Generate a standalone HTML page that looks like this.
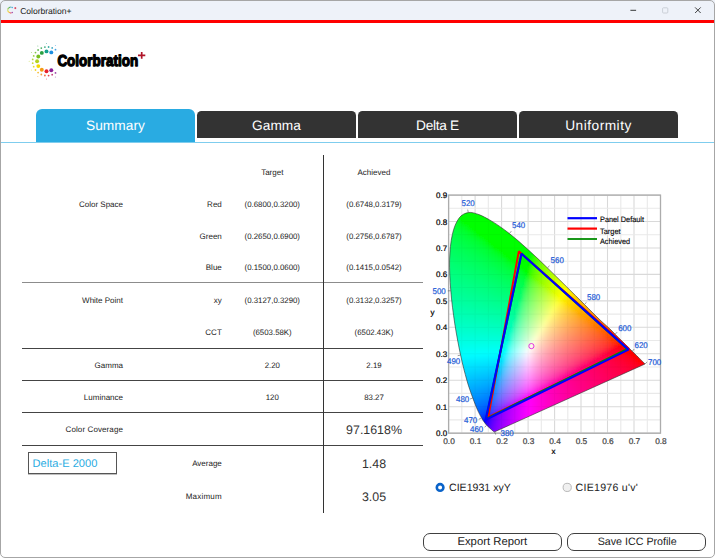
<!DOCTYPE html>
<html lang="en"><head><meta charset="utf-8"><title>Colorbration+</title>
<style>
*{box-sizing:border-box;margin:0;padding:0}
html,body{width:715px;height:559px;overflow:hidden;background:#fff}
body{font-family:"Liberation Sans",sans-serif;color:#222;position:relative;text-rendering:geometricPrecision}
.win{position:absolute;left:0;top:0;width:715px;height:559px;background:#fff;overflow:hidden}
.frame{position:absolute;left:0;top:0;width:714.6px;height:558.4px;border:1.2px solid #a6a6a6;border-radius:5px;pointer-events:none}
.titlebar{position:absolute;left:0;top:0;width:715px;height:20.2px;background:#eef2f9}
.redline{position:absolute;left:0;top:20.2px;width:715px;height:2.4px;background:#ff0000}
.title{position:absolute;left:20.2px;top:5.5px;font-size:8.6px;color:#222;letter-spacing:-0.05px;white-space:nowrap}
.abs{position:absolute;white-space:nowrap}
.tab{position:absolute;color:#fff;font-size:13.7px;letter-spacing:0.05px;text-align:center;border-radius:6px 6px 0 0}
.tab.on{left:36px;top:108.8px;width:159px;height:33.6px;background:#29abe2;line-height:33px}
.tab.off{top:110.8px;height:27.1px;background:#333;line-height:29px;border-radius:4.5px 4.5px 0 0}
.blueline{position:absolute;left:1px;top:141.7px;width:713px;height:1px;background:#7fcdee}
.t{position:absolute;font-size:8.0px;color:#1c1c1c;white-space:nowrap;line-height:11px}
.r1{text-align:right;width:120px;left:3px}
.r2{text-align:right;width:100px;left:121.8px}
.c3{text-align:center;width:100px;left:222.3px}
.c4{text-align:center;width:100px;left:324px}
.n{font-size:7.85px}
.big{font-size:12.4px;line-height:14px;color:#333}
.hl{position:absolute;left:22px;width:401px;height:1px;background:#444}
.vl{position:absolute;left:322.9px;top:155px;width:1.15px;height:357.6px;background:#333}
.debox{position:absolute;left:28px;top:452.4px;width:88.8px;height:21.2px;border:1px solid #555;color:#29abe2;font-size:11.1px;line-height:23px;padding-left:3.6px;box-shadow:0 0.5px 0.5px rgba(0,0,0,.25)}
.radio{position:absolute;font-size:10.6px;color:#222;white-space:nowrap}
.btn{position:absolute;top:532.5px;height:18.3px;border:1.6px solid #404040;border-radius:7px;font-size:11.3px;text-align:center;line-height:17px;color:#222;background:#fff}
svg.chart{position:absolute;left:0;top:0}
svg.chart text{font-family:"Liberation Sans",sans-serif;text-rendering:geometricPrecision}
.ax{font-size:8.0px;fill:#000;stroke:#000;stroke-width:0.22px}
.xg{fill:#444;stroke:#444;font-size:8.3px}
.wl{font-size:8.3px;fill:#1a58d6;stroke:#1a58d6;stroke-width:0.2px}
.lg{font-size:7.8px;fill:#000;stroke:#000;stroke-width:0.12px}
</style></head><body>
<div class="win">
<div class="titlebar"></div><div class="redline"></div>
<svg class="abs" style="left:0;top:0" width="24" height="20" viewBox="0 0 24 20"><circle cx="12.24" cy="7.54" r="0.7" fill="#1e8fe0" opacity="0.85"/><circle cx="10.78" cy="7.10" r="0.7" fill="#14a08c" opacity="0.85"/><circle cx="9.29" cy="7.46" r="0.7" fill="#2aa040" opacity="0.85"/><circle cx="8.20" cy="8.53" r="0.7" fill="#78be20" opacity="0.85"/><circle cx="7.80" cy="10.00" r="0.7" fill="#b4d21e" opacity="0.85"/><circle cx="8.20" cy="11.47" r="0.7" fill="#f5d800" opacity="0.85"/><circle cx="9.29" cy="12.54" r="0.7" fill="#f59a14" opacity="0.85"/><circle cx="10.78" cy="12.90" r="0.7" fill="#e8202a" opacity="0.85"/><circle cx="12.24" cy="12.46" r="0.7" fill="#8c1e96" opacity="0.85"/><path d="M14.3 8.1H16.3M15.3 7.1V9.1" stroke="#d01830" stroke-width="0.7" fill="none"/></svg>
<div class="title">Colorbration+</div>
<svg class="abs" style="left:615px;top:0" width="100" height="20" viewBox="615 0 100 20"><path d="M630.4 10.3H636.1" stroke="#222" stroke-width="0.9" fill="none"/><rect x="662.6" y="7.8" width="5.2" height="5.2" rx="0.8" fill="none" stroke="#c2c6ce" stroke-width="0.8"/><path d="M695.1 7.4L700.7 13M700.7 7.4L695.1 13" stroke="#222" stroke-width="0.85" fill="none"/></svg>
<svg class="abs" style="left:0;top:0" width="160" height="100" viewBox="0 0 160 100"><circle cx="51.3" cy="52.4" r="1.95" fill="#1e8fe0"/><circle cx="46.5" cy="51.4" r="1.95" fill="#14a08c"/><circle cx="41.8" cy="52.9" r="1.95" fill="#2aa040"/><circle cx="38.3" cy="56.5" r="1.95" fill="#78be20"/><circle cx="37.1" cy="61.3" r="1.95" fill="#b4d21e"/><circle cx="38.3" cy="66.1" r="1.95" fill="#f5d800"/><circle cx="41.8" cy="69.7" r="1.95" fill="#f59a14"/><circle cx="46.5" cy="71.2" r="1.95" fill="#e8202a"/><circle cx="51.3" cy="70.2" r="1.95" fill="#8c1e96"/><circle cx="55.5" cy="49.7" r="0.90" fill="#40a0e5"/><circle cx="52.2" cy="47.9" r="0.90" fill="#3ca7c3"/><circle cx="48.6" cy="47.0" r="0.90" fill="#38ada2"/><circle cx="44.9" cy="47.1" r="0.90" fill="#3fae83"/><circle cx="41.3" cy="48.1" r="0.90" fill="#47ae64"/><circle cx="38.1" cy="50.0" r="0.90" fill="#62b853"/><circle cx="35.5" cy="52.6" r="0.90" fill="#80c447"/><circle cx="33.7" cy="55.9" r="0.90" fill="#9ccd41"/><circle cx="32.7" cy="59.4" r="0.90" fill="#b3d440"/><circle cx="32.7" cy="63.2" r="0.90" fill="#ccda3a"/><circle cx="33.7" cy="66.7" r="0.90" fill="#e6dc2e"/><circle cx="35.5" cy="70.0" r="0.90" fill="#f6d42a"/><circle cx="38.1" cy="72.6" r="0.90" fill="#f6bc31"/><circle cx="41.3" cy="74.5" r="0.90" fill="#f59d3a"/><circle cx="44.9" cy="75.5" r="0.90" fill="#f06c42"/><circle cx="48.6" cy="75.6" r="0.90" fill="#e7414f"/><circle cx="52.2" cy="74.7" r="0.90" fill="#c2417a"/><circle cx="55.5" cy="72.9" r="0.90" fill="#9d40a6"/><circle cx="55.4" cy="45.6" r="0.50" fill="#78bcec"/><circle cx="46.5" cy="43.5" r="0.50" fill="#72c6ba"/><circle cx="37.8" cy="46.0" r="0.50" fill="#7fc68c"/><circle cx="31.5" cy="52.5" r="0.50" fill="#aed879"/><circle cx="29.2" cy="61.3" r="0.50" fill="#d2e478"/><circle cx="31.5" cy="70.1" r="0.50" fill="#f9e866"/><circle cx="37.8" cy="76.6" r="0.50" fill="#f9c272"/><circle cx="46.5" cy="79.1" r="0.50" fill="#f1797f"/><circle cx="55.4" cy="77.0" r="0.50" fill="#ba78c0"/><text x="57.4" y="66.3" font-family="Liberation Sans, sans-serif" font-weight="bold" font-size="15.8" textLength="80.8" lengthAdjust="spacingAndGlyphs" fill="#000" stroke="#000" stroke-width="1.3" stroke-linejoin="round">Colorbration</text><path d="M138 55.3H145.3M141.7 52V58.7" stroke="#b01428" stroke-width="1.7" fill="none"/></svg>
<div class="tab on">Summary</div>
<div class="tab off" style="left:197px;width:159px">Gamma</div>
<div class="tab off" style="left:358px;width:159px;letter-spacing:-0.3px">Delta E</div>
<div class="tab off" style="left:519px;width:159px;letter-spacing:0.5px">Uniformity</div>
<div class="blueline"></div>

<div class="t c3" style="top:167px">Target</div>
<div class="t c4" style="top:167px">Achieved</div>

<div class="t r1" style="top:199px">Color Space</div>
<div class="t r2" style="top:199px">Red</div>
<div class="t c3 n" style="top:199px">(0.6800,0.3200)</div>
<div class="t c4 n" style="top:199px">(0.6748,0.3179)</div>

<div class="t r2" style="top:231px">Green</div>
<div class="t c3 n" style="top:231px">(0.2650,0.6900)</div>
<div class="t c4 n" style="top:231px">(0.2756,0.6787)</div>

<div class="t r2" style="top:261.6px">Blue</div>
<div class="t c3 n" style="top:261.6px">(0.1500,0.0600)</div>
<div class="t c4 n" style="top:261.6px">(0.1415,0.0542)</div>

<div class="hl" style="top:282.1px;height:1.3px;background:#8c8c8c"></div>
<div class="t r1" style="top:295px">White Point</div>
<div class="t r2" style="top:295px">xy</div>
<div class="t c3 n" style="top:295px">(0.3127,0.3290)</div>
<div class="t c4 n" style="top:295px">(0.3132,0.3257)</div>

<div class="t r2" style="top:327px">CCT</div>
<div class="t c3 n" style="top:327px">(6503.58K)</div>
<div class="t c4 n" style="top:327px">(6502.43K)</div>

<div class="hl" style="top:347.6px"></div>
<div class="t r1" style="top:359.6px">Gamma</div>
<div class="t c3 n" style="top:359.6px">2.20</div>
<div class="t c4 n" style="top:359.6px">2.19</div>

<div class="hl" style="top:379.7px"></div>
<div class="t r1" style="top:391.7px">Luminance</div>
<div class="t c3 n" style="top:391.7px">120</div>
<div class="t c4 n" style="top:391.7px">83.27</div>

<div class="hl" style="top:412.2px"></div>
<div class="t r1" style="top:424.4px;letter-spacing:0.1px">Color Coverage</div>
<div class="t c4 big" style="top:422.6px">97.1618%</div>

<div class="hl" style="top:445.2px"></div>
<div class="debox">Delta-E 2000</div>
<div class="t r2" style="top:458.4px">Average</div>
<div class="t c4 big" style="top:457.2px">1.48</div>
<div class="t r2" style="top:491.1px;letter-spacing:0.2px">Maximum</div>
<div class="t c4 big" style="top:490.2px">3.05</div>
<div class="vl"></div>

<svg class="chart" width="715" height="559" viewBox="0 0 715 559">
<defs><clipPath id="lc"><path d="M494.7 431.8C494.7 431.8 494.7 431.8 494.6 431.8C494.6 431.8 494.6 431.8 494.5 431.8C494.5 431.8 494.4 431.8 494.3 431.8C494.2 431.8 494.2 431.8 494.0 431.8C493.8 431.7 493.7 431.5 493.3 431.3C493.0 431.0 492.7 430.7 492.1 430.2C491.6 429.7 491.0 429.2 490.1 428.4C489.2 427.6 487.7 426.2 486.7 425.2C485.8 424.3 485.4 423.8 484.5 422.5C483.6 421.3 482.6 419.9 481.5 417.8C480.3 415.7 479.1 413.4 477.6 410.1C476.2 406.8 474.6 403.0 472.8 398.0C471.0 393.0 468.8 387.2 466.8 380.0C464.8 372.9 462.6 364.4 460.6 355.1C458.6 345.7 456.5 334.7 454.8 323.9C453.2 313.2 451.6 301.4 450.8 290.7C449.9 280.0 449.4 269.2 449.6 259.9C449.9 250.6 450.7 241.6 452.3 234.7C453.8 227.7 456.2 222.0 458.9 218.3C461.6 214.6 465.0 213.2 468.3 212.6C471.6 211.9 475.3 213.3 478.9 214.6C482.4 215.8 486.1 218.0 489.6 219.9C493.1 221.9 496.4 224.1 499.7 226.4C503.0 228.6 506.2 231.1 509.4 233.6C512.6 236.1 515.8 238.8 519.0 241.5C522.2 244.3 525.3 247.1 528.5 250.0C531.7 252.9 534.8 255.8 538.0 258.8C541.1 261.8 544.3 264.9 547.4 267.9C550.6 271.0 553.7 274.1 556.9 277.2C560.0 280.2 563.1 283.3 566.2 286.4C569.3 289.4 572.4 292.5 575.4 295.5C578.5 298.5 581.4 301.5 584.4 304.4C587.3 307.3 590.1 310.2 592.9 312.9C595.7 315.7 598.3 318.4 601.0 320.9C603.6 323.4 606.4 325.6 608.7 327.8C611.1 330.0 613.1 332.2 615.1 334.2C617.1 336.2 619.0 338.1 620.7 339.8C622.4 341.5 623.5 342.5 625.4 344.4C627.3 346.3 630.3 349.3 632.2 351.2C634.0 353.0 635.3 354.3 636.5 355.5C637.7 356.7 638.7 357.6 639.5 358.4C640.3 359.2 640.8 359.7 641.3 360.2C641.8 360.7 642.0 361.0 642.4 361.3C642.7 361.6 642.8 361.7 643.3 362.2C643.7 362.6 644.7 363.7 645.0 364.0Z"/></clipPath><filter id="bl" x="-5%" y="-5%" width="110%" height="110%"><feGaussianBlur stdDeviation="1.6"/></filter></defs>
<g stroke-width="1.1"><line x1="448.6" y1="195.1" x2="448.6" y2="433.1" stroke="#d9d9d9"/><line x1="461.8" y1="195.1" x2="461.8" y2="433.1" stroke="#e9e9e9"/><line x1="475.1" y1="195.1" x2="475.1" y2="433.1" stroke="#d9d9d9"/><line x1="488.3" y1="195.1" x2="488.3" y2="433.1" stroke="#e9e9e9"/><line x1="501.6" y1="195.1" x2="501.6" y2="433.1" stroke="#d9d9d9"/><line x1="514.8" y1="195.1" x2="514.8" y2="433.1" stroke="#e9e9e9"/><line x1="528.1" y1="195.1" x2="528.1" y2="433.1" stroke="#d9d9d9"/><line x1="541.3" y1="195.1" x2="541.3" y2="433.1" stroke="#e9e9e9"/><line x1="554.6" y1="195.1" x2="554.6" y2="433.1" stroke="#d9d9d9"/><line x1="567.8" y1="195.1" x2="567.8" y2="433.1" stroke="#e9e9e9"/><line x1="581.0" y1="195.1" x2="581.0" y2="433.1" stroke="#d9d9d9"/><line x1="594.3" y1="195.1" x2="594.3" y2="433.1" stroke="#e9e9e9"/><line x1="607.5" y1="195.1" x2="607.5" y2="433.1" stroke="#d9d9d9"/><line x1="620.8" y1="195.1" x2="620.8" y2="433.1" stroke="#e9e9e9"/><line x1="634.0" y1="195.1" x2="634.0" y2="433.1" stroke="#d9d9d9"/><line x1="647.3" y1="195.1" x2="647.3" y2="433.1" stroke="#e9e9e9"/><line x1="660.5" y1="195.1" x2="660.5" y2="433.1" stroke="#d9d9d9"/><line x1="448.6" y1="433.1" x2="660.5" y2="433.1" stroke="#d9d9d9"/><line x1="448.6" y1="419.9" x2="660.5" y2="419.9" stroke="#e9e9e9"/><line x1="448.6" y1="406.7" x2="660.5" y2="406.7" stroke="#d9d9d9"/><line x1="448.6" y1="393.4" x2="660.5" y2="393.4" stroke="#e9e9e9"/><line x1="448.6" y1="380.2" x2="660.5" y2="380.2" stroke="#d9d9d9"/><line x1="448.6" y1="367.0" x2="660.5" y2="367.0" stroke="#e9e9e9"/><line x1="448.6" y1="353.8" x2="660.5" y2="353.8" stroke="#d9d9d9"/><line x1="448.6" y1="340.5" x2="660.5" y2="340.5" stroke="#e9e9e9"/><line x1="448.6" y1="327.3" x2="660.5" y2="327.3" stroke="#d9d9d9"/><line x1="448.6" y1="314.1" x2="660.5" y2="314.1" stroke="#e9e9e9"/><line x1="448.6" y1="300.9" x2="660.5" y2="300.9" stroke="#d9d9d9"/><line x1="448.6" y1="287.6" x2="660.5" y2="287.6" stroke="#e9e9e9"/><line x1="448.6" y1="274.4" x2="660.5" y2="274.4" stroke="#d9d9d9"/><line x1="448.6" y1="261.2" x2="660.5" y2="261.2" stroke="#e9e9e9"/><line x1="448.6" y1="248.0" x2="660.5" y2="248.0" stroke="#d9d9d9"/><line x1="448.6" y1="234.7" x2="660.5" y2="234.7" stroke="#e9e9e9"/><line x1="448.6" y1="221.5" x2="660.5" y2="221.5" stroke="#d9d9d9"/><line x1="448.6" y1="208.3" x2="660.5" y2="208.3" stroke="#e9e9e9"/><line x1="448.6" y1="195.1" x2="660.5" y2="195.1" stroke="#d9d9d9"/></g><rect x="448.6" y="195.1" width="211.9" height="238.1" fill="none" stroke="#acacac" stroke-width="1.3"/>
<g clip-path="url(#lc)"><g filter="url(#bl)"><rect x="463" y="210" width="16" height="4" fill="#00ff00"/><rect x="460" y="213" width="28" height="4" fill="#00ff00"/><rect x="457" y="216" width="37" height="4" fill="#00ff00"/><rect x="454" y="219" width="4" height="4" fill="#00ff1f"/><rect x="457" y="219" width="4" height="4" fill="#00ff13"/><rect x="460" y="219" width="37" height="4" fill="#00ff00"/><rect x="454" y="222" width="4" height="4" fill="#00ff29"/><rect x="457" y="222" width="4" height="4" fill="#00ff22"/><rect x="460" y="222" width="4" height="4" fill="#00ff17"/><rect x="463" y="222" width="40" height="4" fill="#00ff00"/><rect x="451" y="225" width="4" height="4" fill="#00ff36"/><rect x="454" y="225" width="4" height="4" fill="#00ff31"/><rect x="457" y="225" width="4" height="4" fill="#00ff2b"/><rect x="460" y="225" width="4" height="4" fill="#00ff24"/><rect x="463" y="225" width="4" height="4" fill="#00ff1b"/><rect x="466" y="225" width="4" height="4" fill="#00ff07"/><rect x="469" y="225" width="37" height="4" fill="#00ff00"/><rect x="451" y="228" width="4" height="4" fill="#00ff3c"/><rect x="454" y="228" width="4" height="4" fill="#00ff38"/><rect x="457" y="228" width="4" height="4" fill="#00ff33"/><rect x="460" y="228" width="4" height="4" fill="#00ff2d"/><rect x="463" y="228" width="4" height="4" fill="#00ff27"/><rect x="466" y="228" width="4" height="4" fill="#00ff1e"/><rect x="469" y="228" width="4" height="4" fill="#00ff10"/><rect x="472" y="228" width="40" height="4" fill="#00ff00"/><rect x="451" y="231" width="4" height="4" fill="#00ff42"/><rect x="454" y="231" width="4" height="4" fill="#00ff3e"/><rect x="457" y="231" width="4" height="4" fill="#00ff3a"/><rect x="460" y="231" width="4" height="4" fill="#00ff35"/><rect x="463" y="231" width="4" height="4" fill="#00ff30"/><rect x="466" y="231" width="4" height="4" fill="#00ff29"/><rect x="469" y="231" width="4" height="4" fill="#00ff21"/><rect x="472" y="231" width="4" height="4" fill="#00ff15"/><rect x="475" y="231" width="40" height="4" fill="#00ff00"/><rect x="448" y="234" width="4" height="4" fill="#00ff4a"/><rect x="451" y="234" width="4" height="4" fill="#00ff47"/><rect x="454" y="234" width="4" height="4" fill="#00ff44"/><rect x="457" y="234" width="4" height="4" fill="#00ff40"/><rect x="460" y="234" width="4" height="4" fill="#00ff3c"/><rect x="463" y="234" width="4" height="4" fill="#00ff37"/><rect x="466" y="234" width="4" height="4" fill="#00ff32"/><rect x="469" y="234" width="4" height="4" fill="#00ff2b"/><rect x="472" y="234" width="4" height="4" fill="#00ff24"/><rect x="475" y="234" width="4" height="4" fill="#00ff19"/><rect x="478" y="234" width="40" height="4" fill="#00ff00"/><rect x="448" y="237" width="4" height="4" fill="#00ff4f"/><rect x="451" y="237" width="4" height="4" fill="#00ff4c"/><rect x="454" y="237" width="4" height="4" fill="#00ff49"/><rect x="457" y="237" width="4" height="4" fill="#00ff45"/><rect x="460" y="237" width="4" height="4" fill="#00ff42"/><rect x="463" y="237" width="4" height="4" fill="#00ff3d"/><rect x="466" y="237" width="4" height="4" fill="#00ff39"/><rect x="469" y="237" width="4" height="4" fill="#00ff34"/><rect x="472" y="237" width="4" height="4" fill="#00ff2e"/><rect x="475" y="237" width="4" height="4" fill="#00ff26"/><rect x="478" y="237" width="4" height="4" fill="#00ff1d"/><rect x="481" y="237" width="4" height="4" fill="#00ff0a"/><rect x="484" y="237" width="37" height="4" fill="#00ff00"/><rect x="448" y="240" width="4" height="4" fill="#00ff54"/><rect x="451" y="240" width="4" height="4" fill="#00ff51"/><rect x="454" y="240" width="4" height="4" fill="#00ff4e"/><rect x="457" y="240" width="4" height="4" fill="#00ff4b"/><rect x="460" y="240" width="4" height="4" fill="#00ff47"/><rect x="463" y="240" width="4" height="4" fill="#00ff43"/><rect x="466" y="240" width="4" height="4" fill="#00ff3f"/><rect x="469" y="240" width="4" height="4" fill="#00ff3b"/><rect x="472" y="240" width="4" height="4" fill="#00ff36"/><rect x="475" y="240" width="4" height="4" fill="#00ff30"/><rect x="478" y="240" width="4" height="4" fill="#00ff29"/><rect x="481" y="240" width="4" height="4" fill="#00ff20"/><rect x="484" y="240" width="4" height="4" fill="#00ff12"/><rect x="487" y="240" width="37" height="4" fill="#00ff00"/><rect x="448" y="243" width="4" height="4" fill="#00ff58"/><rect x="451" y="243" width="4" height="4" fill="#00ff55"/><rect x="454" y="243" width="4" height="4" fill="#00ff53"/><rect x="457" y="243" width="4" height="4" fill="#00ff50"/><rect x="460" y="243" width="4" height="4" fill="#00ff4c"/><rect x="463" y="243" width="4" height="4" fill="#00ff49"/><rect x="466" y="243" width="4" height="4" fill="#00ff45"/><rect x="469" y="243" width="4" height="4" fill="#00ff41"/><rect x="472" y="243" width="4" height="4" fill="#00ff3d"/><rect x="475" y="243" width="4" height="4" fill="#00ff38"/><rect x="478" y="243" width="4" height="4" fill="#00ff32"/><rect x="481" y="243" width="4" height="4" fill="#00ff2c"/><rect x="484" y="243" width="4" height="4" fill="#00ff23"/><rect x="487" y="243" width="4" height="4" fill="#00ff17"/><rect x="490" y="243" width="40" height="4" fill="#00ff00"/><rect x="448" y="246" width="4" height="4" fill="#00ff5c"/><rect x="451" y="246" width="4" height="4" fill="#00ff5a"/><rect x="454" y="246" width="4" height="4" fill="#00ff57"/><rect x="457" y="246" width="4" height="4" fill="#00ff54"/><rect x="460" y="246" width="4" height="4" fill="#00ff51"/><rect x="463" y="246" width="4" height="4" fill="#00ff4e"/><rect x="466" y="246" width="4" height="4" fill="#00ff4b"/><rect x="469" y="246" width="4" height="4" fill="#00ff47"/><rect x="472" y="246" width="4" height="4" fill="#00ff43"/><rect x="475" y="246" width="4" height="4" fill="#00ff3f"/><rect x="478" y="246" width="4" height="4" fill="#00ff3a"/><rect x="481" y="246" width="4" height="4" fill="#00ff34"/><rect x="484" y="246" width="4" height="4" fill="#00ff2e"/><rect x="487" y="246" width="4" height="4" fill="#00ff26"/><rect x="490" y="246" width="4" height="4" fill="#00ff1b"/><rect x="493" y="246" width="40" height="4" fill="#00ff00"/><rect x="448" y="249" width="4" height="4" fill="#00ff60"/><rect x="451" y="249" width="4" height="4" fill="#00ff5e"/><rect x="454" y="249" width="4" height="4" fill="#00ff5c"/><rect x="457" y="249" width="4" height="4" fill="#00ff59"/><rect x="460" y="249" width="4" height="4" fill="#00ff56"/><rect x="463" y="249" width="4" height="4" fill="#00ff53"/><rect x="466" y="249" width="4" height="4" fill="#00ff50"/><rect x="469" y="249" width="4" height="4" fill="#00ff4d"/><rect x="472" y="249" width="4" height="4" fill="#00ff49"/><rect x="475" y="249" width="4" height="4" fill="#00ff45"/><rect x="478" y="249" width="4" height="4" fill="#00ff41"/><rect x="481" y="249" width="4" height="4" fill="#00ff3c"/><rect x="484" y="249" width="4" height="4" fill="#00ff37"/><rect x="487" y="249" width="4" height="4" fill="#00ff30"/><rect x="490" y="249" width="4" height="4" fill="#00ff29"/><rect x="493" y="249" width="4" height="4" fill="#00ff1f"/><rect x="496" y="249" width="4" height="4" fill="#00ff0c"/><rect x="499" y="249" width="37" height="4" fill="#00ff00"/><rect x="448" y="252" width="4" height="4" fill="#00ff65"/><rect x="451" y="252" width="4" height="4" fill="#00ff62"/><rect x="454" y="252" width="4" height="4" fill="#00ff60"/><rect x="457" y="252" width="4" height="4" fill="#00ff5d"/><rect x="460" y="252" width="4" height="4" fill="#00ff5b"/><rect x="463" y="252" width="4" height="4" fill="#00ff58"/><rect x="466" y="252" width="4" height="4" fill="#00ff55"/><rect x="469" y="252" width="4" height="4" fill="#00ff52"/><rect x="472" y="252" width="4" height="4" fill="#00ff4f"/><rect x="475" y="252" width="4" height="4" fill="#00ff4b"/><rect x="478" y="252" width="4" height="4" fill="#00ff47"/><rect x="481" y="252" width="4" height="4" fill="#00ff43"/><rect x="484" y="252" width="4" height="4" fill="#00ff3e"/><rect x="487" y="252" width="4" height="4" fill="#00ff39"/><rect x="490" y="252" width="4" height="4" fill="#00ff33"/><rect x="493" y="252" width="4" height="4" fill="#00ff2c"/><rect x="496" y="252" width="4" height="4" fill="#00ff22"/><rect x="499" y="252" width="4" height="4" fill="#00ff14"/><rect x="502" y="252" width="34" height="4" fill="#00ff00"/><rect x="535" y="252" width="4" height="4" fill="#3aff00"/><rect x="448" y="255" width="4" height="4" fill="#00ff69"/><rect x="451" y="255" width="4" height="4" fill="#00ff66"/><rect x="454" y="255" width="4" height="4" fill="#00ff64"/><rect x="457" y="255" width="4" height="4" fill="#00ff62"/><rect x="460" y="255" width="4" height="4" fill="#00ff5f"/><rect x="463" y="255" width="4" height="4" fill="#00ff5d"/><rect x="466" y="255" width="4" height="4" fill="#00ff5a"/><rect x="469" y="255" width="4" height="4" fill="#00ff57"/><rect x="472" y="255" width="4" height="4" fill="#00ff54"/><rect x="475" y="255" width="4" height="4" fill="#00ff51"/><rect x="478" y="255" width="4" height="4" fill="#00ff4d"/><rect x="481" y="255" width="4" height="4" fill="#00ff49"/><rect x="484" y="255" width="4" height="4" fill="#00ff45"/><rect x="487" y="255" width="4" height="4" fill="#00ff40"/><rect x="490" y="255" width="4" height="4" fill="#00ff3b"/><rect x="493" y="255" width="4" height="4" fill="#00ff35"/><rect x="496" y="255" width="4" height="4" fill="#00ff2e"/><rect x="499" y="255" width="4" height="4" fill="#00ff26"/><rect x="502" y="255" width="4" height="4" fill="#00ff19"/><rect x="505" y="255" width="28" height="4" fill="#00ff00"/><rect x="532" y="255" width="4" height="4" fill="#1aff00"/><rect x="535" y="255" width="4" height="4" fill="#43ff00"/><rect x="538" y="255" width="4" height="4" fill="#59ff00"/><rect x="448" y="258" width="4" height="4" fill="#00ff6d"/><rect x="451" y="258" width="4" height="4" fill="#00ff6b"/><rect x="454" y="258" width="4" height="4" fill="#00ff68"/><rect x="457" y="258" width="4" height="4" fill="#00ff66"/><rect x="460" y="258" width="4" height="4" fill="#00ff64"/><rect x="463" y="258" width="4" height="4" fill="#00ff61"/><rect x="466" y="258" width="4" height="4" fill="#00ff5f"/><rect x="469" y="258" width="4" height="4" fill="#00ff5c"/><rect x="472" y="258" width="4" height="4" fill="#00ff59"/><rect x="475" y="258" width="4" height="4" fill="#00ff56"/><rect x="478" y="258" width="4" height="4" fill="#00ff53"/><rect x="481" y="258" width="4" height="4" fill="#00ff4f"/><rect x="484" y="258" width="4" height="4" fill="#00ff4b"/><rect x="487" y="258" width="4" height="4" fill="#00ff47"/><rect x="490" y="258" width="4" height="4" fill="#00ff43"/><rect x="493" y="258" width="4" height="4" fill="#00ff3e"/><rect x="496" y="258" width="4" height="4" fill="#00ff38"/><rect x="499" y="258" width="4" height="4" fill="#00ff31"/><rect x="502" y="258" width="4" height="4" fill="#00ff29"/><rect x="505" y="258" width="4" height="4" fill="#00ff1d"/><rect x="508" y="258" width="25" height="4" fill="#00ff00"/><rect x="532" y="258" width="4" height="4" fill="#2bff00"/><rect x="535" y="258" width="4" height="4" fill="#4aff00"/><rect x="538" y="258" width="4" height="4" fill="#5fff00"/><rect x="541" y="258" width="4" height="4" fill="#70ff00"/><rect x="448" y="261" width="4" height="4" fill="#00ff71"/><rect x="451" y="261" width="4" height="4" fill="#00ff6f"/><rect x="454" y="261" width="4" height="4" fill="#00ff6c"/><rect x="457" y="261" width="4" height="4" fill="#00ff6a"/><rect x="460" y="261" width="4" height="4" fill="#00ff68"/><rect x="463" y="261" width="4" height="4" fill="#00ff66"/><rect x="466" y="261" width="4" height="4" fill="#00ff63"/><rect x="469" y="261" width="4" height="4" fill="#00ff61"/><rect x="472" y="261" width="4" height="4" fill="#00ff5e"/><rect x="475" y="261" width="4" height="4" fill="#00ff5b"/><rect x="478" y="261" width="4" height="4" fill="#00ff58"/><rect x="481" y="261" width="4" height="4" fill="#00ff55"/><rect x="484" y="261" width="4" height="4" fill="#00ff51"/><rect x="487" y="261" width="4" height="4" fill="#00ff4d"/><rect x="490" y="261" width="4" height="4" fill="#00ff49"/><rect x="493" y="261" width="4" height="4" fill="#00ff45"/><rect x="496" y="261" width="4" height="4" fill="#00ff40"/><rect x="499" y="261" width="4" height="4" fill="#00ff3a"/><rect x="502" y="261" width="4" height="4" fill="#00ff34"/><rect x="505" y="261" width="4" height="4" fill="#00ff2c"/><rect x="508" y="261" width="4" height="4" fill="#00ff21"/><rect x="511" y="261" width="4" height="4" fill="#00ff0e"/><rect x="514" y="261" width="19" height="4" fill="#00ff00"/><rect x="532" y="261" width="4" height="4" fill="#36ff00"/><rect x="535" y="261" width="4" height="4" fill="#51ff00"/><rect x="538" y="261" width="4" height="4" fill="#65ff00"/><rect x="541" y="261" width="4" height="4" fill="#75ff00"/><rect x="544" y="261" width="4" height="4" fill="#84ff00"/><rect x="448" y="264" width="4" height="4" fill="#00ff74"/><rect x="451" y="264" width="4" height="4" fill="#00ff73"/><rect x="454" y="264" width="4" height="4" fill="#00ff71"/><rect x="457" y="264" width="4" height="4" fill="#00ff6f"/><rect x="460" y="264" width="4" height="4" fill="#00ff6c"/><rect x="463" y="264" width="4" height="4" fill="#00ff6a"/><rect x="466" y="264" width="4" height="4" fill="#00ff68"/><rect x="469" y="264" width="4" height="4" fill="#00ff65"/><rect x="472" y="264" width="4" height="4" fill="#00ff63"/><rect x="475" y="264" width="4" height="4" fill="#00ff60"/><rect x="478" y="264" width="4" height="4" fill="#00ff5d"/><rect x="481" y="264" width="4" height="4" fill="#00ff5a"/><rect x="484" y="264" width="4" height="4" fill="#00ff57"/><rect x="487" y="264" width="4" height="4" fill="#00ff53"/><rect x="490" y="264" width="4" height="4" fill="#00ff50"/><rect x="493" y="264" width="4" height="4" fill="#00ff4c"/><rect x="496" y="264" width="4" height="4" fill="#00ff47"/><rect x="499" y="264" width="4" height="4" fill="#00ff42"/><rect x="502" y="264" width="4" height="4" fill="#00ff3d"/><rect x="505" y="264" width="4" height="4" fill="#00ff36"/><rect x="508" y="264" width="4" height="4" fill="#00ff2f"/><rect x="511" y="264" width="4" height="4" fill="#00ff25"/><rect x="514" y="264" width="4" height="4" fill="#00ff16"/><rect x="517" y="264" width="16" height="4" fill="#00ff00"/><rect x="532" y="264" width="4" height="4" fill="#40ff00"/><rect x="535" y="264" width="4" height="4" fill="#58ff00"/><rect x="538" y="264" width="4" height="4" fill="#6bff00"/><rect x="541" y="264" width="4" height="4" fill="#7bff00"/><rect x="544" y="264" width="4" height="4" fill="#89ff00"/><rect x="547" y="264" width="4" height="4" fill="#95ff00"/><rect x="448" y="267" width="4" height="4" fill="#00ff78"/><rect x="451" y="267" width="4" height="4" fill="#00ff76"/><rect x="454" y="267" width="4" height="4" fill="#00ff75"/><rect x="457" y="267" width="4" height="4" fill="#00ff73"/><rect x="460" y="267" width="4" height="4" fill="#00ff71"/><rect x="463" y="267" width="4" height="4" fill="#00ff6e"/><rect x="466" y="267" width="4" height="4" fill="#00ff6c"/><rect x="469" y="267" width="4" height="4" fill="#00ff6a"/><rect x="472" y="267" width="4" height="4" fill="#00ff67"/><rect x="475" y="267" width="4" height="4" fill="#00ff65"/><rect x="478" y="267" width="4" height="4" fill="#00ff62"/><rect x="481" y="267" width="4" height="4" fill="#00ff5f"/><rect x="484" y="267" width="4" height="4" fill="#00ff5c"/><rect x="487" y="267" width="4" height="4" fill="#00ff59"/><rect x="490" y="267" width="4" height="4" fill="#00ff56"/><rect x="493" y="267" width="4" height="4" fill="#00ff52"/><rect x="496" y="267" width="4" height="4" fill="#00ff4e"/><rect x="499" y="267" width="4" height="4" fill="#00ff4a"/><rect x="502" y="267" width="4" height="4" fill="#00ff45"/><rect x="505" y="267" width="4" height="4" fill="#00ff3f"/><rect x="508" y="267" width="4" height="4" fill="#00ff39"/><rect x="511" y="267" width="4" height="4" fill="#00ff32"/><rect x="514" y="267" width="4" height="4" fill="#00ff29"/><rect x="517" y="267" width="4" height="4" fill="#00ff1b"/><rect x="520" y="267" width="10" height="4" fill="#00ff00"/><rect x="529" y="267" width="4" height="4" fill="#23ff00"/><rect x="532" y="267" width="4" height="4" fill="#48ff00"/><rect x="535" y="267" width="4" height="4" fill="#5fff00"/><rect x="538" y="267" width="4" height="4" fill="#70ff00"/><rect x="541" y="267" width="4" height="4" fill="#80ff00"/><rect x="544" y="267" width="4" height="4" fill="#8eff00"/><rect x="547" y="267" width="4" height="4" fill="#9aff00"/><rect x="550" y="267" width="4" height="4" fill="#a6ff00"/><rect x="448" y="270" width="4" height="4" fill="#00ff7c"/><rect x="451" y="270" width="4" height="4" fill="#00ff7a"/><rect x="454" y="270" width="4" height="4" fill="#00ff79"/><rect x="457" y="270" width="4" height="4" fill="#00ff77"/><rect x="460" y="270" width="4" height="4" fill="#00ff75"/><rect x="463" y="270" width="4" height="4" fill="#00ff73"/><rect x="466" y="270" width="4" height="4" fill="#00ff71"/><rect x="469" y="270" width="4" height="4" fill="#00ff6e"/><rect x="472" y="270" width="4" height="4" fill="#00ff6c"/><rect x="475" y="270" width="4" height="4" fill="#00ff6a"/><rect x="478" y="270" width="4" height="4" fill="#00ff67"/><rect x="481" y="270" width="4" height="4" fill="#00ff64"/><rect x="484" y="270" width="4" height="4" fill="#00ff62"/><rect x="487" y="270" width="4" height="4" fill="#00ff5f"/><rect x="490" y="270" width="4" height="4" fill="#00ff5b"/><rect x="493" y="270" width="4" height="4" fill="#00ff58"/><rect x="496" y="270" width="4" height="4" fill="#00ff54"/><rect x="499" y="270" width="4" height="4" fill="#00ff50"/><rect x="502" y="270" width="4" height="4" fill="#00ff4c"/><rect x="505" y="270" width="4" height="4" fill="#00ff47"/><rect x="508" y="270" width="4" height="4" fill="#00ff42"/><rect x="511" y="270" width="4" height="4" fill="#00ff3c"/><rect x="514" y="270" width="4" height="4" fill="#00ff35"/><rect x="517" y="270" width="4" height="4" fill="#00ff2c"/><rect x="520" y="270" width="4" height="4" fill="#00ff20"/><rect x="523" y="270" width="7" height="4" fill="#00ff00"/><rect x="529" y="270" width="4" height="4" fill="#31ff00"/><rect x="532" y="270" width="4" height="4" fill="#50ff00"/><rect x="535" y="270" width="4" height="4" fill="#65ff00"/><rect x="538" y="270" width="4" height="4" fill="#76ff00"/><rect x="541" y="270" width="4" height="4" fill="#85ff00"/><rect x="544" y="270" width="4" height="4" fill="#93ff00"/><rect x="547" y="270" width="4" height="4" fill="#9fff00"/><rect x="550" y="270" width="4" height="4" fill="#abff00"/><rect x="553" y="270" width="4" height="4" fill="#b6ff00"/><rect x="448" y="273" width="4" height="4" fill="#00ff80"/><rect x="451" y="273" width="4" height="4" fill="#00ff7e"/><rect x="454" y="273" width="4" height="4" fill="#00ff7d"/><rect x="457" y="273" width="4" height="4" fill="#00ff7b"/><rect x="460" y="273" width="4" height="4" fill="#00ff79"/><rect x="463" y="273" width="4" height="4" fill="#00ff77"/><rect x="466" y="273" width="4" height="4" fill="#00ff75"/><rect x="469" y="273" width="4" height="4" fill="#00ff73"/><rect x="472" y="273" width="4" height="4" fill="#00ff71"/><rect x="475" y="273" width="4" height="4" fill="#00ff6e"/><rect x="478" y="273" width="4" height="4" fill="#00ff6c"/><rect x="481" y="273" width="4" height="4" fill="#00ff69"/><rect x="484" y="273" width="4" height="4" fill="#00ff67"/><rect x="487" y="273" width="4" height="4" fill="#00ff64"/><rect x="490" y="273" width="4" height="4" fill="#00ff61"/><rect x="493" y="273" width="4" height="4" fill="#00ff5e"/><rect x="496" y="273" width="4" height="4" fill="#00ff5a"/><rect x="499" y="273" width="4" height="4" fill="#00ff57"/><rect x="502" y="273" width="4" height="4" fill="#00ff53"/><rect x="505" y="273" width="4" height="4" fill="#00ff4e"/><rect x="508" y="273" width="4" height="4" fill="#00ff4a"/><rect x="511" y="273" width="4" height="4" fill="#00ff45"/><rect x="514" y="273" width="4" height="4" fill="#00ff3f"/><rect x="517" y="273" width="4" height="4" fill="#00ff38"/><rect x="520" y="273" width="4" height="4" fill="#00ff2f"/><rect x="523" y="273" width="4" height="4" fill="#00ff24"/><rect x="526" y="273" width="4" height="4" fill="#00ff11"/><rect x="529" y="273" width="4" height="4" fill="#3cff00"/><rect x="532" y="273" width="4" height="4" fill="#57ff00"/><rect x="535" y="273" width="4" height="4" fill="#6bff00"/><rect x="538" y="273" width="4" height="4" fill="#7cff00"/><rect x="541" y="273" width="4" height="4" fill="#8aff00"/><rect x="544" y="273" width="4" height="4" fill="#98ff00"/><rect x="547" y="273" width="4" height="4" fill="#a4ff00"/><rect x="550" y="273" width="4" height="4" fill="#b0ff00"/><rect x="553" y="273" width="4" height="4" fill="#bbff00"/><rect x="556" y="273" width="4" height="4" fill="#c6ff00"/><rect x="448" y="276" width="4" height="4" fill="#00ff84"/><rect x="451" y="276" width="4" height="4" fill="#00ff82"/><rect x="454" y="276" width="4" height="4" fill="#00ff81"/><rect x="457" y="276" width="4" height="4" fill="#00ff7f"/><rect x="460" y="276" width="4" height="4" fill="#00ff7d"/><rect x="463" y="276" width="4" height="4" fill="#00ff7b"/><rect x="466" y="276" width="4" height="4" fill="#00ff79"/><rect x="469" y="276" width="4" height="4" fill="#00ff77"/><rect x="472" y="276" width="4" height="4" fill="#00ff75"/><rect x="475" y="276" width="4" height="4" fill="#00ff73"/><rect x="478" y="276" width="4" height="4" fill="#00ff71"/><rect x="481" y="276" width="4" height="4" fill="#00ff6e"/><rect x="484" y="276" width="4" height="4" fill="#00ff6c"/><rect x="487" y="276" width="4" height="4" fill="#00ff69"/><rect x="490" y="276" width="4" height="4" fill="#00ff66"/><rect x="493" y="276" width="4" height="4" fill="#00ff63"/><rect x="496" y="276" width="4" height="4" fill="#00ff60"/><rect x="499" y="276" width="4" height="4" fill="#00ff5d"/><rect x="502" y="276" width="4" height="4" fill="#00ff59"/><rect x="505" y="276" width="4" height="4" fill="#00ff55"/><rect x="508" y="276" width="4" height="4" fill="#00ff51"/><rect x="511" y="276" width="4" height="4" fill="#00ff4c"/><rect x="514" y="276" width="4" height="4" fill="#00ff47"/><rect x="517" y="276" width="4" height="4" fill="#00ff41"/><rect x="520" y="276" width="4" height="4" fill="#00ff3b"/><rect x="523" y="276" width="4" height="4" fill="#00ff33"/><rect x="526" y="276" width="4" height="4" fill="#17ff28"/><rect x="529" y="276" width="4" height="4" fill="#46ff19"/><rect x="532" y="276" width="4" height="4" fill="#5eff00"/><rect x="535" y="276" width="4" height="4" fill="#71ff00"/><rect x="538" y="276" width="4" height="4" fill="#81ff00"/><rect x="541" y="276" width="4" height="4" fill="#90ff00"/><rect x="544" y="276" width="4" height="4" fill="#9dff00"/><rect x="547" y="276" width="4" height="4" fill="#a9ff00"/><rect x="550" y="276" width="4" height="4" fill="#b5ff00"/><rect x="553" y="276" width="4" height="4" fill="#c0ff00"/><rect x="556" y="276" width="4" height="4" fill="#cbff00"/><rect x="559" y="276" width="4" height="4" fill="#d6ff00"/><rect x="448" y="279" width="4" height="4" fill="#00ff88"/><rect x="451" y="279" width="4" height="4" fill="#00ff86"/><rect x="454" y="279" width="4" height="4" fill="#00ff85"/><rect x="457" y="279" width="4" height="4" fill="#00ff83"/><rect x="460" y="279" width="4" height="4" fill="#00ff81"/><rect x="463" y="279" width="4" height="4" fill="#00ff80"/><rect x="466" y="279" width="4" height="4" fill="#00ff7e"/><rect x="469" y="279" width="4" height="4" fill="#00ff7c"/><rect x="472" y="279" width="4" height="4" fill="#00ff7a"/><rect x="475" y="279" width="4" height="4" fill="#00ff78"/><rect x="478" y="279" width="4" height="4" fill="#00ff76"/><rect x="481" y="279" width="4" height="4" fill="#00ff73"/><rect x="484" y="279" width="4" height="4" fill="#00ff71"/><rect x="487" y="279" width="4" height="4" fill="#00ff6e"/><rect x="490" y="279" width="4" height="4" fill="#00ff6c"/><rect x="493" y="279" width="4" height="4" fill="#00ff69"/><rect x="496" y="279" width="4" height="4" fill="#00ff66"/><rect x="499" y="279" width="4" height="4" fill="#00ff63"/><rect x="502" y="279" width="4" height="4" fill="#00ff5f"/><rect x="505" y="279" width="4" height="4" fill="#00ff5c"/><rect x="508" y="279" width="4" height="4" fill="#00ff58"/><rect x="511" y="279" width="4" height="4" fill="#00ff54"/><rect x="514" y="279" width="4" height="4" fill="#00ff4f"/><rect x="517" y="279" width="4" height="4" fill="#00ff4a"/><rect x="520" y="279" width="4" height="4" fill="#00ff44"/><rect x="523" y="279" width="4" height="4" fill="#00ff3e"/><rect x="526" y="279" width="4" height="4" fill="#2bff36"/><rect x="529" y="279" width="4" height="4" fill="#4eff2c"/><rect x="532" y="279" width="4" height="4" fill="#65ff1e"/><rect x="535" y="279" width="4" height="4" fill="#77ff00"/><rect x="538" y="279" width="4" height="4" fill="#87ff00"/><rect x="541" y="279" width="4" height="4" fill="#95ff00"/><rect x="544" y="279" width="4" height="4" fill="#a2ff00"/><rect x="547" y="279" width="4" height="4" fill="#afff00"/><rect x="550" y="279" width="4" height="4" fill="#baff00"/><rect x="553" y="279" width="4" height="4" fill="#c6ff00"/><rect x="556" y="279" width="4" height="4" fill="#d0ff00"/><rect x="559" y="279" width="4" height="4" fill="#dbff00"/><rect x="562" y="279" width="4" height="4" fill="#e5ff00"/><rect x="448" y="282" width="4" height="4" fill="#00ff8c"/><rect x="451" y="282" width="4" height="4" fill="#00ff8a"/><rect x="454" y="282" width="4" height="4" fill="#00ff89"/><rect x="457" y="282" width="4" height="4" fill="#00ff87"/><rect x="460" y="282" width="4" height="4" fill="#00ff85"/><rect x="463" y="282" width="4" height="4" fill="#00ff84"/><rect x="466" y="282" width="4" height="4" fill="#00ff82"/><rect x="469" y="282" width="4" height="4" fill="#00ff80"/><rect x="472" y="282" width="4" height="4" fill="#00ff7e"/><rect x="475" y="282" width="4" height="4" fill="#00ff7c"/><rect x="478" y="282" width="4" height="4" fill="#00ff7a"/><rect x="481" y="282" width="4" height="4" fill="#00ff78"/><rect x="484" y="282" width="4" height="4" fill="#00ff76"/><rect x="487" y="282" width="4" height="4" fill="#00ff73"/><rect x="490" y="282" width="4" height="4" fill="#00ff71"/><rect x="493" y="282" width="4" height="4" fill="#00ff6e"/><rect x="496" y="282" width="4" height="4" fill="#00ff6c"/><rect x="499" y="282" width="4" height="4" fill="#00ff69"/><rect x="502" y="282" width="4" height="4" fill="#00ff65"/><rect x="505" y="282" width="4" height="4" fill="#00ff62"/><rect x="508" y="282" width="4" height="4" fill="#00ff5f"/><rect x="511" y="282" width="4" height="4" fill="#00ff5b"/><rect x="514" y="282" width="4" height="4" fill="#00ff56"/><rect x="517" y="282" width="4" height="4" fill="#00ff52"/><rect x="520" y="282" width="4" height="4" fill="#00ff4d"/><rect x="523" y="282" width="4" height="4" fill="#00ff47"/><rect x="526" y="282" width="4" height="4" fill="#38ff41"/><rect x="529" y="282" width="4" height="4" fill="#56ff39"/><rect x="532" y="282" width="4" height="4" fill="#6bff30"/><rect x="535" y="282" width="4" height="4" fill="#7dff23"/><rect x="538" y="282" width="4" height="4" fill="#8cff05"/><rect x="541" y="282" width="4" height="4" fill="#9bff00"/><rect x="544" y="282" width="4" height="4" fill="#a8ff00"/><rect x="547" y="282" width="4" height="4" fill="#b4ff00"/><rect x="550" y="282" width="4" height="4" fill="#c0ff00"/><rect x="553" y="282" width="4" height="4" fill="#cbff00"/><rect x="556" y="282" width="4" height="4" fill="#d6ff00"/><rect x="559" y="282" width="4" height="4" fill="#e1ff00"/><rect x="562" y="282" width="4" height="4" fill="#ebff00"/><rect x="565" y="282" width="4" height="4" fill="#f5ff00"/><rect x="448" y="285" width="4" height="4" fill="#00ff90"/><rect x="451" y="285" width="4" height="4" fill="#00ff8e"/><rect x="454" y="285" width="4" height="4" fill="#00ff8d"/><rect x="457" y="285" width="4" height="4" fill="#00ff8b"/><rect x="460" y="285" width="4" height="4" fill="#00ff8a"/><rect x="463" y="285" width="4" height="4" fill="#00ff88"/><rect x="466" y="285" width="4" height="4" fill="#00ff86"/><rect x="469" y="285" width="4" height="4" fill="#00ff85"/><rect x="472" y="285" width="4" height="4" fill="#00ff83"/><rect x="475" y="285" width="4" height="4" fill="#00ff81"/><rect x="478" y="285" width="4" height="4" fill="#00ff7f"/><rect x="481" y="285" width="4" height="4" fill="#00ff7d"/><rect x="484" y="285" width="4" height="4" fill="#00ff7b"/><rect x="487" y="285" width="4" height="4" fill="#00ff78"/><rect x="490" y="285" width="4" height="4" fill="#00ff76"/><rect x="493" y="285" width="4" height="4" fill="#00ff74"/><rect x="496" y="285" width="4" height="4" fill="#00ff71"/><rect x="499" y="285" width="4" height="4" fill="#00ff6e"/><rect x="502" y="285" width="4" height="4" fill="#00ff6b"/><rect x="505" y="285" width="4" height="4" fill="#00ff68"/><rect x="508" y="285" width="4" height="4" fill="#00ff65"/><rect x="511" y="285" width="4" height="4" fill="#00ff61"/><rect x="514" y="285" width="4" height="4" fill="#00ff5e"/><rect x="517" y="285" width="4" height="4" fill="#00ff59"/><rect x="520" y="285" width="4" height="4" fill="#00ff55"/><rect x="523" y="285" width="4" height="4" fill="#00ff50"/><rect x="526" y="285" width="4" height="4" fill="#43ff4a"/><rect x="529" y="285" width="4" height="4" fill="#5dff44"/><rect x="532" y="285" width="4" height="4" fill="#72ff3d"/><rect x="535" y="285" width="4" height="4" fill="#83ff34"/><rect x="538" y="285" width="4" height="4" fill="#92ff28"/><rect x="541" y="285" width="4" height="4" fill="#a0ff14"/><rect x="544" y="285" width="4" height="4" fill="#adff00"/><rect x="547" y="285" width="4" height="4" fill="#b9ff00"/><rect x="550" y="285" width="4" height="4" fill="#c5ff00"/><rect x="553" y="285" width="4" height="4" fill="#d1ff00"/><rect x="556" y="285" width="4" height="4" fill="#dcff00"/><rect x="559" y="285" width="4" height="4" fill="#e6ff00"/><rect x="562" y="285" width="4" height="4" fill="#f1ff00"/><rect x="565" y="285" width="4" height="4" fill="#fbff00"/><rect x="568" y="285" width="4" height="4" fill="#fff800"/><rect x="448" y="288" width="4" height="4" fill="#00ff93"/><rect x="451" y="288" width="4" height="4" fill="#00ff92"/><rect x="454" y="288" width="4" height="4" fill="#00ff91"/><rect x="457" y="288" width="4" height="4" fill="#00ff8f"/><rect x="460" y="288" width="4" height="4" fill="#00ff8e"/><rect x="463" y="288" width="4" height="4" fill="#00ff8c"/><rect x="466" y="288" width="4" height="4" fill="#00ff8b"/><rect x="469" y="288" width="4" height="4" fill="#00ff89"/><rect x="472" y="288" width="4" height="4" fill="#00ff87"/><rect x="475" y="288" width="4" height="4" fill="#00ff86"/><rect x="478" y="288" width="4" height="4" fill="#00ff84"/><rect x="481" y="288" width="4" height="4" fill="#00ff82"/><rect x="484" y="288" width="4" height="4" fill="#00ff80"/><rect x="487" y="288" width="4" height="4" fill="#00ff7e"/><rect x="490" y="288" width="4" height="4" fill="#00ff7b"/><rect x="493" y="288" width="4" height="4" fill="#00ff79"/><rect x="496" y="288" width="4" height="4" fill="#00ff76"/><rect x="499" y="288" width="4" height="4" fill="#00ff74"/><rect x="502" y="288" width="4" height="4" fill="#00ff71"/><rect x="505" y="288" width="4" height="4" fill="#00ff6e"/><rect x="508" y="288" width="4" height="4" fill="#00ff6b"/><rect x="511" y="288" width="4" height="4" fill="#00ff68"/><rect x="514" y="288" width="4" height="4" fill="#00ff64"/><rect x="517" y="288" width="4" height="4" fill="#00ff60"/><rect x="520" y="288" width="4" height="4" fill="#00ff5c"/><rect x="523" y="288" width="4" height="4" fill="#22ff58"/><rect x="526" y="288" width="4" height="4" fill="#4cff53"/><rect x="529" y="288" width="4" height="4" fill="#65ff4d"/><rect x="532" y="288" width="4" height="4" fill="#78ff47"/><rect x="535" y="288" width="4" height="4" fill="#89ff40"/><rect x="538" y="288" width="4" height="4" fill="#98ff38"/><rect x="541" y="288" width="4" height="4" fill="#a6ff2d"/><rect x="544" y="288" width="4" height="4" fill="#b3ff1c"/><rect x="547" y="288" width="4" height="4" fill="#bfff00"/><rect x="550" y="288" width="4" height="4" fill="#cbff00"/><rect x="553" y="288" width="4" height="4" fill="#d6ff00"/><rect x="556" y="288" width="4" height="4" fill="#e2ff00"/><rect x="559" y="288" width="4" height="4" fill="#ecff00"/><rect x="562" y="288" width="4" height="4" fill="#f7ff00"/><rect x="565" y="288" width="4" height="4" fill="#fffc00"/><rect x="568" y="288" width="4" height="4" fill="#fff200"/><rect x="571" y="288" width="4" height="4" fill="#ffe900"/><rect x="448" y="291" width="4" height="4" fill="#00ff97"/><rect x="451" y="291" width="4" height="4" fill="#00ff96"/><rect x="454" y="291" width="4" height="4" fill="#00ff95"/><rect x="457" y="291" width="4" height="4" fill="#00ff93"/><rect x="460" y="291" width="4" height="4" fill="#00ff92"/><rect x="463" y="291" width="4" height="4" fill="#00ff91"/><rect x="466" y="291" width="4" height="4" fill="#00ff8f"/><rect x="469" y="291" width="4" height="4" fill="#00ff8d"/><rect x="472" y="291" width="4" height="4" fill="#00ff8c"/><rect x="475" y="291" width="4" height="4" fill="#00ff8a"/><rect x="478" y="291" width="4" height="4" fill="#00ff88"/><rect x="481" y="291" width="4" height="4" fill="#00ff86"/><rect x="484" y="291" width="4" height="4" fill="#00ff85"/><rect x="487" y="291" width="4" height="4" fill="#00ff83"/><rect x="490" y="291" width="4" height="4" fill="#00ff80"/><rect x="493" y="291" width="4" height="4" fill="#00ff7e"/><rect x="496" y="291" width="4" height="4" fill="#00ff7c"/><rect x="499" y="291" width="4" height="4" fill="#00ff79"/><rect x="502" y="291" width="4" height="4" fill="#00ff77"/><rect x="505" y="291" width="4" height="4" fill="#00ff74"/><rect x="508" y="291" width="4" height="4" fill="#00ff71"/><rect x="511" y="291" width="4" height="4" fill="#00ff6e"/><rect x="514" y="291" width="4" height="4" fill="#00ff6b"/><rect x="517" y="291" width="4" height="4" fill="#00ff67"/><rect x="520" y="291" width="4" height="4" fill="#00ff64"/><rect x="523" y="291" width="4" height="4" fill="#33ff60"/><rect x="526" y="291" width="4" height="4" fill="#55ff5b"/><rect x="529" y="291" width="4" height="4" fill="#6cff56"/><rect x="532" y="291" width="4" height="4" fill="#7eff51"/><rect x="535" y="291" width="4" height="4" fill="#8fff4b"/><rect x="538" y="291" width="4" height="4" fill="#9eff44"/><rect x="541" y="291" width="4" height="4" fill="#abff3b"/><rect x="544" y="291" width="4" height="4" fill="#b8ff31"/><rect x="547" y="291" width="4" height="4" fill="#c5ff22"/><rect x="550" y="291" width="4" height="4" fill="#d1ff00"/><rect x="553" y="291" width="4" height="4" fill="#dcff00"/><rect x="556" y="291" width="4" height="4" fill="#e8ff00"/><rect x="559" y="291" width="4" height="4" fill="#f3ff00"/><rect x="562" y="291" width="4" height="4" fill="#feff00"/><rect x="565" y="291" width="4" height="4" fill="#fff600"/><rect x="568" y="291" width="4" height="4" fill="#ffec00"/><rect x="571" y="291" width="4" height="4" fill="#ffe400"/><rect x="574" y="291" width="4" height="4" fill="#ffdb00"/><rect x="448" y="294" width="4" height="4" fill="#00ff9b"/><rect x="451" y="294" width="4" height="4" fill="#00ff9a"/><rect x="454" y="294" width="4" height="4" fill="#00ff99"/><rect x="457" y="294" width="4" height="4" fill="#00ff98"/><rect x="460" y="294" width="4" height="4" fill="#00ff96"/><rect x="463" y="294" width="4" height="4" fill="#00ff95"/><rect x="466" y="294" width="4" height="4" fill="#00ff93"/><rect x="469" y="294" width="4" height="4" fill="#00ff92"/><rect x="472" y="294" width="4" height="4" fill="#00ff90"/><rect x="475" y="294" width="4" height="4" fill="#00ff8f"/><rect x="478" y="294" width="4" height="4" fill="#00ff8d"/><rect x="481" y="294" width="4" height="4" fill="#00ff8b"/><rect x="484" y="294" width="4" height="4" fill="#00ff89"/><rect x="487" y="294" width="4" height="4" fill="#00ff88"/><rect x="490" y="294" width="4" height="4" fill="#00ff86"/><rect x="493" y="294" width="4" height="4" fill="#00ff83"/><rect x="496" y="294" width="4" height="4" fill="#00ff81"/><rect x="499" y="294" width="4" height="4" fill="#00ff7f"/><rect x="502" y="294" width="4" height="4" fill="#00ff7d"/><rect x="505" y="294" width="4" height="4" fill="#00ff7a"/><rect x="508" y="294" width="4" height="4" fill="#00ff77"/><rect x="511" y="294" width="4" height="4" fill="#00ff74"/><rect x="514" y="294" width="4" height="4" fill="#00ff71"/><rect x="517" y="294" width="4" height="4" fill="#00ff6e"/><rect x="520" y="294" width="4" height="4" fill="#00ff6b"/><rect x="523" y="294" width="4" height="4" fill="#3fff67"/><rect x="526" y="294" width="4" height="4" fill="#5dff63"/><rect x="529" y="294" width="4" height="4" fill="#72ff5e"/><rect x="532" y="294" width="4" height="4" fill="#85ff5a"/><rect x="535" y="294" width="4" height="4" fill="#95ff54"/><rect x="538" y="294" width="4" height="4" fill="#a4ff4e"/><rect x="541" y="294" width="4" height="4" fill="#b1ff47"/><rect x="544" y="294" width="4" height="4" fill="#beff3f"/><rect x="547" y="294" width="4" height="4" fill="#cbff35"/><rect x="550" y="294" width="4" height="4" fill="#d7ff28"/><rect x="553" y="294" width="4" height="4" fill="#e3ff0b"/><rect x="556" y="294" width="4" height="4" fill="#eeff00"/><rect x="559" y="294" width="4" height="4" fill="#f9ff00"/><rect x="562" y="294" width="4" height="4" fill="#fffa00"/><rect x="565" y="294" width="4" height="4" fill="#fff000"/><rect x="568" y="294" width="4" height="4" fill="#ffe600"/><rect x="571" y="294" width="4" height="4" fill="#ffde00"/><rect x="574" y="294" width="4" height="4" fill="#ffd600"/><rect x="577" y="294" width="4" height="4" fill="#ffcf00"/><rect x="448" y="297" width="4" height="4" fill="#00ff9f"/><rect x="451" y="297" width="4" height="4" fill="#00ff9e"/><rect x="454" y="297" width="4" height="4" fill="#00ff9d"/><rect x="457" y="297" width="4" height="4" fill="#00ff9c"/><rect x="460" y="297" width="4" height="4" fill="#00ff9b"/><rect x="463" y="297" width="4" height="4" fill="#00ff99"/><rect x="466" y="297" width="4" height="4" fill="#00ff98"/><rect x="469" y="297" width="4" height="4" fill="#00ff96"/><rect x="472" y="297" width="4" height="4" fill="#00ff95"/><rect x="475" y="297" width="4" height="4" fill="#00ff93"/><rect x="478" y="297" width="4" height="4" fill="#00ff92"/><rect x="481" y="297" width="4" height="4" fill="#00ff90"/><rect x="484" y="297" width="4" height="4" fill="#00ff8e"/><rect x="487" y="297" width="4" height="4" fill="#00ff8d"/><rect x="490" y="297" width="4" height="4" fill="#00ff8b"/><rect x="493" y="297" width="4" height="4" fill="#00ff89"/><rect x="496" y="297" width="4" height="4" fill="#00ff87"/><rect x="499" y="297" width="4" height="4" fill="#00ff85"/><rect x="502" y="297" width="4" height="4" fill="#00ff82"/><rect x="505" y="297" width="4" height="4" fill="#00ff80"/><rect x="508" y="297" width="4" height="4" fill="#00ff7d"/><rect x="511" y="297" width="4" height="4" fill="#00ff7b"/><rect x="514" y="297" width="4" height="4" fill="#00ff78"/><rect x="517" y="297" width="4" height="4" fill="#00ff75"/><rect x="520" y="297" width="4" height="4" fill="#11ff71"/><rect x="523" y="297" width="4" height="4" fill="#49ff6e"/><rect x="526" y="297" width="4" height="4" fill="#64ff6a"/><rect x="529" y="297" width="4" height="4" fill="#79ff66"/><rect x="532" y="297" width="4" height="4" fill="#8bff62"/><rect x="535" y="297" width="4" height="4" fill="#9bff5d"/><rect x="538" y="297" width="4" height="4" fill="#aaff58"/><rect x="541" y="297" width="4" height="4" fill="#b7ff52"/><rect x="544" y="297" width="4" height="4" fill="#c4ff4b"/><rect x="547" y="297" width="4" height="4" fill="#d1ff43"/><rect x="550" y="297" width="4" height="4" fill="#ddff3a"/><rect x="553" y="297" width="4" height="4" fill="#e9ff2d"/><rect x="556" y="297" width="4" height="4" fill="#f5ff18"/><rect x="559" y="297" width="4" height="4" fill="#fffe00"/><rect x="562" y="297" width="4" height="4" fill="#fff300"/><rect x="565" y="297" width="4" height="4" fill="#ffea00"/><rect x="568" y="297" width="4" height="4" fill="#ffe100"/><rect x="571" y="297" width="4" height="4" fill="#ffd800"/><rect x="574" y="297" width="4" height="4" fill="#ffd100"/><rect x="577" y="297" width="4" height="4" fill="#ffc900"/><rect x="580" y="297" width="4" height="4" fill="#ffc300"/><rect x="448" y="300" width="4" height="4" fill="#00ffa4"/><rect x="451" y="300" width="4" height="4" fill="#00ffa2"/><rect x="454" y="300" width="4" height="4" fill="#00ffa1"/><rect x="457" y="300" width="4" height="4" fill="#00ffa0"/><rect x="460" y="300" width="4" height="4" fill="#00ff9f"/><rect x="463" y="300" width="4" height="4" fill="#00ff9e"/><rect x="466" y="300" width="4" height="4" fill="#00ff9c"/><rect x="469" y="300" width="4" height="4" fill="#00ff9b"/><rect x="472" y="300" width="4" height="4" fill="#00ff9a"/><rect x="475" y="300" width="4" height="4" fill="#00ff98"/><rect x="478" y="300" width="4" height="4" fill="#00ff97"/><rect x="481" y="300" width="4" height="4" fill="#00ff95"/><rect x="484" y="300" width="4" height="4" fill="#00ff93"/><rect x="487" y="300" width="4" height="4" fill="#00ff92"/><rect x="490" y="300" width="4" height="4" fill="#00ff90"/><rect x="493" y="300" width="4" height="4" fill="#00ff8e"/><rect x="496" y="300" width="4" height="4" fill="#00ff8c"/><rect x="499" y="300" width="4" height="4" fill="#00ff8a"/><rect x="502" y="300" width="4" height="4" fill="#00ff88"/><rect x="505" y="300" width="4" height="4" fill="#00ff86"/><rect x="508" y="300" width="4" height="4" fill="#00ff83"/><rect x="511" y="300" width="4" height="4" fill="#00ff81"/><rect x="514" y="300" width="4" height="4" fill="#00ff7e"/><rect x="517" y="300" width="4" height="4" fill="#00ff7b"/><rect x="520" y="300" width="4" height="4" fill="#2bff78"/><rect x="523" y="300" width="4" height="4" fill="#53ff75"/><rect x="526" y="300" width="4" height="4" fill="#6cff72"/><rect x="529" y="300" width="4" height="4" fill="#80ff6e"/><rect x="532" y="300" width="4" height="4" fill="#91ff6a"/><rect x="535" y="300" width="4" height="4" fill="#a1ff66"/><rect x="538" y="300" width="4" height="4" fill="#b0ff61"/><rect x="541" y="300" width="4" height="4" fill="#bdff5c"/><rect x="544" y="300" width="4" height="4" fill="#cbff56"/><rect x="547" y="300" width="4" height="4" fill="#d7ff4f"/><rect x="550" y="300" width="4" height="4" fill="#e4ff47"/><rect x="553" y="300" width="4" height="4" fill="#f0ff3e"/><rect x="556" y="300" width="4" height="4" fill="#fbff32"/><rect x="559" y="300" width="4" height="4" fill="#fff71f"/><rect x="562" y="300" width="4" height="4" fill="#ffed00"/><rect x="565" y="300" width="4" height="4" fill="#ffe300"/><rect x="568" y="300" width="4" height="4" fill="#ffdb00"/><rect x="571" y="300" width="4" height="4" fill="#ffd300"/><rect x="574" y="300" width="4" height="4" fill="#ffcb00"/><rect x="577" y="300" width="4" height="4" fill="#ffc400"/><rect x="580" y="300" width="4" height="4" fill="#ffbd00"/><rect x="583" y="300" width="4" height="4" fill="#ffb700"/><rect x="451" y="303" width="4" height="4" fill="#00ffa7"/><rect x="454" y="303" width="4" height="4" fill="#00ffa6"/><rect x="457" y="303" width="4" height="4" fill="#00ffa4"/><rect x="460" y="303" width="4" height="4" fill="#00ffa3"/><rect x="463" y="303" width="4" height="4" fill="#00ffa2"/><rect x="466" y="303" width="4" height="4" fill="#00ffa1"/><rect x="469" y="303" width="4" height="4" fill="#00ffa0"/><rect x="472" y="303" width="4" height="4" fill="#00ff9e"/><rect x="475" y="303" width="4" height="4" fill="#00ff9d"/><rect x="478" y="303" width="4" height="4" fill="#00ff9c"/><rect x="481" y="303" width="4" height="4" fill="#00ff9a"/><rect x="484" y="303" width="4" height="4" fill="#00ff98"/><rect x="487" y="303" width="4" height="4" fill="#00ff97"/><rect x="490" y="303" width="4" height="4" fill="#00ff95"/><rect x="493" y="303" width="4" height="4" fill="#00ff93"/><rect x="496" y="303" width="4" height="4" fill="#00ff92"/><rect x="499" y="303" width="4" height="4" fill="#00ff90"/><rect x="502" y="303" width="4" height="4" fill="#00ff8e"/><rect x="505" y="303" width="4" height="4" fill="#00ff8c"/><rect x="508" y="303" width="4" height="4" fill="#00ff89"/><rect x="511" y="303" width="4" height="4" fill="#00ff87"/><rect x="514" y="303" width="4" height="4" fill="#00ff84"/><rect x="517" y="303" width="4" height="4" fill="#00ff82"/><rect x="520" y="303" width="4" height="4" fill="#3aff7f"/><rect x="523" y="303" width="4" height="4" fill="#5cff7c"/><rect x="526" y="303" width="4" height="4" fill="#73ff79"/><rect x="529" y="303" width="4" height="4" fill="#87ff75"/><rect x="532" y="303" width="4" height="4" fill="#98ff72"/><rect x="535" y="303" width="4" height="4" fill="#a7ff6e"/><rect x="538" y="303" width="4" height="4" fill="#b6ff6a"/><rect x="541" y="303" width="4" height="4" fill="#c4ff65"/><rect x="544" y="303" width="4" height="4" fill="#d1ff60"/><rect x="547" y="303" width="4" height="4" fill="#deff5a"/><rect x="550" y="303" width="4" height="4" fill="#eaff53"/><rect x="553" y="303" width="4" height="4" fill="#f7ff4c"/><rect x="556" y="303" width="4" height="4" fill="#fffc42"/><rect x="559" y="303" width="4" height="4" fill="#fff134"/><rect x="562" y="303" width="4" height="4" fill="#ffe623"/><rect x="565" y="303" width="4" height="4" fill="#ffdd00"/><rect x="568" y="303" width="4" height="4" fill="#ffd500"/><rect x="571" y="303" width="4" height="4" fill="#ffcd00"/><rect x="574" y="303" width="4" height="4" fill="#ffc600"/><rect x="577" y="303" width="4" height="4" fill="#ffbf00"/><rect x="580" y="303" width="4" height="4" fill="#ffb800"/><rect x="583" y="303" width="4" height="4" fill="#ffb200"/><rect x="586" y="303" width="4" height="4" fill="#ffac00"/><rect x="451" y="306" width="4" height="4" fill="#00ffab"/><rect x="454" y="306" width="4" height="4" fill="#00ffaa"/><rect x="457" y="306" width="4" height="4" fill="#00ffa9"/><rect x="460" y="306" width="4" height="4" fill="#00ffa8"/><rect x="463" y="306" width="4" height="4" fill="#00ffa7"/><rect x="466" y="306" width="4" height="4" fill="#00ffa6"/><rect x="469" y="306" width="4" height="4" fill="#00ffa4"/><rect x="472" y="306" width="4" height="4" fill="#00ffa3"/><rect x="475" y="306" width="4" height="4" fill="#00ffa2"/><rect x="478" y="306" width="4" height="4" fill="#00ffa0"/><rect x="481" y="306" width="4" height="4" fill="#00ff9f"/><rect x="484" y="306" width="4" height="4" fill="#00ff9e"/><rect x="487" y="306" width="4" height="4" fill="#00ff9c"/><rect x="490" y="306" width="4" height="4" fill="#00ff9a"/><rect x="493" y="306" width="4" height="4" fill="#00ff99"/><rect x="496" y="306" width="4" height="4" fill="#00ff97"/><rect x="499" y="306" width="4" height="4" fill="#00ff95"/><rect x="502" y="306" width="4" height="4" fill="#00ff93"/><rect x="505" y="306" width="4" height="4" fill="#00ff91"/><rect x="508" y="306" width="4" height="4" fill="#00ff8f"/><rect x="511" y="306" width="4" height="4" fill="#00ff8d"/><rect x="514" y="306" width="4" height="4" fill="#00ff8b"/><rect x="517" y="306" width="4" height="4" fill="#00ff88"/><rect x="520" y="306" width="4" height="4" fill="#46ff86"/><rect x="523" y="306" width="4" height="4" fill="#64ff83"/><rect x="526" y="306" width="4" height="4" fill="#7bff80"/><rect x="529" y="306" width="4" height="4" fill="#8eff7d"/><rect x="532" y="306" width="4" height="4" fill="#9eff7a"/><rect x="535" y="306" width="4" height="4" fill="#aeff76"/><rect x="538" y="306" width="4" height="4" fill="#bdff72"/><rect x="541" y="306" width="4" height="4" fill="#caff6e"/><rect x="544" y="306" width="4" height="4" fill="#d8ff69"/><rect x="547" y="306" width="4" height="4" fill="#e5ff64"/><rect x="550" y="306" width="4" height="4" fill="#f1ff5e"/><rect x="553" y="306" width="4" height="4" fill="#feff58"/><rect x="556" y="306" width="4" height="4" fill="#fff44d"/><rect x="559" y="306" width="4" height="4" fill="#ffea42"/><rect x="562" y="306" width="4" height="4" fill="#ffe035"/><rect x="565" y="306" width="4" height="4" fill="#ffd727"/><rect x="568" y="306" width="4" height="4" fill="#ffcf0d"/><rect x="571" y="306" width="4" height="4" fill="#ffc700"/><rect x="574" y="306" width="4" height="4" fill="#ffc000"/><rect x="577" y="306" width="4" height="4" fill="#ffb900"/><rect x="580" y="306" width="4" height="4" fill="#ffb300"/><rect x="583" y="306" width="4" height="4" fill="#ffad00"/><rect x="586" y="306" width="4" height="4" fill="#ffa700"/><rect x="589" y="306" width="4" height="4" fill="#ffa200"/><rect x="451" y="309" width="4" height="4" fill="#00ffaf"/><rect x="454" y="309" width="4" height="4" fill="#00ffae"/><rect x="457" y="309" width="4" height="4" fill="#00ffad"/><rect x="460" y="309" width="4" height="4" fill="#00ffac"/><rect x="463" y="309" width="4" height="4" fill="#00ffab"/><rect x="466" y="309" width="4" height="4" fill="#00ffaa"/><rect x="469" y="309" width="4" height="4" fill="#00ffa9"/><rect x="472" y="309" width="4" height="4" fill="#00ffa8"/><rect x="475" y="309" width="4" height="4" fill="#00ffa7"/><rect x="478" y="309" width="4" height="4" fill="#00ffa5"/><rect x="481" y="309" width="4" height="4" fill="#00ffa4"/><rect x="484" y="309" width="4" height="4" fill="#00ffa3"/><rect x="487" y="309" width="4" height="4" fill="#00ffa1"/><rect x="490" y="309" width="4" height="4" fill="#00ffa0"/><rect x="493" y="309" width="4" height="4" fill="#00ff9e"/><rect x="496" y="309" width="4" height="4" fill="#00ff9d"/><rect x="499" y="309" width="4" height="4" fill="#00ff9b"/><rect x="502" y="309" width="4" height="4" fill="#00ff99"/><rect x="505" y="309" width="4" height="4" fill="#00ff97"/><rect x="508" y="309" width="4" height="4" fill="#00ff95"/><rect x="511" y="309" width="4" height="4" fill="#00ff93"/><rect x="514" y="309" width="4" height="4" fill="#00ff91"/><rect x="517" y="309" width="4" height="4" fill="#20ff8f"/><rect x="520" y="309" width="4" height="4" fill="#51ff8d"/><rect x="523" y="309" width="4" height="4" fill="#6cff8a"/><rect x="526" y="309" width="4" height="4" fill="#82ff87"/><rect x="529" y="309" width="4" height="4" fill="#94ff84"/><rect x="532" y="309" width="4" height="4" fill="#a5ff81"/><rect x="535" y="309" width="4" height="4" fill="#b5ff7e"/><rect x="538" y="309" width="4" height="4" fill="#c3ff7a"/><rect x="541" y="309" width="4" height="4" fill="#d1ff76"/><rect x="544" y="309" width="4" height="4" fill="#dfff72"/><rect x="547" y="309" width="4" height="4" fill="#ecff6e"/><rect x="550" y="309" width="4" height="4" fill="#f9ff69"/><rect x="553" y="309" width="4" height="4" fill="#fff960"/><rect x="556" y="309" width="4" height="4" fill="#ffed56"/><rect x="559" y="309" width="4" height="4" fill="#ffe34c"/><rect x="562" y="309" width="4" height="4" fill="#ffda41"/><rect x="565" y="309" width="4" height="4" fill="#ffd136"/><rect x="568" y="309" width="4" height="4" fill="#ffc929"/><rect x="571" y="309" width="4" height="4" fill="#ffc216"/><rect x="574" y="309" width="4" height="4" fill="#ffba00"/><rect x="577" y="309" width="4" height="4" fill="#ffb400"/><rect x="580" y="309" width="4" height="4" fill="#ffae00"/><rect x="583" y="309" width="4" height="4" fill="#ffa800"/><rect x="586" y="309" width="4" height="4" fill="#ffa200"/><rect x="589" y="309" width="4" height="4" fill="#ff9d00"/><rect x="592" y="309" width="4" height="4" fill="#ff9800"/><rect x="451" y="312" width="4" height="4" fill="#00ffb4"/><rect x="454" y="312" width="4" height="4" fill="#00ffb3"/><rect x="457" y="312" width="4" height="4" fill="#00ffb2"/><rect x="460" y="312" width="4" height="4" fill="#00ffb1"/><rect x="463" y="312" width="4" height="4" fill="#00ffb0"/><rect x="466" y="312" width="4" height="4" fill="#00ffaf"/><rect x="469" y="312" width="4" height="4" fill="#00ffae"/><rect x="472" y="312" width="4" height="4" fill="#00ffad"/><rect x="475" y="312" width="4" height="4" fill="#00ffac"/><rect x="478" y="312" width="4" height="4" fill="#00ffab"/><rect x="481" y="312" width="4" height="4" fill="#00ffa9"/><rect x="484" y="312" width="4" height="4" fill="#00ffa8"/><rect x="487" y="312" width="4" height="4" fill="#00ffa7"/><rect x="490" y="312" width="4" height="4" fill="#00ffa5"/><rect x="493" y="312" width="4" height="4" fill="#00ffa4"/><rect x="496" y="312" width="4" height="4" fill="#00ffa2"/><rect x="499" y="312" width="4" height="4" fill="#00ffa1"/><rect x="502" y="312" width="4" height="4" fill="#00ff9f"/><rect x="505" y="312" width="4" height="4" fill="#00ff9d"/><rect x="508" y="312" width="4" height="4" fill="#00ff9c"/><rect x="511" y="312" width="4" height="4" fill="#00ff9a"/><rect x="514" y="312" width="4" height="4" fill="#00ff98"/><rect x="517" y="312" width="4" height="4" fill="#34ff96"/><rect x="520" y="312" width="4" height="4" fill="#5bff93"/><rect x="523" y="312" width="4" height="4" fill="#74ff91"/><rect x="526" y="312" width="4" height="4" fill="#89ff8e"/><rect x="529" y="312" width="4" height="4" fill="#9bff8c"/><rect x="532" y="312" width="4" height="4" fill="#acff89"/><rect x="535" y="312" width="4" height="4" fill="#bcff86"/><rect x="538" y="312" width="4" height="4" fill="#caff83"/><rect x="541" y="312" width="4" height="4" fill="#d8ff7f"/><rect x="544" y="312" width="4" height="4" fill="#e6ff7b"/><rect x="547" y="312" width="4" height="4" fill="#f3ff77"/><rect x="550" y="312" width="4" height="4" fill="#fffe72"/><rect x="553" y="312" width="4" height="4" fill="#fff168"/><rect x="556" y="312" width="4" height="4" fill="#ffe65e"/><rect x="559" y="312" width="4" height="4" fill="#ffdd54"/><rect x="562" y="312" width="4" height="4" fill="#ffd34b"/><rect x="565" y="312" width="4" height="4" fill="#ffcb41"/><rect x="568" y="312" width="4" height="4" fill="#ffc337"/><rect x="571" y="312" width="4" height="4" fill="#ffbc2b"/><rect x="574" y="312" width="4" height="4" fill="#ffb51b"/><rect x="577" y="312" width="4" height="4" fill="#ffae00"/><rect x="580" y="312" width="4" height="4" fill="#ffa800"/><rect x="583" y="312" width="4" height="4" fill="#ffa200"/><rect x="586" y="312" width="4" height="4" fill="#ff9d00"/><rect x="589" y="312" width="4" height="4" fill="#ff9800"/><rect x="592" y="312" width="4" height="4" fill="#ff9200"/><rect x="595" y="312" width="4" height="4" fill="#ff8e00"/><rect x="451" y="315" width="4" height="4" fill="#00ffb8"/><rect x="454" y="315" width="7" height="4" fill="#00ffb7"/><rect x="460" y="315" width="4" height="4" fill="#00ffb6"/><rect x="463" y="315" width="4" height="4" fill="#00ffb5"/><rect x="466" y="315" width="4" height="4" fill="#00ffb4"/><rect x="469" y="315" width="4" height="4" fill="#00ffb3"/><rect x="472" y="315" width="4" height="4" fill="#00ffb2"/><rect x="475" y="315" width="4" height="4" fill="#00ffb1"/><rect x="478" y="315" width="4" height="4" fill="#00ffb0"/><rect x="481" y="315" width="4" height="4" fill="#00ffaf"/><rect x="484" y="315" width="4" height="4" fill="#00ffad"/><rect x="487" y="315" width="4" height="4" fill="#00ffac"/><rect x="490" y="315" width="4" height="4" fill="#00ffab"/><rect x="493" y="315" width="4" height="4" fill="#00ffaa"/><rect x="496" y="315" width="4" height="4" fill="#00ffa8"/><rect x="499" y="315" width="4" height="4" fill="#00ffa7"/><rect x="502" y="315" width="4" height="4" fill="#00ffa5"/><rect x="505" y="315" width="4" height="4" fill="#00ffa4"/><rect x="508" y="315" width="4" height="4" fill="#00ffa2"/><rect x="511" y="315" width="4" height="4" fill="#00ffa0"/><rect x="514" y="315" width="4" height="4" fill="#00ff9e"/><rect x="517" y="315" width="4" height="4" fill="#42ff9c"/><rect x="520" y="315" width="4" height="4" fill="#64ff9a"/><rect x="523" y="315" width="4" height="4" fill="#7cff98"/><rect x="526" y="315" width="4" height="4" fill="#90ff96"/><rect x="529" y="315" width="4" height="4" fill="#a3ff93"/><rect x="532" y="315" width="4" height="4" fill="#b3ff91"/><rect x="535" y="315" width="4" height="4" fill="#c3ff8e"/><rect x="538" y="315" width="4" height="4" fill="#d2ff8b"/><rect x="541" y="315" width="4" height="4" fill="#e0ff88"/><rect x="544" y="315" width="4" height="4" fill="#eeff84"/><rect x="547" y="315" width="4" height="4" fill="#fbff80"/><rect x="550" y="315" width="4" height="4" fill="#fff678"/><rect x="553" y="315" width="4" height="4" fill="#ffea6e"/><rect x="556" y="315" width="4" height="4" fill="#ffe065"/><rect x="559" y="315" width="4" height="4" fill="#ffd65c"/><rect x="562" y="315" width="4" height="4" fill="#ffcd53"/><rect x="565" y="315" width="4" height="4" fill="#ffc54a"/><rect x="568" y="315" width="4" height="4" fill="#ffbd41"/><rect x="571" y="315" width="4" height="4" fill="#ffb637"/><rect x="574" y="315" width="4" height="4" fill="#ffaf2d"/><rect x="577" y="315" width="4" height="4" fill="#ffa91f"/><rect x="580" y="315" width="4" height="4" fill="#ffa300"/><rect x="583" y="315" width="4" height="4" fill="#ff9d00"/><rect x="586" y="315" width="4" height="4" fill="#ff9800"/><rect x="589" y="315" width="4" height="4" fill="#ff9200"/><rect x="592" y="315" width="4" height="4" fill="#ff8d00"/><rect x="595" y="315" width="4" height="4" fill="#ff8800"/><rect x="598" y="315" width="4" height="4" fill="#ff8400"/><rect x="451" y="318" width="4" height="4" fill="#00ffbd"/><rect x="454" y="318" width="4" height="4" fill="#00ffbc"/><rect x="457" y="318" width="4" height="4" fill="#00ffbb"/><rect x="460" y="318" width="7" height="4" fill="#00ffba"/><rect x="466" y="318" width="4" height="4" fill="#00ffb9"/><rect x="469" y="318" width="4" height="4" fill="#00ffb8"/><rect x="472" y="318" width="4" height="4" fill="#00ffb7"/><rect x="475" y="318" width="4" height="4" fill="#00ffb6"/><rect x="478" y="318" width="4" height="4" fill="#00ffb5"/><rect x="481" y="318" width="4" height="4" fill="#00ffb4"/><rect x="484" y="318" width="4" height="4" fill="#00ffb3"/><rect x="487" y="318" width="4" height="4" fill="#00ffb2"/><rect x="490" y="318" width="4" height="4" fill="#00ffb1"/><rect x="493" y="318" width="4" height="4" fill="#00ffaf"/><rect x="496" y="318" width="4" height="4" fill="#00ffae"/><rect x="499" y="318" width="4" height="4" fill="#00ffad"/><rect x="502" y="318" width="4" height="4" fill="#00ffab"/><rect x="505" y="318" width="4" height="4" fill="#00ffaa"/><rect x="508" y="318" width="4" height="4" fill="#00ffa8"/><rect x="511" y="318" width="4" height="4" fill="#00ffa7"/><rect x="514" y="318" width="4" height="4" fill="#00ffa5"/><rect x="517" y="318" width="4" height="4" fill="#4effa3"/><rect x="520" y="318" width="4" height="4" fill="#6dffa1"/><rect x="523" y="318" width="4" height="4" fill="#84ff9f"/><rect x="526" y="318" width="4" height="4" fill="#98ff9d"/><rect x="529" y="318" width="4" height="4" fill="#aaff9b"/><rect x="532" y="318" width="4" height="4" fill="#baff99"/><rect x="535" y="318" width="4" height="4" fill="#caff96"/><rect x="538" y="318" width="4" height="4" fill="#d9ff93"/><rect x="541" y="318" width="4" height="4" fill="#e7ff90"/><rect x="544" y="318" width="4" height="4" fill="#f6ff8d"/><rect x="547" y="318" width="4" height="4" fill="#fffb87"/><rect x="550" y="318" width="4" height="4" fill="#ffee7d"/><rect x="553" y="318" width="4" height="4" fill="#ffe374"/><rect x="556" y="318" width="4" height="4" fill="#ffd96b"/><rect x="559" y="318" width="4" height="4" fill="#ffcf62"/><rect x="562" y="318" width="4" height="4" fill="#ffc75a"/><rect x="565" y="318" width="4" height="4" fill="#ffbf52"/><rect x="568" y="318" width="4" height="4" fill="#ffb749"/><rect x="571" y="318" width="4" height="4" fill="#ffb041"/><rect x="574" y="318" width="4" height="4" fill="#ffaa38"/><rect x="577" y="318" width="4" height="4" fill="#ffa32e"/><rect x="580" y="318" width="4" height="4" fill="#ff9d22"/><rect x="583" y="318" width="4" height="4" fill="#ff980d"/><rect x="586" y="318" width="4" height="4" fill="#ff9200"/><rect x="589" y="318" width="4" height="4" fill="#ff8d00"/><rect x="592" y="318" width="4" height="4" fill="#ff8800"/><rect x="595" y="318" width="4" height="4" fill="#ff8300"/><rect x="598" y="318" width="4" height="4" fill="#ff7f00"/><rect x="601" y="318" width="4" height="4" fill="#ff7a00"/><rect x="451" y="321" width="4" height="4" fill="#00ffc2"/><rect x="454" y="321" width="4" height="4" fill="#00ffc1"/><rect x="457" y="321" width="4" height="4" fill="#00ffc0"/><rect x="460" y="321" width="7" height="4" fill="#00ffbf"/><rect x="466" y="321" width="4" height="4" fill="#00ffbe"/><rect x="469" y="321" width="4" height="4" fill="#00ffbd"/><rect x="472" y="321" width="4" height="4" fill="#00ffbc"/><rect x="475" y="321" width="4" height="4" fill="#00ffbb"/><rect x="478" y="321" width="7" height="4" fill="#00ffba"/><rect x="484" y="321" width="4" height="4" fill="#00ffb9"/><rect x="487" y="321" width="4" height="4" fill="#00ffb8"/><rect x="490" y="321" width="4" height="4" fill="#00ffb6"/><rect x="493" y="321" width="4" height="4" fill="#00ffb5"/><rect x="496" y="321" width="4" height="4" fill="#00ffb4"/><rect x="499" y="321" width="4" height="4" fill="#00ffb3"/><rect x="502" y="321" width="4" height="4" fill="#00ffb2"/><rect x="505" y="321" width="4" height="4" fill="#00ffb0"/><rect x="508" y="321" width="4" height="4" fill="#00ffaf"/><rect x="511" y="321" width="4" height="4" fill="#00ffad"/><rect x="514" y="321" width="4" height="4" fill="#2cffac"/><rect x="517" y="321" width="4" height="4" fill="#59ffaa"/><rect x="520" y="321" width="4" height="4" fill="#75ffa9"/><rect x="523" y="321" width="4" height="4" fill="#8cffa7"/><rect x="526" y="321" width="4" height="4" fill="#a0ffa5"/><rect x="529" y="321" width="4" height="4" fill="#b1ffa3"/><rect x="532" y="321" width="4" height="4" fill="#c2ffa1"/><rect x="535" y="321" width="4" height="4" fill="#d2ff9e"/><rect x="538" y="321" width="4" height="4" fill="#e1ff9c"/><rect x="541" y="321" width="4" height="4" fill="#f0ff99"/><rect x="544" y="321" width="4" height="4" fill="#feff96"/><rect x="547" y="321" width="4" height="4" fill="#fff38c"/><rect x="550" y="321" width="4" height="4" fill="#ffe682"/><rect x="553" y="321" width="4" height="4" fill="#ffdc79"/><rect x="556" y="321" width="4" height="4" fill="#ffd270"/><rect x="559" y="321" width="4" height="4" fill="#ffc968"/><rect x="562" y="321" width="4" height="4" fill="#ffc060"/><rect x="565" y="321" width="4" height="4" fill="#ffb858"/><rect x="568" y="321" width="4" height="4" fill="#ffb150"/><rect x="571" y="321" width="4" height="4" fill="#ffaa49"/><rect x="574" y="321" width="4" height="4" fill="#ffa441"/><rect x="577" y="321" width="4" height="4" fill="#ff9e38"/><rect x="580" y="321" width="4" height="4" fill="#ff982f"/><rect x="583" y="321" width="4" height="4" fill="#ff9224"/><rect x="586" y="321" width="4" height="4" fill="#ff8d14"/><rect x="589" y="321" width="4" height="4" fill="#ff8800"/><rect x="592" y="321" width="4" height="4" fill="#ff8300"/><rect x="595" y="321" width="4" height="4" fill="#ff7e00"/><rect x="598" y="321" width="4" height="4" fill="#ff7900"/><rect x="601" y="321" width="4" height="4" fill="#ff7500"/><rect x="604" y="321" width="4" height="4" fill="#ff7000"/><rect x="451" y="324" width="7" height="4" fill="#00ffc6"/><rect x="457" y="324" width="4" height="4" fill="#00ffc5"/><rect x="460" y="324" width="7" height="4" fill="#00ffc4"/><rect x="466" y="324" width="4" height="4" fill="#00ffc3"/><rect x="469" y="324" width="7" height="4" fill="#00ffc2"/><rect x="475" y="324" width="4" height="4" fill="#00ffc1"/><rect x="478" y="324" width="4" height="4" fill="#00ffc0"/><rect x="481" y="324" width="4" height="4" fill="#00ffbf"/><rect x="484" y="324" width="4" height="4" fill="#00ffbe"/><rect x="487" y="324" width="4" height="4" fill="#00ffbd"/><rect x="490" y="324" width="4" height="4" fill="#00ffbc"/><rect x="493" y="324" width="4" height="4" fill="#00ffbb"/><rect x="496" y="324" width="4" height="4" fill="#00ffba"/><rect x="499" y="324" width="4" height="4" fill="#00ffb9"/><rect x="502" y="324" width="4" height="4" fill="#00ffb8"/><rect x="505" y="324" width="4" height="4" fill="#00ffb7"/><rect x="508" y="324" width="4" height="4" fill="#00ffb6"/><rect x="511" y="324" width="4" height="4" fill="#00ffb4"/><rect x="514" y="324" width="4" height="4" fill="#3dffb3"/><rect x="517" y="324" width="4" height="4" fill="#63ffb2"/><rect x="520" y="324" width="4" height="4" fill="#7effb0"/><rect x="523" y="324" width="4" height="4" fill="#94ffae"/><rect x="526" y="324" width="4" height="4" fill="#a7ffad"/><rect x="529" y="324" width="4" height="4" fill="#b9ffab"/><rect x="532" y="324" width="4" height="4" fill="#caffa9"/><rect x="535" y="324" width="4" height="4" fill="#daffa7"/><rect x="538" y="324" width="4" height="4" fill="#e9ffa5"/><rect x="541" y="324" width="4" height="4" fill="#f8ffa2"/><rect x="544" y="324" width="4" height="4" fill="#fff79b"/><rect x="547" y="324" width="4" height="4" fill="#ffea90"/><rect x="550" y="324" width="4" height="4" fill="#ffdf87"/><rect x="553" y="324" width="4" height="4" fill="#ffd47e"/><rect x="556" y="324" width="4" height="4" fill="#ffcb75"/><rect x="559" y="324" width="4" height="4" fill="#ffc26d"/><rect x="562" y="324" width="4" height="4" fill="#ffba65"/><rect x="565" y="324" width="4" height="4" fill="#ffb25e"/><rect x="568" y="324" width="4" height="4" fill="#ffab57"/><rect x="571" y="324" width="4" height="4" fill="#ffa44f"/><rect x="574" y="324" width="4" height="4" fill="#ff9e48"/><rect x="577" y="324" width="4" height="4" fill="#ff9841"/><rect x="580" y="324" width="4" height="4" fill="#ff9239"/><rect x="583" y="324" width="4" height="4" fill="#ff8d30"/><rect x="586" y="324" width="4" height="4" fill="#ff8726"/><rect x="589" y="324" width="4" height="4" fill="#ff8219"/><rect x="592" y="324" width="4" height="4" fill="#ff7d00"/><rect x="595" y="324" width="4" height="4" fill="#ff7800"/><rect x="598" y="324" width="4" height="4" fill="#ff7400"/><rect x="601" y="324" width="4" height="4" fill="#ff6f00"/><rect x="604" y="324" width="4" height="4" fill="#ff6a00"/><rect x="607" y="324" width="4" height="4" fill="#ff6600"/><rect x="454" y="327" width="4" height="4" fill="#00ffcb"/><rect x="457" y="327" width="7" height="4" fill="#00ffca"/><rect x="463" y="327" width="4" height="4" fill="#00ffc9"/><rect x="466" y="327" width="7" height="4" fill="#00ffc8"/><rect x="472" y="327" width="4" height="4" fill="#00ffc7"/><rect x="475" y="327" width="7" height="4" fill="#00ffc6"/><rect x="481" y="327" width="4" height="4" fill="#00ffc5"/><rect x="484" y="327" width="4" height="4" fill="#00ffc4"/><rect x="487" y="327" width="7" height="4" fill="#00ffc3"/><rect x="493" y="327" width="4" height="4" fill="#00ffc2"/><rect x="496" y="327" width="4" height="4" fill="#00ffc1"/><rect x="499" y="327" width="4" height="4" fill="#00ffc0"/><rect x="502" y="327" width="4" height="4" fill="#00ffbf"/><rect x="505" y="327" width="4" height="4" fill="#00ffbe"/><rect x="508" y="327" width="4" height="4" fill="#00ffbd"/><rect x="511" y="327" width="4" height="4" fill="#00ffbc"/><rect x="514" y="327" width="4" height="4" fill="#4bffba"/><rect x="517" y="327" width="4" height="4" fill="#6dffb9"/><rect x="520" y="327" width="4" height="4" fill="#87ffb8"/><rect x="523" y="327" width="4" height="4" fill="#9cffb6"/><rect x="526" y="327" width="4" height="4" fill="#afffb5"/><rect x="529" y="327" width="4" height="4" fill="#c1ffb3"/><rect x="532" y="327" width="4" height="4" fill="#d2ffb1"/><rect x="535" y="327" width="4" height="4" fill="#e2ffb0"/><rect x="538" y="327" width="4" height="4" fill="#f2ffae"/><rect x="541" y="327" width="4" height="4" fill="#fffdaa"/><rect x="544" y="327" width="4" height="4" fill="#ffef9f"/><rect x="547" y="327" width="4" height="4" fill="#ffe294"/><rect x="550" y="327" width="4" height="4" fill="#ffd78b"/><rect x="553" y="327" width="4" height="4" fill="#ffcd82"/><rect x="556" y="327" width="4" height="4" fill="#ffc47a"/><rect x="559" y="327" width="4" height="4" fill="#ffbb72"/><rect x="562" y="327" width="4" height="4" fill="#ffb36a"/><rect x="565" y="327" width="4" height="4" fill="#ffac63"/><rect x="568" y="327" width="4" height="4" fill="#ffa55c"/><rect x="571" y="327" width="4" height="4" fill="#ff9e55"/><rect x="574" y="327" width="4" height="4" fill="#ff984f"/><rect x="577" y="327" width="4" height="4" fill="#ff9248"/><rect x="580" y="327" width="4" height="4" fill="#ff8c41"/><rect x="583" y="327" width="4" height="4" fill="#ff8739"/><rect x="586" y="327" width="4" height="4" fill="#ff8231"/><rect x="589" y="327" width="4" height="4" fill="#ff7c28"/><rect x="592" y="327" width="4" height="4" fill="#ff771c"/><rect x="595" y="327" width="4" height="4" fill="#ff7300"/><rect x="598" y="327" width="4" height="4" fill="#ff6e00"/><rect x="601" y="327" width="4" height="4" fill="#ff6900"/><rect x="604" y="327" width="4" height="4" fill="#ff6400"/><rect x="607" y="327" width="4" height="4" fill="#ff6000"/><rect x="610" y="327" width="4" height="4" fill="#ff5b00"/><rect x="454" y="330" width="4" height="4" fill="#00ffd0"/><rect x="457" y="330" width="7" height="4" fill="#00ffcf"/><rect x="463" y="330" width="7" height="4" fill="#00ffce"/><rect x="469" y="330" width="7" height="4" fill="#00ffcd"/><rect x="475" y="330" width="7" height="4" fill="#00ffcc"/><rect x="481" y="330" width="4" height="4" fill="#00ffcb"/><rect x="484" y="330" width="7" height="4" fill="#00ffca"/><rect x="490" y="330" width="4" height="4" fill="#00ffc9"/><rect x="493" y="330" width="4" height="4" fill="#00ffc8"/><rect x="496" y="330" width="7" height="4" fill="#00ffc7"/><rect x="502" y="330" width="4" height="4" fill="#00ffc6"/><rect x="505" y="330" width="4" height="4" fill="#00ffc5"/><rect x="508" y="330" width="4" height="4" fill="#00ffc4"/><rect x="511" y="330" width="4" height="4" fill="#1effc3"/><rect x="514" y="330" width="4" height="4" fill="#58ffc2"/><rect x="517" y="330" width="4" height="4" fill="#77ffc1"/><rect x="520" y="330" width="4" height="4" fill="#8fffc0"/><rect x="523" y="330" width="4" height="4" fill="#a4ffbe"/><rect x="526" y="330" width="4" height="4" fill="#b8ffbd"/><rect x="529" y="330" width="4" height="4" fill="#caffbc"/><rect x="532" y="330" width="4" height="4" fill="#dbffba"/><rect x="535" y="330" width="4" height="4" fill="#ebffb9"/><rect x="538" y="330" width="4" height="4" fill="#fbffb7"/><rect x="541" y="330" width="4" height="4" fill="#fff4ad"/><rect x="544" y="330" width="4" height="4" fill="#ffe6a2"/><rect x="547" y="330" width="4" height="4" fill="#ffdb98"/><rect x="550" y="330" width="4" height="4" fill="#ffd08e"/><rect x="553" y="330" width="4" height="4" fill="#ffc686"/><rect x="556" y="330" width="4" height="4" fill="#ffbd7e"/><rect x="559" y="330" width="4" height="4" fill="#ffb576"/><rect x="562" y="330" width="4" height="4" fill="#ffad6f"/><rect x="565" y="330" width="4" height="4" fill="#ffa668"/><rect x="568" y="330" width="4" height="4" fill="#ff9f61"/><rect x="571" y="330" width="4" height="4" fill="#ff985b"/><rect x="574" y="330" width="4" height="4" fill="#ff9254"/><rect x="577" y="330" width="4" height="4" fill="#ff8c4e"/><rect x="580" y="330" width="4" height="4" fill="#ff8647"/><rect x="583" y="330" width="4" height="4" fill="#ff8140"/><rect x="586" y="330" width="4" height="4" fill="#ff7c39"/><rect x="589" y="330" width="4" height="4" fill="#ff7632"/><rect x="592" y="330" width="4" height="4" fill="#ff7129"/><rect x="595" y="330" width="4" height="4" fill="#ff6d1f"/><rect x="598" y="330" width="4" height="4" fill="#ff680d"/><rect x="601" y="330" width="4" height="4" fill="#ff6300"/><rect x="604" y="330" width="4" height="4" fill="#ff5e00"/><rect x="607" y="330" width="4" height="4" fill="#ff5a00"/><rect x="610" y="330" width="4" height="4" fill="#ff5500"/><rect x="613" y="330" width="4" height="4" fill="#ff5000"/><rect x="454" y="333" width="7" height="4" fill="#00ffd5"/><rect x="460" y="333" width="10" height="4" fill="#00ffd4"/><rect x="469" y="333" width="7" height="4" fill="#00ffd3"/><rect x="475" y="333" width="7" height="4" fill="#00ffd2"/><rect x="481" y="333" width="7" height="4" fill="#00ffd1"/><rect x="487" y="333" width="4" height="4" fill="#00ffd0"/><rect x="490" y="333" width="7" height="4" fill="#00ffcf"/><rect x="496" y="333" width="7" height="4" fill="#00ffce"/><rect x="502" y="333" width="4" height="4" fill="#00ffcd"/><rect x="505" y="333" width="4" height="4" fill="#00ffcc"/><rect x="508" y="333" width="4" height="4" fill="#00ffcb"/><rect x="511" y="333" width="4" height="4" fill="#37ffcb"/><rect x="514" y="333" width="4" height="4" fill="#63ffca"/><rect x="517" y="333" width="4" height="4" fill="#80ffc9"/><rect x="520" y="333" width="4" height="4" fill="#98ffc8"/><rect x="523" y="333" width="4" height="4" fill="#adffc7"/><rect x="526" y="333" width="4" height="4" fill="#c0ffc6"/><rect x="529" y="333" width="4" height="4" fill="#d2ffc5"/><rect x="532" y="333" width="4" height="4" fill="#e4ffc3"/><rect x="535" y="333" width="4" height="4" fill="#f4ffc2"/><rect x="538" y="333" width="4" height="4" fill="#fff9bc"/><rect x="541" y="333" width="4" height="4" fill="#ffebb0"/><rect x="544" y="333" width="4" height="4" fill="#ffdea5"/><rect x="547" y="333" width="4" height="4" fill="#ffd39b"/><rect x="550" y="333" width="4" height="4" fill="#ffc892"/><rect x="553" y="333" width="4" height="4" fill="#ffbf8a"/><rect x="556" y="333" width="4" height="4" fill="#ffb682"/><rect x="559" y="333" width="4" height="4" fill="#ffae7a"/><rect x="562" y="333" width="4" height="4" fill="#ffa673"/><rect x="565" y="333" width="4" height="4" fill="#ff9f6c"/><rect x="568" y="333" width="4" height="4" fill="#ff9866"/><rect x="571" y="333" width="4" height="4" fill="#ff9260"/><rect x="574" y="333" width="4" height="4" fill="#ff8c59"/><rect x="577" y="333" width="4" height="4" fill="#ff8653"/><rect x="580" y="333" width="4" height="4" fill="#ff804d"/><rect x="583" y="333" width="4" height="4" fill="#ff7b47"/><rect x="586" y="333" width="4" height="4" fill="#ff7540"/><rect x="589" y="333" width="4" height="4" fill="#ff703a"/><rect x="592" y="333" width="4" height="4" fill="#ff6b33"/><rect x="595" y="333" width="4" height="4" fill="#ff662b"/><rect x="598" y="333" width="4" height="4" fill="#ff6121"/><rect x="601" y="333" width="4" height="4" fill="#ff5c13"/><rect x="604" y="333" width="4" height="4" fill="#ff5800"/><rect x="607" y="333" width="4" height="4" fill="#ff5300"/><rect x="610" y="333" width="4" height="4" fill="#ff4e00"/><rect x="613" y="333" width="4" height="4" fill="#ff4900"/><rect x="616" y="333" width="4" height="4" fill="#ff4400"/><rect x="454" y="336" width="4" height="4" fill="#00ffdb"/><rect x="457" y="336" width="10" height="4" fill="#00ffda"/><rect x="466" y="336" width="10" height="4" fill="#00ffd9"/><rect x="475" y="336" width="10" height="4" fill="#00ffd8"/><rect x="484" y="336" width="7" height="4" fill="#00ffd7"/><rect x="490" y="336" width="7" height="4" fill="#00ffd6"/><rect x="496" y="336" width="7" height="4" fill="#00ffd5"/><rect x="502" y="336" width="7" height="4" fill="#00ffd4"/><rect x="508" y="336" width="4" height="4" fill="#00ffd3"/><rect x="511" y="336" width="4" height="4" fill="#47ffd2"/><rect x="514" y="336" width="4" height="4" fill="#6effd2"/><rect x="517" y="336" width="4" height="4" fill="#8affd1"/><rect x="520" y="336" width="4" height="4" fill="#a1ffd0"/><rect x="523" y="336" width="4" height="4" fill="#b6ffd0"/><rect x="526" y="336" width="4" height="4" fill="#c9ffcf"/><rect x="529" y="336" width="4" height="4" fill="#dcffce"/><rect x="532" y="336" width="4" height="4" fill="#edffcd"/><rect x="535" y="336" width="4" height="4" fill="#feffcc"/><rect x="538" y="336" width="4" height="4" fill="#fff0bf"/><rect x="541" y="336" width="4" height="4" fill="#ffe2b3"/><rect x="544" y="336" width="4" height="4" fill="#ffd6a8"/><rect x="547" y="336" width="4" height="4" fill="#ffcb9e"/><rect x="550" y="336" width="4" height="4" fill="#ffc195"/><rect x="553" y="336" width="4" height="4" fill="#ffb78d"/><rect x="556" y="336" width="4" height="4" fill="#ffaf85"/><rect x="559" y="336" width="4" height="4" fill="#ffa77e"/><rect x="562" y="336" width="4" height="4" fill="#ff9f77"/><rect x="565" y="336" width="4" height="4" fill="#ff9871"/><rect x="568" y="336" width="4" height="4" fill="#ff926a"/><rect x="571" y="336" width="4" height="4" fill="#ff8b64"/><rect x="574" y="336" width="4" height="4" fill="#ff855e"/><rect x="577" y="336" width="4" height="4" fill="#ff8058"/><rect x="580" y="336" width="4" height="4" fill="#ff7a52"/><rect x="583" y="336" width="4" height="4" fill="#ff744c"/><rect x="586" y="336" width="4" height="4" fill="#ff6f46"/><rect x="589" y="336" width="4" height="4" fill="#ff6a40"/><rect x="592" y="336" width="4" height="4" fill="#ff653a"/><rect x="595" y="336" width="4" height="4" fill="#ff6033"/><rect x="598" y="336" width="4" height="4" fill="#ff5b2c"/><rect x="601" y="336" width="4" height="4" fill="#ff5623"/><rect x="604" y="336" width="4" height="4" fill="#ff5017"/><rect x="607" y="336" width="4" height="4" fill="#ff4b00"/><rect x="610" y="336" width="4" height="4" fill="#ff4600"/><rect x="613" y="336" width="4" height="4" fill="#ff4100"/><rect x="616" y="336" width="4" height="4" fill="#ff3b00"/><rect x="619" y="336" width="4" height="4" fill="#ff3500"/><rect x="454" y="339" width="13" height="4" fill="#00ffe0"/><rect x="466" y="339" width="13" height="4" fill="#00ffdf"/><rect x="478" y="339" width="13" height="4" fill="#00ffde"/><rect x="490" y="339" width="10" height="4" fill="#00ffdd"/><rect x="499" y="339" width="10" height="4" fill="#00ffdc"/><rect x="508" y="339" width="4" height="4" fill="#00ffdb"/><rect x="511" y="339" width="4" height="4" fill="#56ffdb"/><rect x="514" y="339" width="4" height="4" fill="#78ffda"/><rect x="517" y="339" width="4" height="4" fill="#93ffda"/><rect x="520" y="339" width="4" height="4" fill="#aaffd9"/><rect x="523" y="339" width="4" height="4" fill="#bfffd9"/><rect x="526" y="339" width="4" height="4" fill="#d3ffd8"/><rect x="529" y="339" width="4" height="4" fill="#e5ffd8"/><rect x="532" y="339" width="4" height="4" fill="#f7ffd7"/><rect x="535" y="339" width="4" height="4" fill="#fff6ce"/><rect x="538" y="339" width="4" height="4" fill="#ffe6c1"/><rect x="541" y="339" width="4" height="4" fill="#ffd9b5"/><rect x="544" y="339" width="4" height="4" fill="#ffcdab"/><rect x="547" y="339" width="4" height="4" fill="#ffc3a1"/><rect x="550" y="339" width="4" height="4" fill="#ffb998"/><rect x="553" y="339" width="4" height="4" fill="#ffb090"/><rect x="556" y="339" width="4" height="4" fill="#ffa889"/><rect x="559" y="339" width="4" height="4" fill="#ffa082"/><rect x="562" y="339" width="4" height="4" fill="#ff997b"/><rect x="565" y="339" width="4" height="4" fill="#ff9274"/><rect x="568" y="339" width="4" height="4" fill="#ff8b6e"/><rect x="571" y="339" width="4" height="4" fill="#ff8568"/><rect x="574" y="339" width="4" height="4" fill="#ff7f62"/><rect x="577" y="339" width="4" height="4" fill="#ff795d"/><rect x="580" y="339" width="4" height="4" fill="#ff7357"/><rect x="583" y="339" width="4" height="4" fill="#ff6e51"/><rect x="586" y="339" width="4" height="4" fill="#ff684c"/><rect x="589" y="339" width="4" height="4" fill="#ff6346"/><rect x="592" y="339" width="4" height="4" fill="#ff5e40"/><rect x="595" y="339" width="4" height="4" fill="#ff583a"/><rect x="598" y="339" width="4" height="4" fill="#ff5334"/><rect x="601" y="339" width="4" height="4" fill="#ff4e2d"/><rect x="604" y="339" width="4" height="4" fill="#ff4925"/><rect x="607" y="339" width="4" height="4" fill="#ff431a"/><rect x="610" y="339" width="4" height="4" fill="#ff3d00"/><rect x="613" y="339" width="4" height="4" fill="#ff3700"/><rect x="616" y="339" width="4" height="4" fill="#ff3000"/><rect x="619" y="339" width="4" height="4" fill="#ff2900"/><rect x="622" y="339" width="4" height="4" fill="#ff2000"/><rect x="457" y="342" width="13" height="4" fill="#00ffe6"/><rect x="469" y="342" width="28" height="4" fill="#00ffe5"/><rect x="496" y="342" width="13" height="4" fill="#00ffe4"/><rect x="508" y="342" width="4" height="4" fill="#2cffe4"/><rect x="511" y="342" width="4" height="4" fill="#62ffe4"/><rect x="514" y="342" width="4" height="4" fill="#83ffe3"/><rect x="517" y="342" width="4" height="4" fill="#9dffe3"/><rect x="520" y="342" width="4" height="4" fill="#b4ffe3"/><rect x="523" y="342" width="4" height="4" fill="#c9ffe3"/><rect x="526" y="342" width="4" height="4" fill="#ddffe2"/><rect x="529" y="342" width="4" height="4" fill="#f0ffe2"/><rect x="532" y="342" width="4" height="4" fill="#fffcdf"/><rect x="535" y="342" width="4" height="4" fill="#ffebd0"/><rect x="538" y="342" width="4" height="4" fill="#ffddc3"/><rect x="541" y="342" width="4" height="4" fill="#ffd0b8"/><rect x="544" y="342" width="4" height="4" fill="#ffc5ad"/><rect x="547" y="342" width="4" height="4" fill="#ffbba4"/><rect x="550" y="342" width="4" height="4" fill="#ffb19b"/><rect x="553" y="342" width="4" height="4" fill="#ffa893"/><rect x="556" y="342" width="4" height="4" fill="#ffa08c"/><rect x="559" y="342" width="4" height="4" fill="#ff9985"/><rect x="562" y="342" width="4" height="4" fill="#ff927e"/><rect x="565" y="342" width="4" height="4" fill="#ff8b78"/><rect x="568" y="342" width="4" height="4" fill="#ff8472"/><rect x="571" y="342" width="4" height="4" fill="#ff7e6c"/><rect x="574" y="342" width="4" height="4" fill="#ff7866"/><rect x="577" y="342" width="4" height="4" fill="#ff7261"/><rect x="580" y="342" width="4" height="4" fill="#ff6c5b"/><rect x="583" y="342" width="4" height="4" fill="#ff6756"/><rect x="586" y="342" width="4" height="4" fill="#ff6151"/><rect x="589" y="342" width="4" height="4" fill="#ff5c4b"/><rect x="592" y="342" width="4" height="4" fill="#ff5646"/><rect x="595" y="342" width="4" height="4" fill="#ff5140"/><rect x="598" y="342" width="4" height="4" fill="#ff4b3a"/><rect x="601" y="342" width="4" height="4" fill="#ff4534"/><rect x="604" y="342" width="4" height="4" fill="#ff402e"/><rect x="607" y="342" width="4" height="4" fill="#ff3926"/><rect x="610" y="342" width="4" height="4" fill="#ff331d"/><rect x="613" y="342" width="4" height="4" fill="#ff2b0d"/><rect x="616" y="342" width="4" height="4" fill="#ff2200"/><rect x="619" y="342" width="4" height="4" fill="#ff1600"/><rect x="622" y="342" width="10" height="4" fill="#ff0000"/><rect x="457" y="345" width="46" height="4" fill="#00ffec"/><rect x="502" y="345" width="7" height="4" fill="#00ffed"/><rect x="508" y="345" width="4" height="4" fill="#42ffed"/><rect x="511" y="345" width="4" height="4" fill="#6fffed"/><rect x="514" y="345" width="4" height="4" fill="#8dffed"/><rect x="517" y="345" width="4" height="4" fill="#a7ffed"/><rect x="520" y="345" width="4" height="4" fill="#beffed"/><rect x="523" y="345" width="4" height="4" fill="#d3ffed"/><rect x="526" y="345" width="4" height="4" fill="#e7ffed"/><rect x="529" y="345" width="4" height="4" fill="#fbffed"/><rect x="532" y="345" width="4" height="4" fill="#fff1e0"/><rect x="535" y="345" width="4" height="4" fill="#ffe1d2"/><rect x="538" y="345" width="4" height="4" fill="#ffd4c5"/><rect x="541" y="345" width="4" height="4" fill="#ffc8ba"/><rect x="544" y="345" width="4" height="4" fill="#ffbdb0"/><rect x="547" y="345" width="4" height="4" fill="#ffb3a7"/><rect x="550" y="345" width="4" height="4" fill="#ffa99e"/><rect x="553" y="345" width="4" height="4" fill="#ffa196"/><rect x="556" y="345" width="4" height="4" fill="#ff998f"/><rect x="559" y="345" width="4" height="4" fill="#ff9188"/><rect x="562" y="345" width="4" height="4" fill="#ff8a81"/><rect x="565" y="345" width="4" height="4" fill="#ff837b"/><rect x="568" y="345" width="4" height="4" fill="#ff7d75"/><rect x="571" y="345" width="4" height="4" fill="#ff7770"/><rect x="574" y="345" width="4" height="4" fill="#ff716a"/><rect x="577" y="345" width="4" height="4" fill="#ff6b65"/><rect x="580" y="345" width="4" height="4" fill="#ff655f"/><rect x="583" y="345" width="4" height="4" fill="#ff5f5a"/><rect x="586" y="345" width="4" height="4" fill="#ff5a55"/><rect x="589" y="345" width="4" height="4" fill="#ff5450"/><rect x="592" y="345" width="4" height="4" fill="#ff4e4b"/><rect x="595" y="345" width="4" height="4" fill="#ff4845"/><rect x="598" y="345" width="4" height="4" fill="#ff4240"/><rect x="601" y="345" width="4" height="4" fill="#ff3c3b"/><rect x="604" y="345" width="4" height="4" fill="#ff3535"/><rect x="607" y="345" width="4" height="4" fill="#ff2e2e"/><rect x="610" y="345" width="4" height="4" fill="#ff2527"/><rect x="613" y="345" width="4" height="4" fill="#ff191f"/><rect x="616" y="345" width="4" height="4" fill="#ff0012"/><rect x="619" y="345" width="16" height="4" fill="#ff0000"/><rect x="457" y="348" width="7" height="4" fill="#00fff2"/><rect x="463" y="348" width="16" height="4" fill="#00fff3"/><rect x="478" y="348" width="16" height="4" fill="#00fff4"/><rect x="493" y="348" width="13" height="4" fill="#00fff5"/><rect x="505" y="348" width="4" height="4" fill="#00fff6"/><rect x="508" y="348" width="4" height="4" fill="#53fff6"/><rect x="511" y="348" width="4" height="4" fill="#7afff6"/><rect x="514" y="348" width="4" height="4" fill="#98fff7"/><rect x="517" y="348" width="4" height="4" fill="#b2fff7"/><rect x="520" y="348" width="4" height="4" fill="#c8fff8"/><rect x="523" y="348" width="4" height="4" fill="#defff8"/><rect x="526" y="348" width="4" height="4" fill="#f3fff8"/><rect x="529" y="348" width="4" height="4" fill="#fff8f2"/><rect x="532" y="348" width="4" height="4" fill="#ffe6e1"/><rect x="535" y="348" width="4" height="4" fill="#ffd8d3"/><rect x="538" y="348" width="4" height="4" fill="#ffcac7"/><rect x="541" y="348" width="4" height="4" fill="#ffbfbc"/><rect x="544" y="348" width="4" height="4" fill="#ffb4b2"/><rect x="547" y="348" width="4" height="4" fill="#ffaaa9"/><rect x="550" y="348" width="4" height="4" fill="#ffa1a1"/><rect x="553" y="348" width="4" height="4" fill="#ff9999"/><rect x="556" y="348" width="4" height="4" fill="#ff9192"/><rect x="559" y="348" width="4" height="4" fill="#ff8a8b"/><rect x="562" y="348" width="4" height="4" fill="#ff8384"/><rect x="565" y="348" width="4" height="4" fill="#ff7c7e"/><rect x="568" y="348" width="4" height="4" fill="#ff7679"/><rect x="571" y="348" width="4" height="4" fill="#ff6f73"/><rect x="574" y="348" width="4" height="4" fill="#ff696d"/><rect x="577" y="348" width="4" height="4" fill="#ff6368"/><rect x="580" y="348" width="4" height="4" fill="#ff5d63"/><rect x="583" y="348" width="4" height="4" fill="#ff575e"/><rect x="586" y="348" width="4" height="4" fill="#ff5159"/><rect x="589" y="348" width="4" height="4" fill="#ff4b54"/><rect x="592" y="348" width="4" height="4" fill="#ff454f"/><rect x="595" y="348" width="4" height="4" fill="#ff3e4a"/><rect x="598" y="348" width="4" height="4" fill="#ff3845"/><rect x="601" y="348" width="4" height="4" fill="#ff3040"/><rect x="604" y="348" width="4" height="4" fill="#ff273b"/><rect x="607" y="348" width="4" height="4" fill="#ff1c35"/><rect x="610" y="348" width="4" height="4" fill="#ff002f"/><rect x="613" y="348" width="4" height="4" fill="#ff0028"/><rect x="616" y="348" width="4" height="4" fill="#ff0021"/><rect x="619" y="348" width="4" height="4" fill="#ff0016"/><rect x="622" y="348" width="16" height="4" fill="#ff0000"/><rect x="457" y="351" width="7" height="4" fill="#00fff9"/><rect x="463" y="351" width="13" height="4" fill="#00fffa"/><rect x="475" y="351" width="7" height="4" fill="#00fffb"/><rect x="481" y="351" width="10" height="4" fill="#00fffc"/><rect x="490" y="351" width="7" height="4" fill="#00fffd"/><rect x="496" y="351" width="7" height="4" fill="#00fffe"/><rect x="502" y="351" width="4" height="4" fill="#00ffff"/><rect x="505" y="351" width="4" height="4" fill="#19ffff"/><rect x="508" y="351" width="4" height="4" fill="#61feff"/><rect x="511" y="351" width="4" height="4" fill="#85fdff"/><rect x="514" y="351" width="4" height="4" fill="#a2fdff"/><rect x="517" y="351" width="4" height="4" fill="#bafcff"/><rect x="520" y="351" width="4" height="4" fill="#d0fbff"/><rect x="523" y="351" width="4" height="4" fill="#e5faff"/><rect x="526" y="351" width="4" height="4" fill="#f9f9ff"/><rect x="529" y="351" width="4" height="4" fill="#ffecf2"/><rect x="532" y="351" width="4" height="4" fill="#ffdce3"/><rect x="535" y="351" width="4" height="4" fill="#ffced5"/><rect x="538" y="351" width="4" height="4" fill="#ffc1c9"/><rect x="541" y="351" width="4" height="4" fill="#ffb6be"/><rect x="544" y="351" width="4" height="4" fill="#ffabb4"/><rect x="547" y="351" width="4" height="4" fill="#ffa2ab"/><rect x="550" y="351" width="4" height="4" fill="#ff99a3"/><rect x="553" y="351" width="4" height="4" fill="#ff919b"/><rect x="556" y="351" width="4" height="4" fill="#ff8994"/><rect x="559" y="351" width="4" height="4" fill="#ff828e"/><rect x="562" y="351" width="4" height="4" fill="#ff7b87"/><rect x="565" y="351" width="4" height="4" fill="#ff7481"/><rect x="568" y="351" width="4" height="4" fill="#ff6e7c"/><rect x="571" y="351" width="4" height="4" fill="#ff6776"/><rect x="574" y="351" width="4" height="4" fill="#ff6171"/><rect x="577" y="351" width="4" height="4" fill="#ff5b6c"/><rect x="580" y="351" width="4" height="4" fill="#ff5567"/><rect x="583" y="351" width="4" height="4" fill="#ff4e62"/><rect x="586" y="351" width="4" height="4" fill="#ff485d"/><rect x="589" y="351" width="4" height="4" fill="#ff4158"/><rect x="592" y="351" width="4" height="4" fill="#ff3a53"/><rect x="595" y="351" width="4" height="4" fill="#ff334f"/><rect x="598" y="351" width="4" height="4" fill="#ff2a4a"/><rect x="601" y="351" width="4" height="4" fill="#ff1f45"/><rect x="604" y="351" width="4" height="4" fill="#ff0d40"/><rect x="607" y="351" width="4" height="4" fill="#ff003b"/><rect x="610" y="351" width="4" height="4" fill="#ff0036"/><rect x="613" y="351" width="4" height="4" fill="#ff0030"/><rect x="616" y="351" width="4" height="4" fill="#ff0029"/><rect x="619" y="351" width="4" height="4" fill="#ff0022"/><rect x="622" y="351" width="4" height="4" fill="#ff0019"/><rect x="625" y="351" width="4" height="4" fill="#ff0004"/><rect x="628" y="351" width="13" height="4" fill="#ff0000"/><rect x="457" y="354" width="7" height="4" fill="#00feff"/><rect x="463" y="354" width="7" height="4" fill="#00fdff"/><rect x="469" y="354" width="7" height="4" fill="#00fcff"/><rect x="475" y="354" width="7" height="4" fill="#00fbff"/><rect x="481" y="354" width="7" height="4" fill="#00faff"/><rect x="487" y="354" width="4" height="4" fill="#00f9ff"/><rect x="490" y="354" width="7" height="4" fill="#00f8ff"/><rect x="496" y="354" width="4" height="4" fill="#00f7ff"/><rect x="499" y="354" width="4" height="4" fill="#00f6ff"/><rect x="502" y="354" width="4" height="4" fill="#00f5ff"/><rect x="505" y="354" width="4" height="4" fill="#38f5ff"/><rect x="508" y="354" width="4" height="4" fill="#6bf4ff"/><rect x="511" y="354" width="4" height="4" fill="#8bf3ff"/><rect x="514" y="354" width="4" height="4" fill="#a6f2ff"/><rect x="517" y="354" width="4" height="4" fill="#bdf1ff"/><rect x="520" y="354" width="4" height="4" fill="#d2f0ff"/><rect x="523" y="354" width="4" height="4" fill="#e6efff"/><rect x="526" y="354" width="4" height="4" fill="#f9edff"/><rect x="529" y="354" width="4" height="4" fill="#ffe1f3"/><rect x="532" y="354" width="4" height="4" fill="#ffd1e4"/><rect x="535" y="354" width="4" height="4" fill="#ffc4d6"/><rect x="538" y="354" width="4" height="4" fill="#ffb8ca"/><rect x="541" y="354" width="4" height="4" fill="#ffadc0"/><rect x="544" y="354" width="4" height="4" fill="#ffa3b6"/><rect x="547" y="354" width="4" height="4" fill="#ff99ad"/><rect x="550" y="354" width="4" height="4" fill="#ff91a5"/><rect x="553" y="354" width="4" height="4" fill="#ff899e"/><rect x="556" y="354" width="4" height="4" fill="#ff8197"/><rect x="559" y="354" width="4" height="4" fill="#ff7a90"/><rect x="562" y="354" width="4" height="4" fill="#ff738a"/><rect x="565" y="354" width="4" height="4" fill="#ff6c84"/><rect x="568" y="354" width="4" height="4" fill="#ff657e"/><rect x="571" y="354" width="4" height="4" fill="#ff5f79"/><rect x="574" y="354" width="4" height="4" fill="#ff5874"/><rect x="577" y="354" width="4" height="4" fill="#ff526f"/><rect x="580" y="354" width="4" height="4" fill="#ff4b6a"/><rect x="583" y="354" width="4" height="4" fill="#ff4465"/><rect x="586" y="354" width="4" height="4" fill="#ff3d60"/><rect x="589" y="354" width="4" height="4" fill="#ff355c"/><rect x="592" y="354" width="4" height="4" fill="#ff2d57"/><rect x="595" y="354" width="4" height="4" fill="#ff2253"/><rect x="598" y="354" width="4" height="4" fill="#ff124e"/><rect x="601" y="354" width="4" height="4" fill="#ff0049"/><rect x="604" y="354" width="4" height="4" fill="#ff0045"/><rect x="607" y="354" width="4" height="4" fill="#ff0040"/><rect x="610" y="354" width="4" height="4" fill="#ff003b"/><rect x="613" y="354" width="4" height="4" fill="#ff0036"/><rect x="616" y="354" width="4" height="4" fill="#ff0030"/><rect x="619" y="354" width="4" height="4" fill="#ff002a"/><rect x="622" y="354" width="4" height="4" fill="#ff0023"/><rect x="625" y="354" width="4" height="4" fill="#ff001b"/><rect x="628" y="354" width="4" height="4" fill="#ff000d"/><rect x="631" y="354" width="13" height="4" fill="#ff0000"/><rect x="457" y="357" width="7" height="4" fill="#00f7ff"/><rect x="463" y="357" width="7" height="4" fill="#00f6ff"/><rect x="469" y="357" width="4" height="4" fill="#00f5ff"/><rect x="472" y="357" width="7" height="4" fill="#00f4ff"/><rect x="478" y="357" width="4" height="4" fill="#00f3ff"/><rect x="481" y="357" width="4" height="4" fill="#00f2ff"/><rect x="484" y="357" width="7" height="4" fill="#00f1ff"/><rect x="490" y="357" width="4" height="4" fill="#00f0ff"/><rect x="493" y="357" width="4" height="4" fill="#00efff"/><rect x="496" y="357" width="4" height="4" fill="#00eeff"/><rect x="499" y="357" width="4" height="4" fill="#00edff"/><rect x="502" y="357" width="4" height="4" fill="#00ecff"/><rect x="505" y="357" width="4" height="4" fill="#49ebff"/><rect x="508" y="357" width="4" height="4" fill="#73eaff"/><rect x="511" y="357" width="4" height="4" fill="#90e8ff"/><rect x="514" y="357" width="4" height="4" fill="#a9e7ff"/><rect x="517" y="357" width="4" height="4" fill="#bfe6ff"/><rect x="520" y="357" width="4" height="4" fill="#d4e4ff"/><rect x="523" y="357" width="4" height="4" fill="#e7e3ff"/><rect x="526" y="357" width="4" height="4" fill="#f9e1ff"/><rect x="529" y="357" width="4" height="4" fill="#ffd5f3"/><rect x="532" y="357" width="4" height="4" fill="#ffc7e4"/><rect x="535" y="357" width="4" height="4" fill="#ffbad7"/><rect x="538" y="357" width="4" height="4" fill="#ffaecc"/><rect x="541" y="357" width="4" height="4" fill="#ffa3c1"/><rect x="544" y="357" width="4" height="4" fill="#ff9ab8"/><rect x="547" y="357" width="4" height="4" fill="#ff91af"/><rect x="550" y="357" width="4" height="4" fill="#ff88a8"/><rect x="553" y="357" width="4" height="4" fill="#ff80a0"/><rect x="556" y="357" width="4" height="4" fill="#ff7999"/><rect x="559" y="357" width="4" height="4" fill="#ff7193"/><rect x="562" y="357" width="4" height="4" fill="#ff6a8d"/><rect x="565" y="357" width="4" height="4" fill="#ff6387"/><rect x="568" y="357" width="4" height="4" fill="#ff5c81"/><rect x="571" y="357" width="4" height="4" fill="#ff557c"/><rect x="574" y="357" width="4" height="4" fill="#ff4e77"/><rect x="577" y="357" width="4" height="4" fill="#ff4772"/><rect x="580" y="357" width="4" height="4" fill="#ff406d"/><rect x="583" y="357" width="4" height="4" fill="#ff3868"/><rect x="586" y="357" width="4" height="4" fill="#ff2f64"/><rect x="589" y="357" width="4" height="4" fill="#ff255f"/><rect x="592" y="357" width="4" height="4" fill="#ff175b"/><rect x="595" y="357" width="4" height="4" fill="#ff0056"/><rect x="598" y="357" width="4" height="4" fill="#ff0052"/><rect x="601" y="357" width="4" height="4" fill="#ff004d"/><rect x="604" y="357" width="4" height="4" fill="#ff0049"/><rect x="607" y="357" width="4" height="4" fill="#ff0045"/><rect x="610" y="357" width="4" height="4" fill="#ff0040"/><rect x="613" y="357" width="4" height="4" fill="#ff003b"/><rect x="616" y="357" width="4" height="4" fill="#ff0036"/><rect x="619" y="357" width="4" height="4" fill="#ff0031"/><rect x="622" y="357" width="4" height="4" fill="#ff002b"/><rect x="625" y="357" width="4" height="4" fill="#ff0025"/><rect x="628" y="357" width="4" height="4" fill="#ff001d"/><rect x="631" y="357" width="4" height="4" fill="#ff0012"/><rect x="634" y="357" width="13" height="4" fill="#ff0000"/><rect x="460" y="360" width="4" height="4" fill="#00f0ff"/><rect x="463" y="360" width="4" height="4" fill="#00efff"/><rect x="466" y="360" width="4" height="4" fill="#00eeff"/><rect x="469" y="360" width="7" height="4" fill="#00edff"/><rect x="475" y="360" width="4" height="4" fill="#00ecff"/><rect x="478" y="360" width="4" height="4" fill="#00ebff"/><rect x="481" y="360" width="4" height="4" fill="#00eaff"/><rect x="484" y="360" width="4" height="4" fill="#00e9ff"/><rect x="487" y="360" width="4" height="4" fill="#00e8ff"/><rect x="490" y="360" width="4" height="4" fill="#00e7ff"/><rect x="493" y="360" width="4" height="4" fill="#00e6ff"/><rect x="496" y="360" width="4" height="4" fill="#00e5ff"/><rect x="499" y="360" width="4" height="4" fill="#00e4ff"/><rect x="502" y="360" width="4" height="4" fill="#00e2ff"/><rect x="505" y="360" width="4" height="4" fill="#55e1ff"/><rect x="508" y="360" width="4" height="4" fill="#7ae0ff"/><rect x="511" y="360" width="4" height="4" fill="#95deff"/><rect x="514" y="360" width="4" height="4" fill="#adddff"/><rect x="517" y="360" width="4" height="4" fill="#c2dbff"/><rect x="520" y="360" width="4" height="4" fill="#d5d9ff"/><rect x="523" y="360" width="4" height="4" fill="#e8d7ff"/><rect x="526" y="360" width="4" height="4" fill="#f9d5ff"/><rect x="529" y="360" width="4" height="4" fill="#ffcaf4"/><rect x="532" y="360" width="4" height="4" fill="#ffbce5"/><rect x="535" y="360" width="4" height="4" fill="#ffb0d9"/><rect x="538" y="360" width="4" height="4" fill="#ffa4cd"/><rect x="541" y="360" width="4" height="4" fill="#ff9ac3"/><rect x="544" y="360" width="4" height="4" fill="#ff90ba"/><rect x="547" y="360" width="4" height="4" fill="#ff88b1"/><rect x="550" y="360" width="4" height="4" fill="#ff7faa"/><rect x="553" y="360" width="4" height="4" fill="#ff77a2"/><rect x="556" y="360" width="4" height="4" fill="#ff6f9c"/><rect x="559" y="360" width="4" height="4" fill="#ff6895"/><rect x="562" y="360" width="4" height="4" fill="#ff618f"/><rect x="565" y="360" width="4" height="4" fill="#ff5989"/><rect x="568" y="360" width="4" height="4" fill="#ff5284"/><rect x="571" y="360" width="4" height="4" fill="#ff4b7f"/><rect x="574" y="360" width="4" height="4" fill="#ff437a"/><rect x="577" y="360" width="4" height="4" fill="#ff3b75"/><rect x="580" y="360" width="4" height="4" fill="#ff3270"/><rect x="583" y="360" width="4" height="4" fill="#ff286b"/><rect x="586" y="360" width="4" height="4" fill="#ff1b67"/><rect x="589" y="360" width="4" height="4" fill="#ff0062"/><rect x="592" y="360" width="4" height="4" fill="#ff005e"/><rect x="595" y="360" width="4" height="4" fill="#ff005a"/><rect x="598" y="360" width="4" height="4" fill="#ff0055"/><rect x="601" y="360" width="4" height="4" fill="#ff0051"/><rect x="604" y="360" width="4" height="4" fill="#ff004d"/><rect x="607" y="360" width="4" height="4" fill="#ff0049"/><rect x="610" y="360" width="4" height="4" fill="#ff0044"/><rect x="613" y="360" width="4" height="4" fill="#ff0040"/><rect x="616" y="360" width="4" height="4" fill="#ff003b"/><rect x="619" y="360" width="4" height="4" fill="#ff0037"/><rect x="622" y="360" width="4" height="4" fill="#ff0031"/><rect x="625" y="360" width="4" height="4" fill="#ff002c"/><rect x="628" y="360" width="4" height="4" fill="#ff0026"/><rect x="631" y="360" width="4" height="4" fill="#ff001f"/><rect x="634" y="360" width="4" height="4" fill="#ff0015"/><rect x="637" y="360" width="13" height="4" fill="#ff0000"/><rect x="460" y="363" width="4" height="4" fill="#00e9ff"/><rect x="463" y="363" width="4" height="4" fill="#00e8ff"/><rect x="466" y="363" width="4" height="4" fill="#00e7ff"/><rect x="469" y="363" width="4" height="4" fill="#00e6ff"/><rect x="472" y="363" width="4" height="4" fill="#00e5ff"/><rect x="475" y="363" width="4" height="4" fill="#00e4ff"/><rect x="478" y="363" width="4" height="4" fill="#00e3ff"/><rect x="481" y="363" width="4" height="4" fill="#00e2ff"/><rect x="484" y="363" width="4" height="4" fill="#00e1ff"/><rect x="487" y="363" width="4" height="4" fill="#00e0ff"/><rect x="490" y="363" width="4" height="4" fill="#00dfff"/><rect x="493" y="363" width="4" height="4" fill="#00ddff"/><rect x="496" y="363" width="4" height="4" fill="#00dcff"/><rect x="499" y="363" width="4" height="4" fill="#00dbff"/><rect x="502" y="363" width="4" height="4" fill="#27d9ff"/><rect x="505" y="363" width="4" height="4" fill="#5fd7ff"/><rect x="508" y="363" width="4" height="4" fill="#80d6ff"/><rect x="511" y="363" width="4" height="4" fill="#99d4ff"/><rect x="514" y="363" width="4" height="4" fill="#b0d2ff"/><rect x="517" y="363" width="4" height="4" fill="#c4d0ff"/><rect x="520" y="363" width="4" height="4" fill="#d7ceff"/><rect x="523" y="363" width="4" height="4" fill="#e8ccff"/><rect x="526" y="363" width="4" height="4" fill="#facaff"/><rect x="529" y="363" width="4" height="4" fill="#ffbff4"/><rect x="532" y="363" width="4" height="4" fill="#ffb1e6"/><rect x="535" y="363" width="4" height="4" fill="#ffa5da"/><rect x="538" y="363" width="4" height="4" fill="#ff9acf"/><rect x="541" y="363" width="4" height="4" fill="#ff90c5"/><rect x="544" y="363" width="4" height="4" fill="#ff87bc"/><rect x="547" y="363" width="4" height="4" fill="#ff7eb3"/><rect x="550" y="363" width="4" height="4" fill="#ff76ac"/><rect x="553" y="363" width="4" height="4" fill="#ff6ea4"/><rect x="556" y="363" width="4" height="4" fill="#ff669e"/><rect x="559" y="363" width="4" height="4" fill="#ff5e97"/><rect x="562" y="363" width="4" height="4" fill="#ff5691"/><rect x="565" y="363" width="4" height="4" fill="#ff4f8c"/><rect x="568" y="363" width="4" height="4" fill="#ff4786"/><rect x="571" y="363" width="4" height="4" fill="#ff3f81"/><rect x="574" y="363" width="4" height="4" fill="#ff367c"/><rect x="577" y="363" width="4" height="4" fill="#ff2b77"/><rect x="580" y="363" width="4" height="4" fill="#ff1e73"/><rect x="583" y="363" width="4" height="4" fill="#ff006e"/><rect x="586" y="363" width="4" height="4" fill="#ff006a"/><rect x="589" y="363" width="4" height="4" fill="#ff0065"/><rect x="592" y="363" width="4" height="4" fill="#ff0061"/><rect x="595" y="363" width="4" height="4" fill="#ff005d"/><rect x="598" y="363" width="4" height="4" fill="#ff0059"/><rect x="601" y="363" width="4" height="4" fill="#ff0055"/><rect x="604" y="363" width="4" height="4" fill="#ff0051"/><rect x="607" y="363" width="4" height="4" fill="#ff004d"/><rect x="610" y="363" width="4" height="4" fill="#ff0048"/><rect x="613" y="363" width="4" height="4" fill="#ff0044"/><rect x="616" y="363" width="4" height="4" fill="#ff0040"/><rect x="619" y="363" width="4" height="4" fill="#ff003b"/><rect x="622" y="363" width="4" height="4" fill="#ff0037"/><rect x="625" y="363" width="4" height="4" fill="#ff0032"/><rect x="628" y="363" width="4" height="4" fill="#ff002d"/><rect x="631" y="363" width="4" height="4" fill="#ff0027"/><rect x="634" y="363" width="4" height="4" fill="#ff0020"/><rect x="637" y="363" width="4" height="4" fill="#ff0018"/><rect x="640" y="363" width="4" height="4" fill="#ff0007"/><rect x="643" y="363" width="4" height="4" fill="#ff0000"/><rect x="460" y="366" width="4" height="4" fill="#00e2ff"/><rect x="463" y="366" width="4" height="4" fill="#00e1ff"/><rect x="466" y="366" width="4" height="4" fill="#00e0ff"/><rect x="469" y="366" width="4" height="4" fill="#00dfff"/><rect x="472" y="366" width="4" height="4" fill="#00deff"/><rect x="475" y="366" width="4" height="4" fill="#00ddff"/><rect x="478" y="366" width="4" height="4" fill="#00dbff"/><rect x="481" y="366" width="4" height="4" fill="#00daff"/><rect x="484" y="366" width="4" height="4" fill="#00d9ff"/><rect x="487" y="366" width="4" height="4" fill="#00d8ff"/><rect x="490" y="366" width="4" height="4" fill="#00d6ff"/><rect x="493" y="366" width="4" height="4" fill="#00d5ff"/><rect x="496" y="366" width="4" height="4" fill="#00d3ff"/><rect x="499" y="366" width="4" height="4" fill="#00d1ff"/><rect x="502" y="366" width="4" height="4" fill="#3cd0ff"/><rect x="505" y="366" width="4" height="4" fill="#68ceff"/><rect x="508" y="366" width="4" height="4" fill="#85ccff"/><rect x="511" y="366" width="4" height="4" fill="#9dcaff"/><rect x="514" y="366" width="4" height="4" fill="#b2c8ff"/><rect x="517" y="366" width="4" height="4" fill="#c6c5ff"/><rect x="520" y="366" width="4" height="4" fill="#d8c3ff"/><rect x="523" y="366" width="4" height="4" fill="#e9c0ff"/><rect x="526" y="366" width="4" height="4" fill="#fabeff"/><rect x="529" y="366" width="4" height="4" fill="#ffb3f5"/><rect x="532" y="366" width="4" height="4" fill="#ffa6e7"/><rect x="535" y="366" width="4" height="4" fill="#ff9bdb"/><rect x="538" y="366" width="4" height="4" fill="#ff90d0"/><rect x="541" y="366" width="4" height="4" fill="#ff86c6"/><rect x="544" y="366" width="4" height="4" fill="#ff7dbd"/><rect x="547" y="366" width="4" height="4" fill="#ff74b5"/><rect x="550" y="366" width="4" height="4" fill="#ff6bad"/><rect x="553" y="366" width="4" height="4" fill="#ff63a6"/><rect x="556" y="366" width="4" height="4" fill="#ff5ba0"/><rect x="559" y="366" width="4" height="4" fill="#ff539a"/><rect x="562" y="366" width="4" height="4" fill="#ff4b94"/><rect x="565" y="366" width="4" height="4" fill="#ff428e"/><rect x="568" y="366" width="4" height="4" fill="#ff3989"/><rect x="571" y="366" width="4" height="4" fill="#ff2f84"/><rect x="574" y="366" width="4" height="4" fill="#ff227f"/><rect x="577" y="366" width="4" height="4" fill="#ff0a7a"/><rect x="580" y="366" width="4" height="4" fill="#ff0075"/><rect x="583" y="366" width="4" height="4" fill="#ff0071"/><rect x="586" y="366" width="4" height="4" fill="#ff006d"/><rect x="589" y="366" width="4" height="4" fill="#ff0068"/><rect x="592" y="366" width="4" height="4" fill="#ff0064"/><rect x="595" y="366" width="4" height="4" fill="#ff0060"/><rect x="598" y="366" width="4" height="4" fill="#ff005c"/><rect x="601" y="366" width="4" height="4" fill="#ff0058"/><rect x="604" y="366" width="4" height="4" fill="#ff0054"/><rect x="607" y="366" width="4" height="4" fill="#ff0050"/><rect x="610" y="366" width="4" height="4" fill="#ff004c"/><rect x="613" y="366" width="4" height="4" fill="#ff0048"/><rect x="616" y="366" width="4" height="4" fill="#ff0044"/><rect x="619" y="366" width="4" height="4" fill="#ff0040"/><rect x="622" y="366" width="4" height="4" fill="#ff003c"/><rect x="625" y="366" width="4" height="4" fill="#ff0037"/><rect x="628" y="366" width="4" height="4" fill="#ff0032"/><rect x="631" y="366" width="4" height="4" fill="#ff002d"/><rect x="634" y="366" width="4" height="4" fill="#ff0028"/><rect x="637" y="366" width="4" height="4" fill="#ff0022"/><rect x="640" y="366" width="4" height="4" fill="#ff001a"/><rect x="643" y="366" width="4" height="4" fill="#ff000d"/><rect x="460" y="369" width="4" height="4" fill="#00dbff"/><rect x="463" y="369" width="4" height="4" fill="#00daff"/><rect x="466" y="369" width="4" height="4" fill="#00d9ff"/><rect x="469" y="369" width="4" height="4" fill="#00d8ff"/><rect x="472" y="369" width="4" height="4" fill="#00d6ff"/><rect x="475" y="369" width="4" height="4" fill="#00d5ff"/><rect x="478" y="369" width="4" height="4" fill="#00d4ff"/><rect x="481" y="369" width="4" height="4" fill="#00d2ff"/><rect x="484" y="369" width="4" height="4" fill="#00d1ff"/><rect x="487" y="369" width="4" height="4" fill="#00cfff"/><rect x="490" y="369" width="4" height="4" fill="#00ceff"/><rect x="493" y="369" width="4" height="4" fill="#00ccff"/><rect x="496" y="369" width="4" height="4" fill="#00caff"/><rect x="499" y="369" width="4" height="4" fill="#00c8ff"/><rect x="502" y="369" width="4" height="4" fill="#4ac6ff"/><rect x="505" y="369" width="4" height="4" fill="#6fc4ff"/><rect x="508" y="369" width="4" height="4" fill="#8ac2ff"/><rect x="511" y="369" width="4" height="4" fill="#a1c0ff"/><rect x="514" y="369" width="4" height="4" fill="#b5bdff"/><rect x="517" y="369" width="4" height="4" fill="#c8bbff"/><rect x="520" y="369" width="4" height="4" fill="#d9b8ff"/><rect x="523" y="369" width="4" height="4" fill="#eab5ff"/><rect x="526" y="369" width="4" height="4" fill="#fab2ff"/><rect x="529" y="369" width="4" height="4" fill="#ffa7f5"/><rect x="532" y="369" width="4" height="4" fill="#ff9be8"/><rect x="535" y="369" width="4" height="4" fill="#ff90dc"/><rect x="538" y="369" width="4" height="4" fill="#ff85d1"/><rect x="541" y="369" width="4" height="4" fill="#ff7bc8"/><rect x="544" y="369" width="4" height="4" fill="#ff72bf"/><rect x="547" y="369" width="4" height="4" fill="#ff69b7"/><rect x="550" y="369" width="4" height="4" fill="#ff60af"/><rect x="553" y="369" width="4" height="4" fill="#ff58a8"/><rect x="556" y="369" width="4" height="4" fill="#ff4fa2"/><rect x="559" y="369" width="4" height="4" fill="#ff469c"/><rect x="562" y="369" width="4" height="4" fill="#ff3d96"/><rect x="565" y="369" width="4" height="4" fill="#ff3290"/><rect x="568" y="369" width="4" height="4" fill="#ff268b"/><rect x="571" y="369" width="4" height="4" fill="#ff1286"/><rect x="574" y="369" width="4" height="4" fill="#ff0081"/><rect x="577" y="369" width="4" height="4" fill="#ff007c"/><rect x="580" y="369" width="4" height="4" fill="#ff0078"/><rect x="583" y="369" width="4" height="4" fill="#ff0074"/><rect x="586" y="369" width="4" height="4" fill="#ff006f"/><rect x="589" y="369" width="4" height="4" fill="#ff006b"/><rect x="592" y="369" width="4" height="4" fill="#ff0067"/><rect x="595" y="369" width="4" height="4" fill="#ff0063"/><rect x="598" y="369" width="4" height="4" fill="#ff005f"/><rect x="601" y="369" width="4" height="4" fill="#ff005b"/><rect x="604" y="369" width="4" height="4" fill="#ff0057"/><rect x="607" y="369" width="4" height="4" fill="#ff0053"/><rect x="610" y="369" width="4" height="4" fill="#ff0050"/><rect x="613" y="369" width="4" height="4" fill="#ff004c"/><rect x="616" y="369" width="4" height="4" fill="#ff0048"/><rect x="619" y="369" width="4" height="4" fill="#ff0044"/><rect x="622" y="369" width="4" height="4" fill="#ff0040"/><rect x="625" y="369" width="4" height="4" fill="#ff003c"/><rect x="628" y="369" width="4" height="4" fill="#ff0037"/><rect x="631" y="369" width="4" height="4" fill="#ff0033"/><rect x="634" y="369" width="4" height="4" fill="#ff002e"/><rect x="637" y="369" width="4" height="4" fill="#ff0029"/><rect x="463" y="372" width="4" height="4" fill="#00d3ff"/><rect x="466" y="372" width="4" height="4" fill="#00d2ff"/><rect x="469" y="372" width="4" height="4" fill="#00d0ff"/><rect x="472" y="372" width="4" height="4" fill="#00cfff"/><rect x="475" y="372" width="4" height="4" fill="#00cdff"/><rect x="478" y="372" width="4" height="4" fill="#00ccff"/><rect x="481" y="372" width="4" height="4" fill="#00caff"/><rect x="484" y="372" width="4" height="4" fill="#00c9ff"/><rect x="487" y="372" width="4" height="4" fill="#00c7ff"/><rect x="490" y="372" width="4" height="4" fill="#00c5ff"/><rect x="493" y="372" width="4" height="4" fill="#00c3ff"/><rect x="496" y="372" width="4" height="4" fill="#00c1ff"/><rect x="499" y="372" width="4" height="4" fill="#00bfff"/><rect x="502" y="372" width="4" height="4" fill="#55bdff"/><rect x="505" y="372" width="4" height="4" fill="#76bbff"/><rect x="508" y="372" width="4" height="4" fill="#8fb8ff"/><rect x="511" y="372" width="4" height="4" fill="#a4b5ff"/><rect x="514" y="372" width="4" height="4" fill="#b7b3ff"/><rect x="517" y="372" width="4" height="4" fill="#c9b0ff"/><rect x="520" y="372" width="4" height="4" fill="#daacff"/><rect x="523" y="372" width="4" height="4" fill="#eaa9ff"/><rect x="526" y="372" width="4" height="4" fill="#faa5ff"/><rect x="529" y="372" width="4" height="4" fill="#ff9bf5"/><rect x="532" y="372" width="4" height="4" fill="#ff8fe8"/><rect x="535" y="372" width="4" height="4" fill="#ff84dd"/><rect x="538" y="372" width="4" height="4" fill="#ff7ad2"/><rect x="541" y="372" width="4" height="4" fill="#ff70c9"/><rect x="544" y="372" width="4" height="4" fill="#ff66c0"/><rect x="547" y="372" width="4" height="4" fill="#ff5db8"/><rect x="550" y="372" width="4" height="4" fill="#ff54b1"/><rect x="553" y="372" width="4" height="4" fill="#ff4aaa"/><rect x="556" y="372" width="4" height="4" fill="#ff41a4"/><rect x="559" y="372" width="4" height="4" fill="#ff369e"/><rect x="562" y="372" width="4" height="4" fill="#ff2a98"/><rect x="565" y="372" width="4" height="4" fill="#ff1892"/><rect x="568" y="372" width="4" height="4" fill="#ff008d"/><rect x="571" y="372" width="4" height="4" fill="#ff0088"/><rect x="574" y="372" width="4" height="4" fill="#ff0083"/><rect x="577" y="372" width="4" height="4" fill="#ff007f"/><rect x="580" y="372" width="4" height="4" fill="#ff007a"/><rect x="583" y="372" width="4" height="4" fill="#ff0076"/><rect x="586" y="372" width="4" height="4" fill="#ff0072"/><rect x="589" y="372" width="4" height="4" fill="#ff006e"/><rect x="592" y="372" width="4" height="4" fill="#ff006a"/><rect x="595" y="372" width="4" height="4" fill="#ff0066"/><rect x="598" y="372" width="4" height="4" fill="#ff0062"/><rect x="601" y="372" width="4" height="4" fill="#ff005e"/><rect x="604" y="372" width="4" height="4" fill="#ff005a"/><rect x="607" y="372" width="4" height="4" fill="#ff0057"/><rect x="610" y="372" width="4" height="4" fill="#ff0053"/><rect x="613" y="372" width="4" height="4" fill="#ff004f"/><rect x="616" y="372" width="4" height="4" fill="#ff004b"/><rect x="619" y="372" width="4" height="4" fill="#ff0048"/><rect x="622" y="372" width="4" height="4" fill="#ff0044"/><rect x="625" y="372" width="4" height="4" fill="#ff0040"/><rect x="628" y="372" width="4" height="4" fill="#ff003c"/><rect x="463" y="375" width="4" height="4" fill="#00ccff"/><rect x="466" y="375" width="4" height="4" fill="#00caff"/><rect x="469" y="375" width="4" height="4" fill="#00c9ff"/><rect x="472" y="375" width="4" height="4" fill="#00c7ff"/><rect x="475" y="375" width="4" height="4" fill="#00c6ff"/><rect x="478" y="375" width="4" height="4" fill="#00c4ff"/><rect x="481" y="375" width="4" height="4" fill="#00c2ff"/><rect x="484" y="375" width="4" height="4" fill="#00c1ff"/><rect x="487" y="375" width="4" height="4" fill="#00bfff"/><rect x="490" y="375" width="4" height="4" fill="#00bdff"/><rect x="493" y="375" width="4" height="4" fill="#00baff"/><rect x="496" y="375" width="4" height="4" fill="#00b8ff"/><rect x="499" y="375" width="4" height="4" fill="#2fb6ff"/><rect x="502" y="375" width="4" height="4" fill="#5eb3ff"/><rect x="505" y="375" width="4" height="4" fill="#7bb1ff"/><rect x="508" y="375" width="4" height="4" fill="#93aeff"/><rect x="511" y="375" width="4" height="4" fill="#a7abff"/><rect x="514" y="375" width="4" height="4" fill="#baa8ff"/><rect x="517" y="375" width="4" height="4" fill="#cba4ff"/><rect x="520" y="375" width="4" height="4" fill="#dba1ff"/><rect x="523" y="375" width="4" height="4" fill="#eb9dff"/><rect x="526" y="375" width="4" height="4" fill="#fa99ff"/><rect x="529" y="375" width="4" height="4" fill="#ff8ff6"/><rect x="532" y="375" width="4" height="4" fill="#ff83e9"/><rect x="535" y="375" width="4" height="4" fill="#ff78de"/><rect x="538" y="375" width="4" height="4" fill="#ff6dd3"/><rect x="541" y="375" width="4" height="4" fill="#ff63ca"/><rect x="544" y="375" width="4" height="4" fill="#ff59c2"/><rect x="547" y="375" width="4" height="4" fill="#ff4fba"/><rect x="550" y="375" width="4" height="4" fill="#ff45b3"/><rect x="553" y="375" width="4" height="4" fill="#ff3aac"/><rect x="556" y="375" width="4" height="4" fill="#ff2ea5"/><rect x="559" y="375" width="4" height="4" fill="#ff1d9f"/><rect x="562" y="375" width="4" height="4" fill="#ff009a"/><rect x="565" y="375" width="4" height="4" fill="#ff0094"/><rect x="568" y="375" width="4" height="4" fill="#ff008f"/><rect x="571" y="375" width="4" height="4" fill="#ff008a"/><rect x="574" y="375" width="4" height="4" fill="#ff0086"/><rect x="577" y="375" width="4" height="4" fill="#ff0081"/><rect x="580" y="375" width="4" height="4" fill="#ff007d"/><rect x="583" y="375" width="4" height="4" fill="#ff0078"/><rect x="586" y="375" width="4" height="4" fill="#ff0074"/><rect x="589" y="375" width="4" height="4" fill="#ff0070"/><rect x="592" y="375" width="4" height="4" fill="#ff006c"/><rect x="595" y="375" width="4" height="4" fill="#ff0068"/><rect x="598" y="375" width="4" height="4" fill="#ff0065"/><rect x="601" y="375" width="4" height="4" fill="#ff0061"/><rect x="604" y="375" width="4" height="4" fill="#ff005d"/><rect x="607" y="375" width="4" height="4" fill="#ff0059"/><rect x="610" y="375" width="4" height="4" fill="#ff0056"/><rect x="613" y="375" width="4" height="4" fill="#ff0052"/><rect x="616" y="375" width="4" height="4" fill="#ff004f"/><rect x="619" y="375" width="4" height="4" fill="#ff004b"/><rect x="622" y="375" width="4" height="4" fill="#ff0047"/><rect x="463" y="378" width="4" height="4" fill="#00c5ff"/><rect x="466" y="378" width="4" height="4" fill="#00c3ff"/><rect x="469" y="378" width="4" height="4" fill="#00c2ff"/><rect x="472" y="378" width="4" height="4" fill="#00c0ff"/><rect x="475" y="378" width="4" height="4" fill="#00beff"/><rect x="478" y="378" width="4" height="4" fill="#00bcff"/><rect x="481" y="378" width="4" height="4" fill="#00baff"/><rect x="484" y="378" width="4" height="4" fill="#00b8ff"/><rect x="487" y="378" width="4" height="4" fill="#00b6ff"/><rect x="490" y="378" width="4" height="4" fill="#00b4ff"/><rect x="493" y="378" width="4" height="4" fill="#00b2ff"/><rect x="496" y="378" width="4" height="4" fill="#00afff"/><rect x="499" y="378" width="4" height="4" fill="#3fadff"/><rect x="502" y="378" width="4" height="4" fill="#66aaff"/><rect x="505" y="378" width="4" height="4" fill="#80a7ff"/><rect x="508" y="378" width="4" height="4" fill="#97a4ff"/><rect x="511" y="378" width="4" height="4" fill="#aaa0ff"/><rect x="514" y="378" width="4" height="4" fill="#bc9dff"/><rect x="517" y="378" width="4" height="4" fill="#cc99ff"/><rect x="520" y="378" width="4" height="4" fill="#dc95ff"/><rect x="523" y="378" width="4" height="4" fill="#eb90ff"/><rect x="526" y="378" width="4" height="4" fill="#fa8cff"/><rect x="529" y="378" width="4" height="4" fill="#ff82f6"/><rect x="532" y="378" width="4" height="4" fill="#ff76ea"/><rect x="535" y="378" width="4" height="4" fill="#ff6adf"/><rect x="538" y="378" width="4" height="4" fill="#ff60d5"/><rect x="541" y="378" width="4" height="4" fill="#ff55cb"/><rect x="544" y="378" width="4" height="4" fill="#ff4ac3"/><rect x="547" y="378" width="4" height="4" fill="#ff3fbb"/><rect x="550" y="378" width="4" height="4" fill="#ff32b4"/><rect x="553" y="378" width="4" height="4" fill="#ff22ae"/><rect x="556" y="378" width="4" height="4" fill="#ff00a7"/><rect x="559" y="378" width="4" height="4" fill="#ff00a1"/><rect x="562" y="378" width="4" height="4" fill="#ff009c"/><rect x="565" y="378" width="4" height="4" fill="#ff0096"/><rect x="568" y="378" width="4" height="4" fill="#ff0091"/><rect x="571" y="378" width="4" height="4" fill="#ff008c"/><rect x="574" y="378" width="4" height="4" fill="#ff0088"/><rect x="577" y="378" width="4" height="4" fill="#ff0083"/><rect x="580" y="378" width="4" height="4" fill="#ff007f"/><rect x="583" y="378" width="4" height="4" fill="#ff007b"/><rect x="586" y="378" width="4" height="4" fill="#ff0077"/><rect x="589" y="378" width="4" height="4" fill="#ff0073"/><rect x="592" y="378" width="4" height="4" fill="#ff006f"/><rect x="595" y="378" width="4" height="4" fill="#ff006b"/><rect x="598" y="378" width="4" height="4" fill="#ff0067"/><rect x="601" y="378" width="4" height="4" fill="#ff0063"/><rect x="604" y="378" width="4" height="4" fill="#ff0060"/><rect x="607" y="378" width="4" height="4" fill="#ff005c"/><rect x="610" y="378" width="4" height="4" fill="#ff0059"/><rect x="613" y="378" width="4" height="4" fill="#ff0055"/><rect x="616" y="378" width="4" height="4" fill="#ff0052"/><rect x="463" y="381" width="4" height="4" fill="#00beff"/><rect x="466" y="381" width="4" height="4" fill="#00bcff"/><rect x="469" y="381" width="4" height="4" fill="#00baff"/><rect x="472" y="381" width="4" height="4" fill="#00b9ff"/><rect x="475" y="381" width="4" height="4" fill="#00b7ff"/><rect x="478" y="381" width="4" height="4" fill="#00b5ff"/><rect x="481" y="381" width="4" height="4" fill="#00b2ff"/><rect x="484" y="381" width="4" height="4" fill="#00b0ff"/><rect x="487" y="381" width="4" height="4" fill="#00aeff"/><rect x="490" y="381" width="4" height="4" fill="#00abff"/><rect x="493" y="381" width="4" height="4" fill="#00a9ff"/><rect x="496" y="381" width="4" height="4" fill="#00a6ff"/><rect x="499" y="381" width="4" height="4" fill="#4ba3ff"/><rect x="502" y="381" width="4" height="4" fill="#6ca0ff"/><rect x="505" y="381" width="4" height="4" fill="#859dff"/><rect x="508" y="381" width="4" height="4" fill="#9a99ff"/><rect x="511" y="381" width="4" height="4" fill="#ad95ff"/><rect x="514" y="381" width="4" height="4" fill="#be91ff"/><rect x="517" y="381" width="4" height="4" fill="#ce8dff"/><rect x="520" y="381" width="4" height="4" fill="#dd88ff"/><rect x="523" y="381" width="4" height="4" fill="#ec83ff"/><rect x="526" y="381" width="4" height="4" fill="#fa7eff"/><rect x="529" y="381" width="4" height="4" fill="#ff73f6"/><rect x="532" y="381" width="4" height="4" fill="#ff67ea"/><rect x="535" y="381" width="4" height="4" fill="#ff5cdf"/><rect x="538" y="381" width="4" height="4" fill="#ff50d6"/><rect x="541" y="381" width="4" height="4" fill="#ff44cd"/><rect x="544" y="381" width="4" height="4" fill="#ff37c4"/><rect x="547" y="381" width="4" height="4" fill="#ff27bd"/><rect x="550" y="381" width="4" height="4" fill="#ff00b6"/><rect x="553" y="381" width="4" height="4" fill="#ff00af"/><rect x="556" y="381" width="4" height="4" fill="#ff00a9"/><rect x="559" y="381" width="4" height="4" fill="#ff00a3"/><rect x="562" y="381" width="4" height="4" fill="#ff009e"/><rect x="565" y="381" width="4" height="4" fill="#ff0098"/><rect x="568" y="381" width="4" height="4" fill="#ff0093"/><rect x="571" y="381" width="4" height="4" fill="#ff008e"/><rect x="574" y="381" width="4" height="4" fill="#ff008a"/><rect x="577" y="381" width="4" height="4" fill="#ff0085"/><rect x="580" y="381" width="4" height="4" fill="#ff0081"/><rect x="583" y="381" width="4" height="4" fill="#ff007d"/><rect x="586" y="381" width="4" height="4" fill="#ff0079"/><rect x="589" y="381" width="4" height="4" fill="#ff0075"/><rect x="592" y="381" width="4" height="4" fill="#ff0071"/><rect x="595" y="381" width="4" height="4" fill="#ff006d"/><rect x="598" y="381" width="4" height="4" fill="#ff006a"/><rect x="601" y="381" width="4" height="4" fill="#ff0066"/><rect x="604" y="381" width="4" height="4" fill="#ff0062"/><rect x="607" y="381" width="4" height="4" fill="#ff005f"/><rect x="610" y="381" width="4" height="4" fill="#ff005b"/><rect x="466" y="384" width="4" height="4" fill="#00b5ff"/><rect x="469" y="384" width="4" height="4" fill="#00b3ff"/><rect x="472" y="384" width="4" height="4" fill="#00b1ff"/><rect x="475" y="384" width="4" height="4" fill="#00afff"/><rect x="478" y="384" width="4" height="4" fill="#00adff"/><rect x="481" y="384" width="4" height="4" fill="#00aaff"/><rect x="484" y="384" width="4" height="4" fill="#00a8ff"/><rect x="487" y="384" width="4" height="4" fill="#00a5ff"/><rect x="490" y="384" width="4" height="4" fill="#00a2ff"/><rect x="493" y="384" width="4" height="4" fill="#00a0ff"/><rect x="496" y="384" width="4" height="4" fill="#1e9cff"/><rect x="499" y="384" width="4" height="4" fill="#5599ff"/><rect x="502" y="384" width="4" height="4" fill="#7296ff"/><rect x="505" y="384" width="4" height="4" fill="#8992ff"/><rect x="508" y="384" width="4" height="4" fill="#9d8eff"/><rect x="511" y="384" width="4" height="4" fill="#af8aff"/><rect x="514" y="384" width="4" height="4" fill="#c085ff"/><rect x="517" y="384" width="4" height="4" fill="#cf80ff"/><rect x="520" y="384" width="4" height="4" fill="#de7bff"/><rect x="523" y="384" width="4" height="4" fill="#ec75ff"/><rect x="526" y="384" width="4" height="4" fill="#fa6eff"/><rect x="529" y="384" width="4" height="4" fill="#ff63f7"/><rect x="532" y="384" width="4" height="4" fill="#ff57eb"/><rect x="535" y="384" width="4" height="4" fill="#ff4ae0"/><rect x="538" y="384" width="4" height="4" fill="#ff3cd7"/><rect x="541" y="384" width="4" height="4" fill="#ff2cce"/><rect x="544" y="384" width="4" height="4" fill="#ff12c6"/><rect x="547" y="384" width="4" height="4" fill="#ff00be"/><rect x="550" y="384" width="4" height="4" fill="#ff00b7"/><rect x="553" y="384" width="4" height="4" fill="#ff00b1"/><rect x="556" y="384" width="4" height="4" fill="#ff00ab"/><rect x="559" y="384" width="4" height="4" fill="#ff00a5"/><rect x="562" y="384" width="4" height="4" fill="#ff009f"/><rect x="565" y="384" width="4" height="4" fill="#ff009a"/><rect x="568" y="384" width="4" height="4" fill="#ff0095"/><rect x="571" y="384" width="4" height="4" fill="#ff0090"/><rect x="574" y="384" width="4" height="4" fill="#ff008c"/><rect x="577" y="384" width="4" height="4" fill="#ff0087"/><rect x="580" y="384" width="4" height="4" fill="#ff0083"/><rect x="583" y="384" width="4" height="4" fill="#ff007f"/><rect x="586" y="384" width="4" height="4" fill="#ff007b"/><rect x="589" y="384" width="4" height="4" fill="#ff0077"/><rect x="592" y="384" width="4" height="4" fill="#ff0073"/><rect x="595" y="384" width="4" height="4" fill="#ff0070"/><rect x="598" y="384" width="4" height="4" fill="#ff006c"/><rect x="601" y="384" width="4" height="4" fill="#ff0068"/><rect x="466" y="387" width="4" height="4" fill="#00aeff"/><rect x="469" y="387" width="4" height="4" fill="#00acff"/><rect x="472" y="387" width="4" height="4" fill="#00a9ff"/><rect x="475" y="387" width="4" height="4" fill="#00a7ff"/><rect x="478" y="387" width="4" height="4" fill="#00a4ff"/><rect x="481" y="387" width="4" height="4" fill="#00a2ff"/><rect x="484" y="387" width="4" height="4" fill="#009fff"/><rect x="487" y="387" width="4" height="4" fill="#009cff"/><rect x="490" y="387" width="4" height="4" fill="#0099ff"/><rect x="493" y="387" width="4" height="4" fill="#0096ff"/><rect x="496" y="387" width="4" height="4" fill="#3493ff"/><rect x="499" y="387" width="4" height="4" fill="#5d8fff"/><rect x="502" y="387" width="4" height="4" fill="#788bff"/><rect x="505" y="387" width="4" height="4" fill="#8d87ff"/><rect x="508" y="387" width="4" height="4" fill="#a083ff"/><rect x="511" y="387" width="4" height="4" fill="#b27eff"/><rect x="514" y="387" width="4" height="4" fill="#c179ff"/><rect x="517" y="387" width="4" height="4" fill="#d173ff"/><rect x="520" y="387" width="4" height="4" fill="#df6cff"/><rect x="523" y="387" width="4" height="4" fill="#ed65ff"/><rect x="526" y="387" width="4" height="4" fill="#fa5dff"/><rect x="529" y="387" width="4" height="4" fill="#ff51f7"/><rect x="532" y="387" width="4" height="4" fill="#ff42eb"/><rect x="535" y="387" width="4" height="4" fill="#ff32e1"/><rect x="538" y="387" width="4" height="4" fill="#ff1ad7"/><rect x="541" y="387" width="4" height="4" fill="#ff00cf"/><rect x="544" y="387" width="4" height="4" fill="#ff00c7"/><rect x="547" y="387" width="4" height="4" fill="#ff00bf"/><rect x="550" y="387" width="4" height="4" fill="#ff00b9"/><rect x="553" y="387" width="4" height="4" fill="#ff00b2"/><rect x="556" y="387" width="4" height="4" fill="#ff00ac"/><rect x="559" y="387" width="4" height="4" fill="#ff00a6"/><rect x="562" y="387" width="4" height="4" fill="#ff00a1"/><rect x="565" y="387" width="4" height="4" fill="#ff009c"/><rect x="568" y="387" width="4" height="4" fill="#ff0097"/><rect x="571" y="387" width="4" height="4" fill="#ff0092"/><rect x="574" y="387" width="4" height="4" fill="#ff008e"/><rect x="577" y="387" width="4" height="4" fill="#ff0089"/><rect x="580" y="387" width="4" height="4" fill="#ff0085"/><rect x="583" y="387" width="4" height="4" fill="#ff0081"/><rect x="586" y="387" width="4" height="4" fill="#ff007d"/><rect x="589" y="387" width="4" height="4" fill="#ff0079"/><rect x="592" y="387" width="4" height="4" fill="#ff0075"/><rect x="595" y="387" width="4" height="4" fill="#ff0072"/><rect x="466" y="390" width="4" height="4" fill="#00a6ff"/><rect x="469" y="390" width="4" height="4" fill="#00a4ff"/><rect x="472" y="390" width="4" height="4" fill="#00a1ff"/><rect x="475" y="390" width="4" height="4" fill="#009fff"/><rect x="478" y="390" width="4" height="4" fill="#009cff"/><rect x="481" y="390" width="4" height="4" fill="#0099ff"/><rect x="484" y="390" width="4" height="4" fill="#0096ff"/><rect x="487" y="390" width="4" height="4" fill="#0093ff"/><rect x="490" y="390" width="4" height="4" fill="#0090ff"/><rect x="493" y="390" width="4" height="4" fill="#008cff"/><rect x="496" y="390" width="4" height="4" fill="#4189ff"/><rect x="499" y="390" width="4" height="4" fill="#6485ff"/><rect x="502" y="390" width="4" height="4" fill="#7d80ff"/><rect x="505" y="390" width="4" height="4" fill="#917cff"/><rect x="508" y="390" width="4" height="4" fill="#a376ff"/><rect x="511" y="390" width="4" height="4" fill="#b471ff"/><rect x="514" y="390" width="4" height="4" fill="#c36bff"/><rect x="517" y="390" width="4" height="4" fill="#d264ff"/><rect x="520" y="390" width="4" height="4" fill="#e05cff"/><rect x="523" y="390" width="4" height="4" fill="#ed53ff"/><rect x="526" y="390" width="4" height="4" fill="#fa48ff"/><rect x="529" y="390" width="4" height="4" fill="#ff38f7"/><rect x="532" y="390" width="4" height="4" fill="#ff21ec"/><rect x="535" y="390" width="4" height="4" fill="#ff00e2"/><rect x="538" y="390" width="4" height="4" fill="#ff00d8"/><rect x="541" y="390" width="4" height="4" fill="#ff00d0"/><rect x="544" y="390" width="4" height="4" fill="#ff00c8"/><rect x="547" y="390" width="4" height="4" fill="#ff00c1"/><rect x="550" y="390" width="4" height="4" fill="#ff00ba"/><rect x="553" y="390" width="4" height="4" fill="#ff00b4"/><rect x="556" y="390" width="4" height="4" fill="#ff00ae"/><rect x="559" y="390" width="4" height="4" fill="#ff00a8"/><rect x="562" y="390" width="4" height="4" fill="#ff00a3"/><rect x="565" y="390" width="4" height="4" fill="#ff009d"/><rect x="568" y="390" width="4" height="4" fill="#ff0099"/><rect x="571" y="390" width="4" height="4" fill="#ff0094"/><rect x="574" y="390" width="4" height="4" fill="#ff008f"/><rect x="577" y="390" width="4" height="4" fill="#ff008b"/><rect x="580" y="390" width="4" height="4" fill="#ff0087"/><rect x="583" y="390" width="4" height="4" fill="#ff0083"/><rect x="586" y="390" width="4" height="4" fill="#ff007f"/><rect x="589" y="390" width="4" height="4" fill="#ff007b"/><rect x="469" y="393" width="4" height="4" fill="#009cff"/><rect x="472" y="393" width="4" height="4" fill="#009aff"/><rect x="475" y="393" width="4" height="4" fill="#0097ff"/><rect x="478" y="393" width="4" height="4" fill="#0094ff"/><rect x="481" y="393" width="4" height="4" fill="#0091ff"/><rect x="484" y="393" width="4" height="4" fill="#008dff"/><rect x="487" y="393" width="4" height="4" fill="#008aff"/><rect x="490" y="393" width="4" height="4" fill="#0086ff"/><rect x="493" y="393" width="4" height="4" fill="#0082ff"/><rect x="496" y="393" width="4" height="4" fill="#4c7eff"/><rect x="499" y="393" width="4" height="4" fill="#6a79ff"/><rect x="502" y="393" width="4" height="4" fill="#8175ff"/><rect x="505" y="393" width="4" height="4" fill="#946fff"/><rect x="508" y="393" width="4" height="4" fill="#a669ff"/><rect x="511" y="393" width="4" height="4" fill="#b663ff"/><rect x="514" y="393" width="4" height="4" fill="#c55bff"/><rect x="517" y="393" width="4" height="4" fill="#d352ff"/><rect x="520" y="393" width="4" height="4" fill="#e048ff"/><rect x="523" y="393" width="4" height="4" fill="#ee3bff"/><rect x="526" y="393" width="4" height="4" fill="#fa28ff"/><rect x="529" y="393" width="4" height="4" fill="#ff00f7"/><rect x="532" y="393" width="4" height="4" fill="#ff00ec"/><rect x="535" y="393" width="4" height="4" fill="#ff00e2"/><rect x="538" y="393" width="4" height="4" fill="#ff00d9"/><rect x="541" y="393" width="4" height="4" fill="#ff00d1"/><rect x="544" y="393" width="4" height="4" fill="#ff00c9"/><rect x="547" y="393" width="4" height="4" fill="#ff00c2"/><rect x="550" y="393" width="4" height="4" fill="#ff00bb"/><rect x="553" y="393" width="4" height="4" fill="#ff00b5"/><rect x="556" y="393" width="4" height="4" fill="#ff00af"/><rect x="559" y="393" width="4" height="4" fill="#ff00a9"/><rect x="562" y="393" width="4" height="4" fill="#ff00a4"/><rect x="565" y="393" width="4" height="4" fill="#ff009f"/><rect x="568" y="393" width="4" height="4" fill="#ff009a"/><rect x="571" y="393" width="4" height="4" fill="#ff0096"/><rect x="574" y="393" width="4" height="4" fill="#ff0091"/><rect x="577" y="393" width="4" height="4" fill="#ff008d"/><rect x="580" y="393" width="4" height="4" fill="#ff0089"/><rect x="583" y="393" width="4" height="4" fill="#ff0085"/><rect x="469" y="396" width="4" height="4" fill="#0094ff"/><rect x="472" y="396" width="4" height="4" fill="#0091ff"/><rect x="475" y="396" width="4" height="4" fill="#008eff"/><rect x="478" y="396" width="4" height="4" fill="#008bff"/><rect x="481" y="396" width="4" height="4" fill="#0088ff"/><rect x="484" y="396" width="4" height="4" fill="#0084ff"/><rect x="487" y="396" width="4" height="4" fill="#0080ff"/><rect x="490" y="396" width="4" height="4" fill="#007cff"/><rect x="493" y="396" width="4" height="4" fill="#2778ff"/><rect x="496" y="396" width="4" height="4" fill="#5473ff"/><rect x="499" y="396" width="4" height="4" fill="#706eff"/><rect x="502" y="396" width="4" height="4" fill="#8568ff"/><rect x="505" y="396" width="4" height="4" fill="#9861ff"/><rect x="508" y="396" width="4" height="4" fill="#a85aff"/><rect x="511" y="396" width="4" height="4" fill="#b852ff"/><rect x="514" y="396" width="4" height="4" fill="#c648ff"/><rect x="517" y="396" width="4" height="4" fill="#d43cff"/><rect x="520" y="396" width="4" height="4" fill="#e12bff"/><rect x="523" y="396" width="4" height="4" fill="#ee00ff"/><rect x="526" y="396" width="4" height="4" fill="#fa00ff"/><rect x="529" y="396" width="4" height="4" fill="#ff00f8"/><rect x="532" y="396" width="4" height="4" fill="#ff00ed"/><rect x="535" y="396" width="4" height="4" fill="#ff00e3"/><rect x="538" y="396" width="4" height="4" fill="#ff00da"/><rect x="541" y="396" width="4" height="4" fill="#ff00d2"/><rect x="544" y="396" width="4" height="4" fill="#ff00ca"/><rect x="547" y="396" width="4" height="4" fill="#ff00c3"/><rect x="550" y="396" width="4" height="4" fill="#ff00bc"/><rect x="553" y="396" width="4" height="4" fill="#ff00b6"/><rect x="556" y="396" width="4" height="4" fill="#ff00b0"/><rect x="559" y="396" width="4" height="4" fill="#ff00ab"/><rect x="562" y="396" width="4" height="4" fill="#ff00a6"/><rect x="565" y="396" width="4" height="4" fill="#ff00a1"/><rect x="568" y="396" width="4" height="4" fill="#ff009c"/><rect x="571" y="396" width="4" height="4" fill="#ff0097"/><rect x="574" y="396" width="4" height="4" fill="#ff0093"/><rect x="577" y="396" width="4" height="4" fill="#ff008f"/><rect x="469" y="399" width="4" height="4" fill="#008cff"/><rect x="472" y="399" width="4" height="4" fill="#0089ff"/><rect x="475" y="399" width="4" height="4" fill="#0086ff"/><rect x="478" y="399" width="4" height="4" fill="#0082ff"/><rect x="481" y="399" width="4" height="4" fill="#007eff"/><rect x="484" y="399" width="4" height="4" fill="#007aff"/><rect x="487" y="399" width="4" height="4" fill="#0076ff"/><rect x="490" y="399" width="4" height="4" fill="#0071ff"/><rect x="493" y="399" width="4" height="4" fill="#376cff"/><rect x="496" y="399" width="4" height="4" fill="#5c66ff"/><rect x="499" y="399" width="4" height="4" fill="#7560ff"/><rect x="502" y="399" width="4" height="4" fill="#8959ff"/><rect x="505" y="399" width="4" height="4" fill="#9b52ff"/><rect x="508" y="399" width="4" height="4" fill="#ab48ff"/><rect x="511" y="399" width="4" height="4" fill="#ba3dff"/><rect x="514" y="399" width="4" height="4" fill="#c82eff"/><rect x="517" y="399" width="4" height="4" fill="#d50eff"/><rect x="520" y="399" width="4" height="4" fill="#e200ff"/><rect x="523" y="399" width="4" height="4" fill="#ee00ff"/><rect x="526" y="399" width="4" height="4" fill="#fa00ff"/><rect x="529" y="399" width="4" height="4" fill="#ff00f8"/><rect x="532" y="399" width="4" height="4" fill="#ff00ed"/><rect x="535" y="399" width="4" height="4" fill="#ff00e4"/><rect x="538" y="399" width="4" height="4" fill="#ff00db"/><rect x="541" y="399" width="4" height="4" fill="#ff00d3"/><rect x="544" y="399" width="4" height="4" fill="#ff00cb"/><rect x="547" y="399" width="4" height="4" fill="#ff00c4"/><rect x="550" y="399" width="4" height="4" fill="#ff00be"/><rect x="553" y="399" width="4" height="4" fill="#ff00b8"/><rect x="556" y="399" width="4" height="4" fill="#ff00b2"/><rect x="559" y="399" width="4" height="4" fill="#ff00ac"/><rect x="562" y="399" width="4" height="4" fill="#ff00a7"/><rect x="565" y="399" width="4" height="4" fill="#ff00a2"/><rect x="568" y="399" width="4" height="4" fill="#ff009d"/><rect x="472" y="402" width="4" height="4" fill="#0080ff"/><rect x="475" y="402" width="4" height="4" fill="#007cff"/><rect x="478" y="402" width="4" height="4" fill="#0078ff"/><rect x="481" y="402" width="4" height="4" fill="#0074ff"/><rect x="484" y="402" width="4" height="4" fill="#0070ff"/><rect x="487" y="402" width="4" height="4" fill="#006bff"/><rect x="490" y="402" width="4" height="4" fill="#0065ff"/><rect x="493" y="402" width="4" height="4" fill="#435fff"/><rect x="496" y="402" width="4" height="4" fill="#6259ff"/><rect x="499" y="402" width="4" height="4" fill="#7951ff"/><rect x="502" y="402" width="4" height="4" fill="#8c48ff"/><rect x="505" y="402" width="4" height="4" fill="#9d3eff"/><rect x="508" y="402" width="4" height="4" fill="#ad30ff"/><rect x="511" y="402" width="4" height="4" fill="#bb18ff"/><rect x="514" y="402" width="4" height="4" fill="#c900ff"/><rect x="517" y="402" width="4" height="4" fill="#d600ff"/><rect x="520" y="402" width="4" height="4" fill="#e200ff"/><rect x="523" y="402" width="4" height="4" fill="#ef00ff"/><rect x="526" y="402" width="4" height="4" fill="#fb00ff"/><rect x="529" y="402" width="4" height="4" fill="#ff00f8"/><rect x="532" y="402" width="4" height="4" fill="#ff00ee"/><rect x="535" y="402" width="4" height="4" fill="#ff00e4"/><rect x="538" y="402" width="4" height="4" fill="#ff00dc"/><rect x="541" y="402" width="4" height="4" fill="#ff00d4"/><rect x="544" y="402" width="4" height="4" fill="#ff00cc"/><rect x="547" y="402" width="4" height="4" fill="#ff00c5"/><rect x="550" y="402" width="4" height="4" fill="#ff00bf"/><rect x="553" y="402" width="4" height="4" fill="#ff00b9"/><rect x="556" y="402" width="4" height="4" fill="#ff00b3"/><rect x="559" y="402" width="4" height="4" fill="#ff00ae"/><rect x="562" y="402" width="4" height="4" fill="#ff00a8"/><rect x="472" y="405" width="4" height="4" fill="#0077ff"/><rect x="475" y="405" width="4" height="4" fill="#0073ff"/><rect x="478" y="405" width="4" height="4" fill="#006eff"/><rect x="481" y="405" width="4" height="4" fill="#006aff"/><rect x="484" y="405" width="4" height="4" fill="#0064ff"/><rect x="487" y="405" width="4" height="4" fill="#005fff"/><rect x="490" y="405" width="4" height="4" fill="#1558ff"/><rect x="493" y="405" width="4" height="4" fill="#4c51ff"/><rect x="496" y="405" width="4" height="4" fill="#6849ff"/><rect x="499" y="405" width="4" height="4" fill="#7d3fff"/><rect x="502" y="405" width="4" height="4" fill="#9032ff"/><rect x="505" y="405" width="4" height="4" fill="#a01dff"/><rect x="508" y="405" width="4" height="4" fill="#af00ff"/><rect x="511" y="405" width="4" height="4" fill="#bd00ff"/><rect x="514" y="405" width="4" height="4" fill="#ca00ff"/><rect x="517" y="405" width="4" height="4" fill="#d700ff"/><rect x="520" y="405" width="4" height="4" fill="#e300ff"/><rect x="523" y="405" width="4" height="4" fill="#ef00ff"/><rect x="526" y="405" width="4" height="4" fill="#fb00ff"/><rect x="529" y="405" width="4" height="4" fill="#ff00f8"/><rect x="532" y="405" width="4" height="4" fill="#ff00ee"/><rect x="535" y="405" width="4" height="4" fill="#ff00e5"/><rect x="538" y="405" width="4" height="4" fill="#ff00dc"/><rect x="541" y="405" width="4" height="4" fill="#ff00d4"/><rect x="544" y="405" width="4" height="4" fill="#ff00cd"/><rect x="547" y="405" width="4" height="4" fill="#ff00c6"/><rect x="550" y="405" width="4" height="4" fill="#ff00c0"/><rect x="553" y="405" width="4" height="4" fill="#ff00ba"/><rect x="556" y="405" width="4" height="4" fill="#ff00b4"/><rect x="475" y="408" width="4" height="4" fill="#0068ff"/><rect x="478" y="408" width="4" height="4" fill="#0063ff"/><rect x="481" y="408" width="4" height="4" fill="#005eff"/><rect x="484" y="408" width="4" height="4" fill="#0058ff"/><rect x="487" y="408" width="4" height="4" fill="#0051ff"/><rect x="490" y="408" width="4" height="4" fill="#2d49ff"/><rect x="493" y="408" width="4" height="4" fill="#543fff"/><rect x="496" y="408" width="4" height="4" fill="#6d33ff"/><rect x="499" y="408" width="4" height="4" fill="#8121ff"/><rect x="502" y="408" width="4" height="4" fill="#9300ff"/><rect x="505" y="408" width="4" height="4" fill="#a200ff"/><rect x="508" y="408" width="4" height="4" fill="#b100ff"/><rect x="511" y="408" width="4" height="4" fill="#be00ff"/><rect x="514" y="408" width="4" height="4" fill="#cb00ff"/><rect x="517" y="408" width="4" height="4" fill="#d800ff"/><rect x="520" y="408" width="4" height="4" fill="#e400ff"/><rect x="523" y="408" width="4" height="4" fill="#ef00ff"/><rect x="526" y="408" width="4" height="4" fill="#fb00ff"/><rect x="529" y="408" width="4" height="4" fill="#ff00f8"/><rect x="532" y="408" width="4" height="4" fill="#ff00ee"/><rect x="535" y="408" width="4" height="4" fill="#ff00e5"/><rect x="538" y="408" width="4" height="4" fill="#ff00dd"/><rect x="541" y="408" width="4" height="4" fill="#ff00d5"/><rect x="544" y="408" width="4" height="4" fill="#ff00ce"/><rect x="547" y="408" width="4" height="4" fill="#ff00c7"/><rect x="550" y="408" width="4" height="4" fill="#ff00c1"/><rect x="475" y="411" width="4" height="4" fill="#005dff"/><rect x="478" y="411" width="4" height="4" fill="#0057ff"/><rect x="481" y="411" width="4" height="4" fill="#0050ff"/><rect x="484" y="411" width="4" height="4" fill="#0049ff"/><rect x="487" y="411" width="4" height="4" fill="#0040ff"/><rect x="490" y="411" width="4" height="4" fill="#3a35ff"/><rect x="493" y="411" width="4" height="4" fill="#5b25ff"/><rect x="496" y="411" width="4" height="4" fill="#7200ff"/><rect x="499" y="411" width="4" height="4" fill="#8500ff"/><rect x="502" y="411" width="4" height="4" fill="#9600ff"/><rect x="505" y="411" width="4" height="4" fill="#a500ff"/><rect x="508" y="411" width="4" height="4" fill="#b300ff"/><rect x="511" y="411" width="4" height="4" fill="#c000ff"/><rect x="514" y="411" width="4" height="4" fill="#cd00ff"/><rect x="517" y="411" width="4" height="4" fill="#d900ff"/><rect x="520" y="411" width="4" height="4" fill="#e400ff"/><rect x="523" y="411" width="4" height="4" fill="#f000ff"/><rect x="526" y="411" width="4" height="4" fill="#fb00ff"/><rect x="529" y="411" width="4" height="4" fill="#ff00f9"/><rect x="532" y="411" width="4" height="4" fill="#ff00ef"/><rect x="535" y="411" width="4" height="4" fill="#ff00e6"/><rect x="538" y="411" width="4" height="4" fill="#ff00de"/><rect x="541" y="411" width="4" height="4" fill="#ff00d6"/><rect x="544" y="411" width="4" height="4" fill="#ff00cf"/><rect x="478" y="414" width="4" height="4" fill="#0049ff"/><rect x="481" y="414" width="4" height="4" fill="#0040ff"/><rect x="484" y="414" width="4" height="4" fill="#0036ff"/><rect x="487" y="414" width="4" height="4" fill="#0027ff"/><rect x="490" y="414" width="4" height="4" fill="#4500ff"/><rect x="493" y="414" width="4" height="4" fill="#6100ff"/><rect x="496" y="414" width="4" height="4" fill="#7600ff"/><rect x="499" y="414" width="4" height="4" fill="#8800ff"/><rect x="502" y="414" width="4" height="4" fill="#9800ff"/><rect x="505" y="414" width="4" height="4" fill="#a700ff"/><rect x="508" y="414" width="4" height="4" fill="#b500ff"/><rect x="511" y="414" width="4" height="4" fill="#c100ff"/><rect x="514" y="414" width="4" height="4" fill="#ce00ff"/><rect x="517" y="414" width="4" height="4" fill="#d900ff"/><rect x="520" y="414" width="4" height="4" fill="#e500ff"/><rect x="523" y="414" width="4" height="4" fill="#f000ff"/><rect x="526" y="414" width="4" height="4" fill="#fb00ff"/><rect x="529" y="414" width="4" height="4" fill="#ff00f9"/><rect x="532" y="414" width="4" height="4" fill="#ff00ef"/><rect x="535" y="414" width="4" height="4" fill="#ff00e6"/><rect x="478" y="417" width="4" height="4" fill="#0037ff"/><rect x="481" y="417" width="4" height="4" fill="#002aff"/><rect x="484" y="417" width="4" height="4" fill="#0012ff"/><rect x="487" y="417" width="4" height="4" fill="#2000ff"/><rect x="490" y="417" width="4" height="4" fill="#4d00ff"/><rect x="493" y="417" width="4" height="4" fill="#6600ff"/><rect x="496" y="417" width="4" height="4" fill="#7b00ff"/><rect x="499" y="417" width="4" height="4" fill="#8c00ff"/><rect x="502" y="417" width="4" height="4" fill="#9b00ff"/><rect x="505" y="417" width="4" height="4" fill="#a900ff"/><rect x="508" y="417" width="4" height="4" fill="#b600ff"/><rect x="511" y="417" width="4" height="4" fill="#c300ff"/><rect x="514" y="417" width="4" height="4" fill="#cf00ff"/><rect x="517" y="417" width="4" height="4" fill="#da00ff"/><rect x="520" y="417" width="4" height="4" fill="#e500ff"/><rect x="523" y="417" width="4" height="4" fill="#f000ff"/><rect x="526" y="417" width="4" height="4" fill="#fb00ff"/><rect x="529" y="417" width="4" height="4" fill="#ff00f9"/><rect x="481" y="420" width="7" height="4" fill="#0000ff"/><rect x="487" y="420" width="4" height="4" fill="#3100ff"/><rect x="490" y="420" width="4" height="4" fill="#5400ff"/><rect x="493" y="420" width="4" height="4" fill="#6b00ff"/><rect x="496" y="420" width="4" height="4" fill="#7e00ff"/><rect x="499" y="420" width="4" height="4" fill="#8f00ff"/><rect x="502" y="420" width="4" height="4" fill="#9d00ff"/><rect x="505" y="420" width="4" height="4" fill="#ab00ff"/><rect x="508" y="420" width="4" height="4" fill="#b800ff"/><rect x="511" y="420" width="4" height="4" fill="#c400ff"/><rect x="514" y="420" width="4" height="4" fill="#d000ff"/><rect x="517" y="420" width="4" height="4" fill="#db00ff"/><rect x="520" y="420" width="4" height="4" fill="#e600ff"/><rect x="523" y="420" width="4" height="4" fill="#f000ff"/><rect x="481" y="423" width="7" height="4" fill="#0000ff"/><rect x="487" y="423" width="4" height="4" fill="#3d00ff"/><rect x="490" y="423" width="4" height="4" fill="#5a00ff"/><rect x="493" y="423" width="4" height="4" fill="#7000ff"/><rect x="496" y="423" width="4" height="4" fill="#8200ff"/><rect x="499" y="423" width="4" height="4" fill="#9100ff"/><rect x="502" y="423" width="4" height="4" fill="#a000ff"/><rect x="505" y="423" width="4" height="4" fill="#ad00ff"/><rect x="508" y="423" width="4" height="4" fill="#b900ff"/><rect x="511" y="423" width="4" height="4" fill="#c500ff"/><rect x="514" y="423" width="4" height="4" fill="#d100ff"/><rect x="517" y="423" width="4" height="4" fill="#dc00ff"/><rect x="484" y="426" width="4" height="4" fill="#0700ff"/><rect x="487" y="426" width="4" height="4" fill="#4600ff"/><rect x="490" y="426" width="4" height="4" fill="#6000ff"/><rect x="493" y="426" width="4" height="4" fill="#7400ff"/><rect x="496" y="426" width="4" height="4" fill="#8500ff"/><rect x="499" y="426" width="4" height="4" fill="#9400ff"/><rect x="502" y="426" width="4" height="4" fill="#a200ff"/><rect x="505" y="426" width="4" height="4" fill="#af00ff"/><rect x="508" y="426" width="4" height="4" fill="#bb00ff"/><rect x="487" y="429" width="4" height="4" fill="#4d00ff"/><rect x="490" y="429" width="4" height="4" fill="#6500ff"/><rect x="493" y="429" width="4" height="4" fill="#7800ff"/><rect x="496" y="429" width="4" height="4" fill="#8800ff"/><rect x="499" y="429" width="4" height="4" fill="#9700ff"/><rect x="502" y="429" width="4" height="4" fill="#a400ff"/><rect x="490" y="432" width="4" height="4" fill="#6800ff"/><rect x="496" y="432" width="4" height="4" fill="#8a00ff"/></g><g stroke="#000" stroke-width="1" opacity="0.03"><path d="M461.8 195.1V433.1"/><path d="M475.1 195.1V433.1"/><path d="M488.3 195.1V433.1"/><path d="M501.6 195.1V433.1"/><path d="M514.8 195.1V433.1"/><path d="M528.1 195.1V433.1"/><path d="M541.3 195.1V433.1"/><path d="M554.6 195.1V433.1"/><path d="M567.8 195.1V433.1"/><path d="M581.0 195.1V433.1"/><path d="M594.3 195.1V433.1"/><path d="M607.5 195.1V433.1"/><path d="M620.8 195.1V433.1"/><path d="M634.0 195.1V433.1"/><path d="M647.3 195.1V433.1"/><path d="M448.6 419.9H660.5"/><path d="M448.6 406.7H660.5"/><path d="M448.6 393.4H660.5"/><path d="M448.6 380.2H660.5"/><path d="M448.6 367.0H660.5"/><path d="M448.6 353.8H660.5"/><path d="M448.6 340.5H660.5"/><path d="M448.6 327.3H660.5"/><path d="M448.6 314.1H660.5"/><path d="M448.6 300.9H660.5"/><path d="M448.6 287.6H660.5"/><path d="M448.6 274.4H660.5"/><path d="M448.6 261.2H660.5"/><path d="M448.6 248.0H660.5"/><path d="M448.6 234.7H660.5"/><path d="M448.6 221.5H660.5"/><path d="M448.6 208.3H660.5"/></g></g>
<path d="M494.7 431.8C494.7 431.8 494.7 431.8 494.6 431.8C494.6 431.8 494.6 431.8 494.5 431.8C494.5 431.8 494.4 431.8 494.3 431.8C494.2 431.8 494.2 431.8 494.0 431.8C493.8 431.7 493.7 431.5 493.3 431.3C493.0 431.0 492.7 430.7 492.1 430.2C491.6 429.7 491.0 429.2 490.1 428.4C489.2 427.6 487.7 426.2 486.7 425.2C485.8 424.3 485.4 423.8 484.5 422.5C483.6 421.3 482.6 419.9 481.5 417.8C480.3 415.7 479.1 413.4 477.6 410.1C476.2 406.8 474.6 403.0 472.8 398.0C471.0 393.0 468.8 387.2 466.8 380.0C464.8 372.9 462.6 364.4 460.6 355.1C458.6 345.7 456.5 334.7 454.8 323.9C453.2 313.2 451.6 301.4 450.8 290.7C449.9 280.0 449.4 269.2 449.6 259.9C449.9 250.6 450.7 241.6 452.3 234.7C453.8 227.7 456.2 222.0 458.9 218.3C461.6 214.6 465.0 213.2 468.3 212.6C471.6 211.9 475.3 213.3 478.9 214.6C482.4 215.8 486.1 218.0 489.6 219.9C493.1 221.9 496.4 224.1 499.7 226.4C503.0 228.6 506.2 231.1 509.4 233.6C512.6 236.1 515.8 238.8 519.0 241.5C522.2 244.3 525.3 247.1 528.5 250.0C531.7 252.9 534.8 255.8 538.0 258.8C541.1 261.8 544.3 264.9 547.4 267.9C550.6 271.0 553.7 274.1 556.9 277.2C560.0 280.2 563.1 283.3 566.2 286.4C569.3 289.4 572.4 292.5 575.4 295.5C578.5 298.5 581.4 301.5 584.4 304.4C587.3 307.3 590.1 310.2 592.9 312.9C595.7 315.7 598.3 318.4 601.0 320.9C603.6 323.4 606.4 325.6 608.7 327.8C611.1 330.0 613.1 332.2 615.1 334.2C617.1 336.2 619.0 338.1 620.7 339.8C622.4 341.5 623.5 342.5 625.4 344.4C627.3 346.3 630.3 349.3 632.2 351.2C634.0 353.0 635.3 354.3 636.5 355.5C637.7 356.7 638.7 357.6 639.5 358.4C640.3 359.2 640.8 359.7 641.3 360.2C641.8 360.7 642.0 361.0 642.4 361.3C642.7 361.6 642.8 361.7 643.3 362.2C643.7 362.6 644.7 363.7 645.0 364.0Z" fill="none" stroke="#2a2a2a" stroke-width="0.6" stroke-miterlimit="12"/>
<line x1="494.7" y1="431.8" x2="495.7" y2="434.6" stroke="#555" stroke-width="0.6"/><line x1="486.7" y1="425.2" x2="484.6" y2="427.3" stroke="#555" stroke-width="0.6"/><line x1="481.5" y1="417.8" x2="478.8" y2="419.3" stroke="#555" stroke-width="0.6"/><line x1="472.8" y1="398.0" x2="470.0" y2="399.0" stroke="#555" stroke-width="0.6"/><line x1="460.6" y1="355.1" x2="457.7" y2="355.7" stroke="#555" stroke-width="0.6"/><line x1="450.8" y1="290.7" x2="447.8" y2="290.9" stroke="#555" stroke-width="0.6"/><line x1="468.3" y1="212.6" x2="467.7" y2="209.6" stroke="#555" stroke-width="0.6"/><line x1="509.4" y1="233.6" x2="511.3" y2="231.2" stroke="#555" stroke-width="0.6"/><line x1="547.4" y1="267.9" x2="549.5" y2="265.8" stroke="#555" stroke-width="0.6"/><line x1="584.4" y1="304.4" x2="586.5" y2="302.3" stroke="#555" stroke-width="0.6"/><line x1="615.1" y1="334.2" x2="617.2" y2="332.1" stroke="#555" stroke-width="0.6"/><line x1="632.2" y1="351.2" x2="634.3" y2="349.0" stroke="#555" stroke-width="0.6"/><line x1="645.0" y1="364.0" x2="647.2" y2="361.9" stroke="#555" stroke-width="0.6"/><polygon points="628.7,348.5 518.8,251.3 488.3,417.2" fill="none" stroke="#ff0000" stroke-width="1.9" stroke-linejoin="bevel"/><polygon points="627.4,349.0 521.6,253.6 486.1,418.8" fill="none" stroke="#008c00" stroke-width="2.0" stroke-linejoin="bevel"/><polygon points="628.5,349.6 521.5,253.8 485.7,419.7" fill="none" stroke="#0000ff" stroke-width="2.1" stroke-linejoin="bevel"/><circle cx="531.4" cy="346.1" r="2.6" fill="none" stroke="#e020e0" stroke-width="0.9"/><text x="447.2" y="436.1" text-anchor="end" class="ax">0.0</text><text x="447.2" y="409.7" text-anchor="end" class="ax">0.1</text><text x="447.2" y="383.2" text-anchor="end" class="ax">0.2</text><text x="447.2" y="356.8" text-anchor="end" class="ax">0.3</text><text x="447.2" y="330.3" text-anchor="end" class="ax">0.4</text><text x="447.2" y="303.9" text-anchor="end" class="ax">0.5</text><text x="447.2" y="277.4" text-anchor="end" class="ax">0.6</text><text x="447.2" y="251.0" text-anchor="end" class="ax">0.7</text><text x="447.2" y="224.5" text-anchor="end" class="ax">0.8</text><text x="447.2" y="198.1" text-anchor="end" class="ax">0.9</text><text x="449.0" y="443.9" text-anchor="middle" class="ax xg">0.0</text><text x="475.5" y="443.9" text-anchor="middle" class="ax xg">0.1</text><text x="502.0" y="443.9" text-anchor="middle" class="ax xg">0.2</text><text x="528.5" y="443.9" text-anchor="middle" class="ax xg">0.3</text><text x="555.0" y="443.9" text-anchor="middle" class="ax xg">0.4</text><text x="581.4" y="443.9" text-anchor="middle" class="ax xg">0.5</text><text x="607.9" y="443.9" text-anchor="middle" class="ax xg">0.6</text><text x="634.4" y="443.9" text-anchor="middle" class="ax xg">0.7</text><text x="660.9" y="443.9" text-anchor="middle" class="ax xg">0.8</text><text x="553.5" y="453.5" text-anchor="middle" class="ax">x</text><text x="432.5" y="315" text-anchor="middle" class="ax">y</text><text x="461.5" y="206.4" class="wl" textLength="13.2" lengthAdjust="spacingAndGlyphs">520</text><text x="512.0" y="228.0" class="wl" textLength="13.2" lengthAdjust="spacingAndGlyphs">540</text><text x="550.6" y="263.0" class="wl" textLength="13.2" lengthAdjust="spacingAndGlyphs">560</text><text x="587.0" y="299.6" class="wl" textLength="13.2" lengthAdjust="spacingAndGlyphs">580</text><text x="618.2" y="330.6" class="wl" textLength="13.2" lengthAdjust="spacingAndGlyphs">600</text><text x="634.5" y="348.0" class="wl" textLength="13.2" lengthAdjust="spacingAndGlyphs">620</text><text x="648.0" y="364.6" class="wl" textLength="13.2" lengthAdjust="spacingAndGlyphs">700</text><text x="432.5" y="294.0" class="wl" textLength="13.2" lengthAdjust="spacingAndGlyphs">500</text><text x="447.0" y="364.0" class="wl" textLength="13.2" lengthAdjust="spacingAndGlyphs">490</text><text x="456.0" y="402.4" class="wl" textLength="13.2" lengthAdjust="spacingAndGlyphs">480</text><text x="464.0" y="423.0" class="wl" textLength="13.2" lengthAdjust="spacingAndGlyphs">470</text><text x="470.0" y="432.4" class="wl" textLength="13.2" lengthAdjust="spacingAndGlyphs">460</text><text x="500.5" y="436.0" class="wl" textLength="13.2" lengthAdjust="spacingAndGlyphs">380</text><line x1="567.5" y1="218.2" x2="597" y2="218.2" stroke="#0000ff" stroke-width="2.2"/>
<line x1="567.5" y1="228.6" x2="597" y2="228.6" stroke="#ff0000" stroke-width="2.2"/>
<line x1="567.5" y1="239" x2="597" y2="239" stroke="#008c00" stroke-width="1.8"/>
<text x="600" y="222.1" class="lg" textLength="44" lengthAdjust="spacingAndGlyphs">Panel Default</text>
<text x="600" y="233.5" class="lg" textLength="20.6" lengthAdjust="spacingAndGlyphs">Target</text>
<text x="600" y="244" class="lg" textLength="30" lengthAdjust="spacingAndGlyphs">Achieved</text>
</svg>

<svg class="abs" style="left:430px;top:478px" width="150" height="20" viewBox="430 478 150 20"><circle cx="440.1" cy="487.4" r="3.3" fill="#fff" stroke="#0a63c9" stroke-width="2.6"/><circle cx="567.2" cy="487.4" r="4.1" fill="#f0f0f0" stroke="#b0b0b0" stroke-width="0.9"/></svg><div class="radio" style="left:449px;top:482.2px">CIE1931 xyY</div><div class="radio" style="left:575.6px;top:482.2px;letter-spacing:0.25px">CIE1976 u'v'</div>
<div class="btn" style="left:422.6px;width:139.4px">Export Report</div>
<div class="btn" style="left:567px;width:139.4px;font-size:10.7px;text-indent:1px">Save ICC Profile</div>
<div class="frame"></div>
</div>
</body></html>
